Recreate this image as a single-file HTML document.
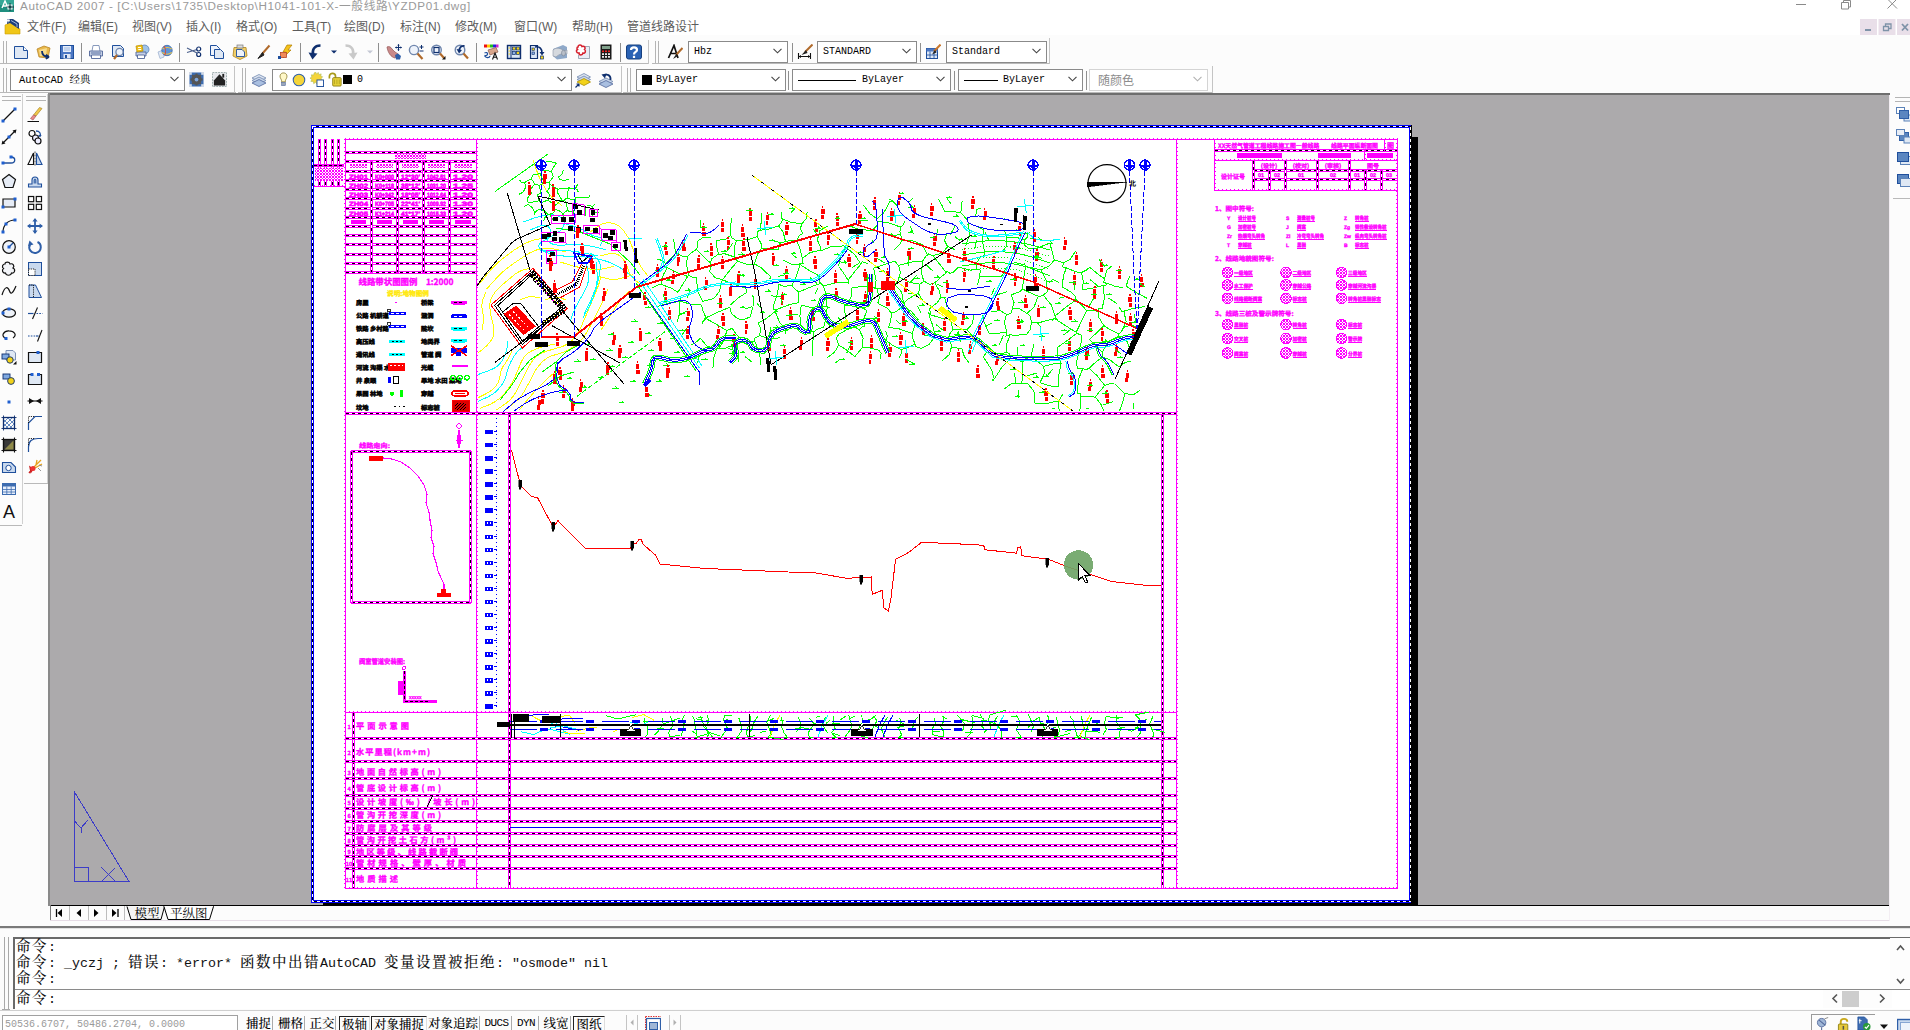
<!DOCTYPE html>
<html lang="zh"><head><meta charset="utf-8"><title>AutoCAD 2007</title>
<style>
html,body{margin:0;padding:0;}
body{width:1910px;height:1030px;overflow:hidden;position:relative;background:#fcfcfc;
 font-family:"Liberation Sans","Noto Sans CJK SC",sans-serif;font-size:12px;color:#000;}
.abs{position:absolute;}
#titlebar{left:0;top:0;width:1910px;height:15px;background:#fff;}
#title{left:20px;top:-4px;font-size:11.7px;color:#9a9a9a;white-space:nowrap;letter-spacing:0.6px;}
#menubar{left:0;top:15px;width:1910px;height:20px;background:#fff;}
.mi{position:absolute;top:19px;font-size:12px;color:#5c5c5c;white-space:nowrap;line-height:16px;}
.tb{position:absolute;background:#fcfcfc;}
.grip{position:absolute;width:1px;background:#b4b4b4;}
.sep{position:absolute;width:1px;height:19px;background:#8f8f8f;}
.combo{position:absolute;height:19px;border:1px solid #8a8a8a;background:#fff;box-sizing:content-box;
 font-family:"Liberation Mono","Noto Serif CJK SC",monospace;font-size:11px;line-height:19px;white-space:nowrap;}
.combo .t{position:absolute;left:5px;top:0;}
.combo .arr{position:absolute;right:5px;top:6px;width:9px;height:6px;}
.cmd{position:absolute;left:16px;font-family:"Liberation Mono",monospace;font-size:13.33px;line-height:16px;white-space:pre;color:#111;}
.cmd b{font-weight:500;font-family:"Noto Serif CJK SC",serif;font-size:14.5px;letter-spacing:1.5px;}
.sb{position:absolute;top:1016px;height:14px;font-family:"Noto Serif CJK SC","Liberation Serif",serif;font-weight:500;font-size:12.5px;line-height:15px;white-space:nowrap;color:#000;}
.sbp{border-left:1px solid #222;border-top:1px solid #222;border-right:1px solid #ddd;}
.sbn{border-right:1px solid #aaa;}
</style></head>
<body>
<div id="titlebar" class="abs"></div>
<svg class="abs" style="left:0;top:0" width="15" height="13" viewBox="0 0 15 13"><rect x="0" y="0" width="14" height="12" fill="#1f8f7f"/><rect x="0" y="0" width="14" height="5" fill="#35a796"/><path d="M2 8 L5 1 L8 8 M3.2 6 H6.8" stroke="#fff" stroke-width="1.4" fill="none"/><rect x="8" y="5" width="4" height="4" fill="none" stroke="#fff" stroke-width="1"/><path d="M10 3 V11 M6.5 7 H14" stroke="#123" stroke-width="0.8"/></svg>
<div id="title" class="abs">AutoCAD 2007 - [C:\Users\1735\Desktop\H1041-101-X-一般线路\YZDP01.dwg]</div>
<svg class="abs" style="left:1780px;top:0" width="130" height="14" viewBox="0 0 130 14"><path d="M16 4.5 H26" stroke="#8a8a8a" stroke-width="1"/><path d="M61.5 2.5 h7 v6.5 h-7 z M63.5 2.5 v-2 h7 v6.5 h-2" fill="none" stroke="#8a8a8a" stroke-width="1"/><path d="M107.5 -1 L117 8.5 M117 -1 L107.5 8.5" stroke="#8a8a8a" stroke-width="1"/></svg>
<div id="menubar" class="abs"></div>
<svg class="abs" style="left:4px;top:18px" width="18" height="17" viewBox="0 0 18 17"><path d="M1 16 V7 L6 5 L16 11 V16 Z" fill="#f0c617" stroke="#c99a00" stroke-width="0.6"/><path d="M3 1 L9 1 L15 5 V11 L6 5 L3 6 Z" fill="#1d3f7a"/><path d="M7 2.5 L13 6 V9" stroke="#9fb6dd" stroke-width="1" fill="none"/><path d="M4 0.5 v4 M2 2.5 h4 M2.6 1.1 l2.8 2.8 M5.4 1.1 l-2.8 2.8" stroke="#fff" stroke-width="0.8"/></svg>
<div class="mi" style="left:27px">文件(F)</div>
<div class="mi" style="left:78px">编辑(E)</div>
<div class="mi" style="left:132px">视图(V)</div>
<div class="mi" style="left:186px">插入(I)</div>
<div class="mi" style="left:236px">格式(O)</div>
<div class="mi" style="left:292px">工具(T)</div>
<div class="mi" style="left:344px">绘图(D)</div>
<div class="mi" style="left:400px">标注(N)</div>
<div class="mi" style="left:455px">修改(M)</div>
<div class="mi" style="left:514px">窗口(W)</div>
<div class="mi" style="left:572px">帮助(H)</div>
<div class="mi" style="left:627px">管道线路设计</div>
<svg class="abs" style="left:1860px;top:19px" width="52" height="18" viewBox="0 0 52 18"><rect x="0" y="0" width="17" height="17" fill="#e9dfe9"/><rect x="18.5" y="0" width="17" height="17" fill="#e9dfe9"/><rect x="37" y="0" width="17" height="17" fill="#e9dfe9"/><rect x="5" y="10" width="6" height="2" fill="#7f93a8"/><path d="M23.5 7.5 h5 v4 h-5 z M25.5 7 v-2 h5.5 v4.5 h-2" fill="none" stroke="#7f93a8" stroke-width="1.3"/><path d="M42 5 L48 11.5 M48 5 L42 11.5" stroke="#7f93a8" stroke-width="1.8"/></svg>
<div class="abs" style="left:0;top:35px;width:1910px;height:59px;background:#fcfcfc"></div>
<div class="grip" style="left:3px;top:41px;height:22px"></div><div class="grip" style="left:6px;top:41px;height:22px"></div>
<svg class="abs" style="left:13px;top:44px" width="16" height="16" viewBox="0 0 16 16"><path d="M1.5 2.5 H10.5 L14.5 6.5 V14.5 H1.5 Z" fill="#dfe8f4" stroke="#1f4f9c"/><path d="M10.5 2.5 V6.5 H14.5" fill="#fff" stroke="#1f4f9c"/></svg>
<svg class="abs" style="left:36px;top:44px" width="16" height="16" viewBox="0 0 16 16"><path d="M1 5 L8 2 L14 4 L12 14 L3 13 Z" fill="#e9b84a" stroke="#b8862a" stroke-width="0.8"/><path d="M3 6 L11 4 L10 12 L4 12 Z" fill="#f6dc8f"/><path d="M6 7 C6 11 9 13 13 13 M13 13 l-3 -2.4 M13 13 l-3.2 1.8" stroke="#0f2f6e" stroke-width="1.8" fill="none"/></svg>
<svg class="abs" style="left:59px;top:44px" width="16" height="16" viewBox="0 0 16 16"><rect x="1.5" y="1.5" width="13" height="13" fill="#4c78c4" stroke="#1f4f9c"/><rect x="4" y="2" width="8" height="6" fill="#e6eefb"/><path d="M5 4 H11 M5 6 H11" stroke="#8aa8d8" stroke-width="0.8"/><rect x="4.5" y="10" width="7" height="4.5" fill="#dfe7f5"/><rect x="6" y="11" width="2" height="3" fill="#1f4f9c"/></svg>
<svg class="abs" style="left:88px;top:44px" width="16" height="16" viewBox="0 0 16 16"><path d="M4 7 L5 1.5 H11 L12 7" fill="#fff" stroke="#7a8fb5" stroke-width="0.9"/><path d="M1.5 7 H14.5 V12 H1.5 Z" fill="#c5d0e6" stroke="#51679a" stroke-width="0.9"/><path d="M3.5 11 H12.5 V14.5 H3.5 Z" fill="#fff" stroke="#51679a" stroke-width="0.9"/><path d="M3 9 H13" stroke="#51679a" stroke-width="0.9"/></svg>
<svg class="abs" style="left:111px;top:44px" width="16" height="16" viewBox="0 0 16 16"><path d="M1.5 1.5 H9.5 L12.5 4.5 V12.5 H1.5 Z" fill="#dfe8f4" stroke="#1f4f9c"/><circle cx="8.5" cy="8" r="3.6" fill="#eef3fb" stroke="#6f86ad" stroke-width="1.3"/><path d="M6 11 L3 15" stroke="#b06a2b" stroke-width="2.2"/></svg>
<svg class="abs" style="left:133.5px;top:44px" width="16" height="16" viewBox="0 0 16 16"><circle cx="10.5" cy="5.5" r="4.5" fill="#9fc3e8" stroke="#5b82b8" stroke-width="0.8"/><path d="M2 8 H12 V12 H2 Z" fill="#c5d0e6" stroke="#51679a" stroke-width="0.9"/><path d="M3.5 11 H10.5 V14.5 H3.5 Z" fill="#fff" stroke="#51679a" stroke-width="0.9"/><path d="M2 2 L8 1 L9 7 L3 8 Z" fill="#f2c21a" stroke="#b88d00" stroke-width="0.7"/><path d="M4 3.5 H7 M4.3 5.5 H7.2" stroke="#fff" stroke-width="1"/></svg>
<svg class="abs" style="left:157px;top:44px" width="16" height="16" viewBox="0 0 16 16"><path d="M1 8 L6 6 L7 13 L3 14.5 Z" fill="#dfe8f4" stroke="#9fb2d1" stroke-width="0.8"/><circle cx="10" cy="6.5" r="5.2" fill="#5e93d6" stroke="#3a68ad" stroke-width="0.8"/><path d="M5.5 5 C8 3 12 3 14.6 5 M5.2 8.5 C8 10.5 12 10.5 14.8 8.5" stroke="#e9c34a" stroke-width="1.1" fill="none"/><path d="M7 2 C9 5 9 9 7.5 11.2" stroke="#d94a3a" stroke-width="1.1" fill="none"/></svg>
<svg class="abs" style="left:186px;top:44px" width="16" height="16" viewBox="0 0 16 16"><path d="M1 4 L11 9 M1 8.5 L11 5.5" stroke="#4a5f8c" stroke-width="1.1"/><circle cx="12.7" cy="5" r="2" fill="none" stroke="#0f2f6e" stroke-width="1.2"/><circle cx="12.7" cy="10.5" r="2" fill="none" stroke="#0f2f6e" stroke-width="1.2"/></svg>
<svg class="abs" style="left:209px;top:44px" width="16" height="16" viewBox="0 0 16 16"><path d="M1.5 1.5 H7.5 L10.5 4.5 V11.5 H1.5 Z" fill="#eef3fb" stroke="#1f4f9c"/><path d="M5.5 5.5 H11.5 L14.5 8.5 V14.5 H5.5 Z" fill="#dfe8f4" stroke="#1f4f9c"/></svg>
<svg class="abs" style="left:231.5px;top:44px" width="16" height="16" viewBox="0 0 16 16"><path d="M2 3.5 H14 L15 12 L8 15.5 L1 12 Z" fill="#f0cf6a" stroke="#b88d2a" stroke-width="0.9"/><rect x="5" y="1" width="6" height="3" fill="#ddd" stroke="#777" stroke-width="0.7"/><path d="M4.5 5.5 H10 L12.5 8 V12.5 H4.5 Z" fill="#eef3fb" stroke="#1f4f9c" stroke-width="0.9"/></svg>
<svg class="abs" style="left:255px;top:44px" width="16" height="16" viewBox="0 0 16 16"><path d="M14.5 1.5 L7 10" stroke="#b06a2b" stroke-width="2"/><path d="M7.5 8.5 L3 14.5 L9 11 Z" fill="#222" stroke="#222" stroke-width="1"/></svg>
<svg class="abs" style="left:277px;top:44px" width="16" height="16" viewBox="0 0 16 16"><path d="M10 1 L15 1 L11 6 L14 6 L6 14 L8.5 8 L6 8 Z" fill="#f5c31a" stroke="#b07b00" stroke-width="0.7"/><rect x="3.5" y="8.5" width="6" height="5" fill="#f08a5a" stroke="#b5482a" stroke-width="0.8"/><rect x="1" y="12" width="3" height="3" fill="#1f4f9c"/></svg>
<svg class="abs" style="left:307px;top:44px" width="16" height="16" viewBox="0 0 16 16"><path d="M13.5 1.5 C7 1.5 5 6 6 11" stroke="#0f2f6e" stroke-width="2.6" fill="none"/><path d="M1.5 8.5 L10.5 9.5 L5.5 15.5 Z" fill="#0f2f6e"/></svg>
<svg class="abs" style="left:326px;top:44px" width="16" height="16" viewBox="0 0 16 16"><path d="M5 6.5 H11 L8 9.5 Z" fill="#0f2f6e"/></svg>
<svg class="abs" style="left:343px;top:44px" width="16" height="16" viewBox="0 0 16 16"><path d="M2.5 1.5 C9 1.5 11 6 10 11" stroke="#c9c9c9" stroke-width="2.6" fill="none"/><path d="M14.5 8.5 L5.5 9.5 L10.5 15.5 Z" fill="#c9c9c9"/></svg>
<svg class="abs" style="left:362px;top:44px" width="16" height="16" viewBox="0 0 16 16"><path d="M5 6.5 H11 L8 9.5 Z" fill="#c4c8d4"/></svg>
<svg class="abs" style="left:385.5px;top:44px" width="16" height="16" viewBox="0 0 16 16"><path d="M1 3 C3 2 5 3 6 5 L9 8 L12 10 L9 14 C5 13 2 9 1 3 Z" fill="#c98a8a" stroke="#9a5e5e" stroke-width="0.8"/><path d="M9 11 L12 9.5 L15 12 L14 15.5 H10 Z" fill="#2f5fa8"/><path d="M12.5 0.5 V6.5 M9.5 3.5 H15.5" stroke="#0f2f6e" stroke-width="1"/><path d="M12.5 0 l-1.3 1.6 h2.6 z M12.5 7 l-1.3 -1.6 h2.6 z M9 3.5 l1.6 -1.3 v2.6 z M16 3.5 l-1.6 -1.3 v2.6 z" fill="#0f2f6e"/></svg>
<svg class="abs" style="left:408px;top:44px" width="16" height="16" viewBox="0 0 16 16"><circle cx="6" cy="6" r="4.6" fill="#eef3fb" stroke="#6f86ad" stroke-width="1.4"/><path d="M9.5 9.5 L14.5 15" stroke="#b06a2b" stroke-width="2.2"/><path d="M11.5 3 H15.5 M13.5 1 V5 M11.5 7 H15.5" stroke="#0f2f6e" stroke-width="1"/></svg>
<svg class="abs" style="left:430px;top:44px" width="16" height="16" viewBox="0 0 16 16"><circle cx="6.5" cy="6" r="4.8" fill="#eef3fb" stroke="#6f86ad" stroke-width="1.4"/><rect x="4" y="3.5" width="5" height="5" fill="none" stroke="#0f2f6e" stroke-width="1.2"/><path d="M10 9.5 L14 14" stroke="#b06a2b" stroke-width="2.2"/><path d="M15.5 12 V15.5 H12 Z" fill="#111"/></svg>
<svg class="abs" style="left:453px;top:44px" width="16" height="16" viewBox="0 0 16 16"><circle cx="7" cy="6" r="4.8" fill="#eef3fb" stroke="#6f86ad" stroke-width="1.4"/><path d="M10.5 9.5 L15 14.5" stroke="#b06a2b" stroke-width="2.2"/><path d="M11.5 2 C8 1.5 6 4 6.5 7" stroke="#0f2f6e" stroke-width="1.8" fill="none"/><path d="M3.5 5 L9 6 L6 9.5 Z" fill="#0f2f6e"/></svg>
<svg class="abs" style="left:483px;top:44px" width="16" height="16" viewBox="0 0 16 16"><rect x="1" y="0.5" width="3" height="3" fill="#e11"/><rect x="4" y="0.5" width="3" height="3" fill="#fc0"/><rect x="7" y="0.5" width="3" height="3" fill="#2b2"/><rect x="10" y="0.5" width="3" height="3" fill="#22d"/><rect x="13" y="0.5" width="2.5" height="3" fill="#c2c"/><path d="M5 6 L13 3.5 L15 8 L7 11 Z" fill="#d9a58a" stroke="#8a5a4a" stroke-width="0.7"/><path d="M1.5 9 C5 7 6 12 2 11.5 C1 13 6 15 7 12" stroke="#1f4f9c" stroke-width="1.2" fill="none"/><path d="M9.5 15.5 L12 9 L14.5 15.5 M10.4 13.3 H13.6" stroke="#111" stroke-width="1.1" fill="none"/></svg>
<svg class="abs" style="left:506px;top:44px" width="16" height="16" viewBox="0 0 16 16"><rect x="1.5" y="1.5" width="13" height="13" fill="#dbe6f6" stroke="#0f2f6e" stroke-width="1.4"/><path d="M5 1.5 V14.5" stroke="#0f2f6e" stroke-width="1"/><rect x="6.5" y="3" width="3" height="3" fill="#f2d21a" stroke="#0f2f6e" stroke-width="0.7"/><rect x="10.5" y="3" width="3" height="3" fill="#f2d21a" stroke="#0f2f6e" stroke-width="0.7"/><rect x="6.5" y="7.5" width="3" height="3" fill="#8fb0de" stroke="#0f2f6e" stroke-width="0.7"/><rect x="10.5" y="7.5" width="3" height="3" fill="#f2d21a" stroke="#0f2f6e" stroke-width="0.7"/><path d="M2.5 4 h1.5 M2.5 7 h1.5 M2.5 10 h1.5" stroke="#f2d21a" stroke-width="1.2"/></svg>
<svg class="abs" style="left:529px;top:44px" width="16" height="16" viewBox="0 0 16 16"><path d="M1.5 1.5 H8.5 V14.5 H1.5 Z" fill="#dbe6f6" stroke="#0f2f6e" stroke-width="1.2"/><rect x="3" y="4" width="2.5" height="2.5" fill="#f2d21a" stroke="#0f2f6e" stroke-width="0.6"/><rect x="3" y="8" width="2.5" height="2.5" fill="#8fb0de" stroke="#0f2f6e" stroke-width="0.6"/><path d="M6 3 C11 2 13 5 13 9" stroke="#0f2f6e" stroke-width="1.6" fill="none"/><path d="M10.5 8 H15.5 L13 11.5 Z" fill="#0f2f6e"/><rect x="11.5" y="12" width="3" height="3" fill="#f2d21a" stroke="#0f2f6e" stroke-width="0.7"/></svg>
<svg class="abs" style="left:552px;top:44px" width="16" height="16" viewBox="0 0 16 16"><path d="M1 5 L11 1 L15 3 V14 L5 15.5 L1 12 Z" fill="#8fa9c9"/><path d="M1 6 C4 3 9 4 12 7 L15 6 V10 C11 9 7 10 4 13 L1 12 Z" fill="#d5d9de" stroke="#8a94a4" stroke-width="0.6"/><ellipse cx="11.5" cy="9" rx="2" ry="2.8" fill="#b9bfc9" stroke="#7a8494" stroke-width="0.6"/></svg>
<svg class="abs" style="left:575px;top:44px" width="16" height="16" viewBox="0 0 16 16"><path d="M6 2.5 H14.5 V14.5 H3.5 V11" fill="#e9eef6" stroke="#8a94a4" stroke-width="0.8"/><path d="M3 3 C3 0.5 6.5 0.5 7 2.5 C9.5 1.5 11 4 9.5 5.5 C11.5 7 10 10 8 9 C7.5 11.5 4 11.5 4 9 C1.5 9.5 0.5 6.5 2.5 5.5 C1.5 4.5 2 3 3 3 Z" fill="#fff" stroke="#d61f2c" stroke-width="1.5"/></svg>
<svg class="abs" style="left:598px;top:44px" width="16" height="16" viewBox="0 0 16 16"><rect x="2.5" y="0.5" width="11" height="15" fill="#1a1a1a"/><rect x="4" y="2" width="8" height="3" fill="#7fa08a"/><g fill="#e22"><rect x="4" y="6.5" width="2" height="1.6"/><rect x="7" y="6.5" width="2" height="1.6"/><rect x="10" y="6.5" width="2" height="1.6"/></g><g fill="#fff"><rect x="4" y="9.3" width="2" height="1.6"/><rect x="7" y="9.3" width="2" height="1.6"/><rect x="10" y="9.3" width="2" height="1.6"/><rect x="4" y="12.1" width="2" height="1.6"/><rect x="7" y="12.1" width="2" height="1.6"/><rect x="10" y="12.1" width="2" height="1.6"/></g></svg>
<svg class="abs" style="left:626px;top:44px" width="16" height="16" viewBox="0 0 16 16"><rect x="0.5" y="1" width="15" height="14" rx="2" fill="#2a62b4" stroke="#17407f"/><path d="M5 6 C5 2.5 11 2.5 11 6 C11 8 8 8 8 10.5" stroke="#fff" stroke-width="2.2" fill="none"/><rect x="6.9" y="11.8" width="2.2" height="2.2" fill="#fff"/></svg>
<div class="sep" style="left:81px;top:43px"></div>
<div class="sep" style="left:179px;top:43px"></div>
<div class="sep" style="left:300px;top:43px"></div>
<div class="sep" style="left:378px;top:43px"></div>
<div class="sep" style="left:476px;top:43px"></div>
<div class="sep" style="left:620px;top:43px"></div>
<div class="abs" style="left:0px;top:63px;width:648px;height:1px;background:#b9b9b9"></div>
<div class="abs" style="left:648px;top:40px;width:1px;height:24px;background:#c4c4c4"></div>
<div class="grip" style="left:655px;top:41px;height:22px"></div><div class="grip" style="left:658px;top:41px;height:22px"></div>
<svg class="abs" style="left:667px;top:44px" width="16" height="16" viewBox="0 0 16 16"><path d="M1.5 14 L7 1.5 L11 14 M3.5 9.5 H9.5" stroke="#111" stroke-width="1.7" fill="none"/><path d="M15.5 4 L9 11" stroke="#b06a2b" stroke-width="2"/><path d="M9.5 9.5 L6 15 L11 12 Z" fill="#222"/></svg>
<div class="combo" style="left:688px;top:41px;width:98px;height:20px;line-height:20px;border-color:#8a8a8a;color:#000;font-size:10px"><span class="t" style="left:5px">Hbz</span><svg class="arr" viewBox="0 0 9 6"><path d="M0.5 0.8 L4.5 4.8 L8.5 0.8" fill="none" stroke="#444" stroke-width="1.1"/></svg></div>
<div class="sep" style="left:792px;top:43px"></div>
<svg class="abs" style="left:797px;top:44px" width="16" height="16" viewBox="0 0 16 16"><path d="M1.5 9 V15 M13.5 9 V15 M1.5 12.5 H13.5" stroke="#111" stroke-width="1.1"/><path d="M1.5 12.5 l2.5 -1.5 v3 z M13.5 12.5 l-2.5 -1.5 v3 z" fill="#111"/><path d="M15.5 0.5 L8 8" stroke="#b06a2b" stroke-width="2"/><path d="M9 6 L4.5 11 L10.5 9 Z" fill="#222"/></svg>
<div class="combo" style="left:817px;top:41px;width:98px;height:20px;line-height:20px;border-color:#8a8a8a;color:#000;font-size:10px"><span class="t" style="left:5px">STANDARD</span><svg class="arr" viewBox="0 0 9 6"><path d="M0.5 0.8 L4.5 4.8 L8.5 0.8" fill="none" stroke="#444" stroke-width="1.1"/></svg></div>
<div class="sep" style="left:920px;top:43px"></div>
<svg class="abs" style="left:925px;top:44px" width="16" height="16" viewBox="0 0 16 16"><rect x="1.5" y="4.5" width="11" height="10" fill="#dbe6f6" stroke="#1f4f9c" stroke-width="1"/><rect x="1.5" y="4.5" width="11" height="3" fill="#4c78c4"/><path d="M5 7.5 V14.5 M9 7.5 V14.5 M1.5 11 H12.5" stroke="#1f4f9c" stroke-width="0.8"/><path d="M15.5 0.5 L9 7.5" stroke="#c9762b" stroke-width="2"/><path d="M10 6 L7 10.5 L11.5 8.5 Z" fill="#222"/></svg>
<div class="combo" style="left:946px;top:41px;width:99px;height:20px;line-height:20px;border-color:#8a8a8a;color:#000;font-size:10px"><span class="t" style="left:5px">Standard</span><svg class="arr" viewBox="0 0 9 6"><path d="M0.5 0.8 L4.5 4.8 L8.5 0.8" fill="none" stroke="#444" stroke-width="1.1"/></svg></div>
<div class="abs" style="left:652px;top:63px;width:398px;height:1px;background:#b9b9b9"></div>
<div class="abs" style="left:1049px;top:38px;width:1px;height:26px;background:#c4c4c4"></div>
<div class="grip" style="left:3px;top:68px;height:24px"></div><div class="grip" style="left:6px;top:68px;height:24px"></div>
<div class="combo" style="left:10px;top:69px;width:173px;height:20px;line-height:20px;border-color:#8a8a8a;color:#000;font-size:10.5px"><span class="t" style="left:8px">AutoCAD 经典</span><svg class="arr" viewBox="0 0 9 6"><path d="M0.5 0.8 L4.5 4.8 L8.5 0.8" fill="none" stroke="#444" stroke-width="1.1"/></svg></div>
<svg class="abs" style="left:188.5px;top:72px" width="15" height="15" viewBox="0 0 16 16"><rect x="0.5" y="0.5" width="15" height="15" fill="#3d6cb0"/><circle cx="8" cy="8" r="4.2" fill="none" stroke="#555" stroke-width="2.6"/><path d="M8 1.5 V14.5 M1.5 8 H14.5 M3.4 3.4 L12.6 12.6 M12.6 3.4 L3.4 12.6" stroke="#555" stroke-width="2"/><circle cx="8" cy="8" r="2" fill="#7fa8e0"/><rect x="0" y="0" width="3" height="3" fill="#cfd8e6"/><rect x="13" y="0" width="3" height="3" fill="#cfd8e6"/><rect x="0" y="13" width="3" height="3" fill="#cfd8e6"/><rect x="13" y="13" width="3" height="3" fill="#cfd8e6"/></svg>
<svg class="abs" style="left:211.5px;top:72px" width="15" height="15" viewBox="0 0 16 16"><rect x="0.5" y="0.5" width="15" height="15" fill="#e6e8ec" stroke="#9aa" stroke-dasharray="2 1"/><path d="M2 9 L8 2.5 L14 9 V14.5 H2 Z" fill="#222"/><rect x="11" y="2" width="2" height="4" fill="#222"/></svg>
<div class="abs" style="left:0px;top:92px;width:236px;height:1px;background:#b9b9b9"></div>
<div class="abs" style="left:234px;top:66px;width:1px;height:27px;background:#c4c4c4"></div>
<div class="grip" style="left:242px;top:68px;height:24px"></div><div class="grip" style="left:245px;top:68px;height:24px"></div>
<svg class="abs" style="left:251px;top:71.5px" width="16" height="16" viewBox="0 0 16 16"><path d="M1 6 L8 2.5 L15 6 L8 9.5 Z" fill="#dfe6f2" stroke="#6f86ad" stroke-width="0.8"/><path d="M1 8.5 L8 5 L15 8.5 L8 12 Z" fill="#c9d6ea" stroke="#6f86ad" stroke-width="0.8"/><path d="M1 11 L8 7.5 L15 11 L8 14.5 Z" fill="#a9bfe0" stroke="#51679a" stroke-width="0.8"/></svg>
<div class="combo" style="left:272px;top:69px;width:298px;height:20px;line-height:20px;border-color:#8a8a8a;color:#000;font-size:10px"><span class="t" style="left:84px">0</span><svg class="arr" viewBox="0 0 9 6"><path d="M0.5 0.8 L4.5 4.8 L8.5 0.8" fill="none" stroke="#444" stroke-width="1.1"/></svg></div>
<svg class="abs" style="left:275.5px;top:71.5px" width="15" height="15" viewBox="0 0 16 16"><path d="M8 1 C4.5 1 3.5 4.5 5 7 C6 8.5 6 9.5 6 10.5 H10 C10 9.5 10 8.5 11 7 C12.5 4.5 11.5 1 8 1 Z" fill="#fff8c8" stroke="#8a7a2a" stroke-width="0.9"/><rect x="6" y="11" width="4" height="3.5" fill="#9aa6b8" stroke="#51679a" stroke-width="0.6"/></svg>
<svg class="abs" style="left:291.5px;top:72.5px" width="14" height="14" viewBox="0 0 16 16"><circle cx="8" cy="8" r="6.6" fill="#f5d53a" stroke="#2f5fa8" stroke-width="1.2"/></svg>
<svg class="abs" style="left:308.5px;top:72px" width="15" height="15" viewBox="0 0 16 16"><path d="M7 0 L8 2 L10 0.5 L10.5 2.8 L13 2 L12.5 4.5 L14.5 5 L13 7 L14.5 9 L12 9.5 L12 12 L9.8 11 L8.5 13 L7 11 L5 12.5 L4.5 10 L2 10 L3 8 L1 6.5 L3 5.5 L2.5 3 L5 3.2 L5.5 1 Z" fill="#f5d53a" stroke="#a8b85a" stroke-width="0.6"/><rect x="8.5" y="8.5" width="7" height="7" fill="#fff" stroke="#1f4f9c" stroke-width="1"/></svg>
<svg class="abs" style="left:327.5px;top:71.5px" width="15" height="15" viewBox="0 0 16 16"><path d="M1.5 7 V4.5 C1.5 0.5 8 0.5 8 4.5 V6" fill="none" stroke="#a89a1a" stroke-width="1.8"/><rect x="5" y="6" width="9" height="9" rx="1" fill="#e6d23a" stroke="#8a7a0a" stroke-width="0.9"/><path d="M7 8 V13 M9.5 8 V13 M12 8 V13" stroke="#a89a1a" stroke-width="0.8"/></svg>
<div class="abs" style="left:343px;top:75px;width:9px;height:9px;background:#000"></div>
<svg class="abs" style="left:575px;top:71.5px" width="16" height="16" viewBox="0 0 16 16"><path d="M2 5 L9 1.5 L15.5 5 L9 8.5 Z" fill="#dfe6f2" stroke="#6f86ad" stroke-width="0.8"/><path d="M2 7.5 L9 4 L15.5 7.5 L9 11 Z" fill="#c9d6ea" stroke="#6f86ad" stroke-width="0.8"/><path d="M2 10 L9 6.5 L15.5 10 L9 13.5 Z" fill="#f2d21a" stroke="#a88d00" stroke-width="0.8"/><path d="M0.5 15.5 L4 12 M4 12 h-2.5 M4 12 v2.5" stroke="#0f2f6e" stroke-width="1.2" fill="none"/></svg>
<svg class="abs" style="left:598px;top:71.5px" width="16" height="16" viewBox="0 0 16 16"><path d="M1 9.5 L8 6 L15 9.5 L8 13 Z" fill="#c9d6ea" stroke="#6f86ad" stroke-width="0.8"/><path d="M1 12 L8 8.5 L15 12 L8 15.5 Z" fill="#a9bfe0" stroke="#51679a" stroke-width="0.8"/><path d="M12.5 8 C13 3 9 1.5 6 3.5" stroke="#0f2f6e" stroke-width="1.8" fill="none"/><path d="M3.5 2.5 L8.5 1.5 L7 6.5 Z" fill="#0f2f6e"/></svg>
<div class="abs" style="left:238px;top:92px;width:384px;height:1px;background:#b9b9b9"></div>
<div class="abs" style="left:621px;top:66px;width:1px;height:27px;background:#c4c4c4"></div>
<div class="grip" style="left:627px;top:68px;height:24px"></div><div class="grip" style="left:630px;top:68px;height:24px"></div>
<div class="combo" style="left:636px;top:69px;width:148px;height:20px;line-height:20px;border-color:#8a8a8a;color:#000;font-size:10px"><div style="position:absolute;left:5px;top:5px;width:10px;height:10px;background:#000"></div><span class="t" style="left:19px">ByLayer</span><svg class="arr" viewBox="0 0 9 6"><path d="M0.5 0.8 L4.5 4.8 L8.5 0.8" fill="none" stroke="#444" stroke-width="1.1"/></svg></div>
<div class="abs" style="left:788px;top:71px;width:1px;height:19px;background:#8f8f8f"></div>
<div class="combo" style="left:792px;top:69px;width:157px;height:20px;line-height:20px;border-color:#8a8a8a;color:#000;font-size:10px"><div style="position:absolute;left:5px;top:10px;width:58px;height:1px;background:#000"></div><span class="t" style="left:69px">ByLayer</span><svg class="arr" viewBox="0 0 9 6"><path d="M0.5 0.8 L4.5 4.8 L8.5 0.8" fill="none" stroke="#444" stroke-width="1.1"/></svg></div>
<div class="abs" style="left:954px;top:71px;width:1px;height:19px;background:#8f8f8f"></div>
<div class="combo" style="left:958px;top:69px;width:123px;height:20px;line-height:20px;border-color:#8a8a8a;color:#000;font-size:10px"><div style="position:absolute;left:5px;top:10px;width:34px;height:1px;background:#000"></div><span class="t" style="left:44px">ByLayer</span><svg class="arr" viewBox="0 0 9 6"><path d="M0.5 0.8 L4.5 4.8 L8.5 0.8" fill="none" stroke="#444" stroke-width="1.1"/></svg></div>
<div class="abs" style="left:1086px;top:71px;width:1px;height:19px;background:#8f8f8f"></div>
<div class="combo" style="left:1089px;top:69px;width:117px;height:20px;line-height:20px;border-color:#d4d4d4;color:#8c8c8c;font-size:10px"><span class="t" style="left:8px"><span style="font-family:'Noto Sans CJK SC',sans-serif;font-size:12px">随颜色</span></span><svg class="arr" viewBox="0 0 9 6"><path d="M0.5 0.8 L4.5 4.8 L8.5 0.8" fill="none" stroke="#b0b0b0" stroke-width="1.1"/></svg></div>
<div class="abs" style="left:623px;top:92px;width:590px;height:1px;background:#b9b9b9"></div>
<div class="abs" style="left:1212px;top:66px;width:1px;height:27px;background:#c4c4c4"></div>
<div class="abs" style="left:0;top:94px;width:48px;height:812px;background:#fcfcfc"></div>
<div class="abs" style="left:2px;top:96px;width:19px;height:1px;background:#b4b4b4"></div>
<div class="abs" style="left:2px;top:100px;width:19px;height:1px;background:#b4b4b4"></div>
<div class="abs" style="left:26px;top:96px;width:20px;height:1px;background:#b4b4b4"></div>
<div class="abs" style="left:26px;top:100px;width:20px;height:1px;background:#b4b4b4"></div>
<div class="abs" style="left:22px;top:94px;width:1px;height:430px;background:#d0d0d0"></div>
<div class="abs" style="left:47px;top:94px;width:1px;height:390px;background:#d0d0d0"></div>
<svg class="abs" style="left:1px;top:107px" width="16" height="16" viewBox="0 0 16 16"><path d="M2 14 L14 2" stroke="#111" stroke-width="1.2"/><rect x="0.5" y="12.5" width="3" height="3" fill="#1f5fd0"/><rect x="12.5" y="0.5" width="3" height="3" fill="#1f5fd0"/></svg>
<svg class="abs" style="left:1px;top:129px" width="16" height="16" viewBox="0 0 16 16"><path d="M1.5 14.5 L14.5 1.5" stroke="#111" stroke-width="1.2"/><path d="M0.5 15.5 l1 -4 l3 3 z M15.5 0.5 l-1 4 l-3 -3 z" fill="#111"/><rect x="6.5" y="6.5" width="3" height="3" fill="#1f5fd0"/></svg>
<svg class="abs" style="left:1px;top:150.6px" width="16" height="16" viewBox="0 0 16 16"><path d="M2 12 H10 C15 12 15 6 10 6" stroke="#1f4f9c" stroke-width="1.3" fill="none"/><rect x="0.5" y="10.5" width="3" height="3" fill="#1f5fd0"/><rect x="8.5" y="4.5" width="3" height="3" fill="#1f5fd0"/></svg>
<svg class="abs" style="left:1px;top:173px" width="16" height="16" viewBox="0 0 16 16"><path d="M8 1.5 L14.5 6.5 L12 14.5 H4 L1.5 6.5 Z" fill="#e6ecf6" stroke="#111" stroke-width="1.2"/></svg>
<svg class="abs" style="left:1px;top:195px" width="16" height="16" viewBox="0 0 16 16"><path d="M2 4 H14 V12 H2 Z" fill="#e6ecf6" stroke="#111" stroke-width="1.2"/><rect x="0.5" y="10.5" width="3" height="3" fill="#1f5fd0"/><rect x="12.5" y="2.5" width="3" height="3" fill="#1f5fd0"/></svg>
<svg class="abs" style="left:1px;top:217.5px" width="16" height="16" viewBox="0 0 16 16"><path d="M2 14 C2 7 7 2 14 2" stroke="#111" stroke-width="1.2" fill="none"/><rect x="0.5" y="12.5" width="3" height="3" fill="#1f5fd0"/><rect x="12.5" y="0.5" width="3" height="3" fill="#1f5fd0"/><rect x="3.5" y="4.5" width="3" height="3" fill="#1f5fd0"/></svg>
<svg class="abs" style="left:1px;top:238.5px" width="16" height="16" viewBox="0 0 16 16"><circle cx="8" cy="8" r="6.3" fill="#eef2f8" stroke="#111" stroke-width="1.2"/><path d="M8 8 L12 4" stroke="#1f4f9c" stroke-width="1.2"/><rect x="6.5" y="6.5" width="3" height="3" fill="#1f5fd0"/></svg>
<svg class="abs" style="left:1px;top:261px" width="16" height="16" viewBox="0 0 16 16"><path d="M4 3 C4 0.5 8.5 0.5 9 3 C12 2 14 5 12 7 C15 8.5 13.5 13 10.5 12 C10 15 5 15 4.5 12 C1.5 12.5 0.5 9 2.5 7.5 C0.5 6 1.5 3 4 3 Z" fill="#f2f4f8" stroke="#111" stroke-width="1.2"/></svg>
<svg class="abs" style="left:1px;top:283px" width="16" height="16" viewBox="0 0 16 16"><path d="M1 12 C4 2 7 4 8.5 8 C10 12 12 10 15 3" stroke="#111" stroke-width="1.2" fill="none"/></svg>
<svg class="abs" style="left:1px;top:305px" width="16" height="16" viewBox="0 0 16 16"><ellipse cx="8" cy="8" rx="6.5" ry="4.2" fill="#eef2f8" stroke="#111" stroke-width="1.2"/><rect x="0.5" y="6.5" width="3" height="3" fill="#1f5fd0"/><rect x="6.5" y="2.5" width="3" height="3" fill="#1f5fd0"/></svg>
<svg class="abs" style="left:1px;top:327px" width="16" height="16" viewBox="0 0 16 16"><path d="M5 11.5 C-1 9 3 3.5 8 3.8 C13 3.8 16.5 8 12 11" stroke="#111" stroke-width="1.2" fill="none"/><rect x="3.5" y="10" width="3" height="3" fill="#1f5fd0"/></svg>
<svg class="abs" style="left:1px;top:348.7px" width="16" height="16" viewBox="0 0 16 16"><path d="M5 1.5 H12 L14.5 4 V11 H5 Z" fill="#dfe8f4" stroke="#6f86ad" stroke-width="0.9"/><rect x="1" y="5" width="7" height="5" fill="#7fa8e0" stroke="#0f2f6e" stroke-width="0.9"/><circle cx="9" cy="11" r="3.2" fill="#f2d21a" stroke="#0f2f6e" stroke-width="0.9"/><path d="M15.5 12 V15.5 H12 Z" fill="#111"/></svg>
<svg class="abs" style="left:1px;top:370.5px" width="16" height="16" viewBox="0 0 16 16"><rect x="2" y="3" width="7" height="5" fill="#7fa8e0" stroke="#0f2f6e" stroke-width="0.9"/><circle cx="10" cy="10" r="3.4" fill="#f2d21a" stroke="#0f2f6e" stroke-width="0.9"/></svg>
<svg class="abs" style="left:1px;top:393px" width="16" height="16" viewBox="0 0 16 16"><rect x="6.5" y="7.5" width="3" height="3" fill="#1f5fd0"/></svg>
<svg class="abs" style="left:1px;top:415px" width="16" height="16" viewBox="0 0 16 16"><rect x="2.5" y="2.5" width="11" height="11" fill="none" stroke="#0f2f6e" stroke-width="1.3"/><path d="M0.5 2.5 H15.5 M0.5 13.5 H15.5 M2.5 0.5 V15.5 M13.5 0.5 V15.5" stroke="#0f2f6e" stroke-width="0.9"/><path d="M3 7 L7 3 M3 11 L11 3 M5 13 L13 5 M9 13 L13 9 M3 5 L11 13 M7 3 L13 9 M3 9 L7 13" stroke="#3d6cb0" stroke-width="0.8"/></svg>
<svg class="abs" style="left:1px;top:437px" width="16" height="16" viewBox="0 0 16 16"><rect x="2.5" y="2.5" width="11" height="11" fill="#3a3a3a" stroke="#111" stroke-width="1.3"/><path d="M3.5 12.5 L12.5 3.5 V12.5 Z" fill="#8f8a4a"/><path d="M0.5 2.5 H15.5 M0.5 13.5 H15.5 M2.5 0.5 V15.5 M13.5 0.5 V15.5" stroke="#111" stroke-width="1.1"/></svg>
<svg class="abs" style="left:1px;top:459px" width="16" height="16" viewBox="0 0 16 16"><path d="M1.5 3.5 H10 L14.5 8 V13.5 H1.5 Z" fill="#c9d9ee" stroke="#1f4f9c" stroke-width="1.1"/><circle cx="7.5" cy="9" r="2.7" fill="#fff" stroke="#1f4f9c" stroke-width="1"/></svg>
<svg class="abs" style="left:1px;top:480.7px" width="16" height="16" viewBox="0 0 16 16"><rect x="1.5" y="2.5" width="13" height="11" fill="#e6eefb" stroke="#3d6cb0" stroke-width="1"/><rect x="1.5" y="2.5" width="13" height="3" fill="#3d6cb0"/><path d="M1.5 8.5 H14.5 M1.5 11 H14.5 M5.8 5.5 V13.5 M10.2 5.5 V13.5" stroke="#3d6cb0" stroke-width="0.8"/></svg>
<svg class="abs" style="left:1px;top:503px" width="16" height="16" viewBox="0 0 16 16"><text x="8" y="14.5" font-family="Liberation Sans, sans-serif" font-size="18" text-anchor="middle" fill="#111">A</text></svg>
<svg class="abs" style="left:27px;top:107px" width="16" height="16" viewBox="0 0 16 16"><path d="M9 9 L15 1.5 L12.5 0.5 L6.5 8 Z" fill="#f2c84a" stroke="#a8862a" stroke-width="0.7"/><path d="M6.5 8 L9 9 L6 13 L3.5 11.5 Z" fill="#e88a8a" stroke="#a85a5a" stroke-width="0.7"/><path d="M0.5 14.5 H12" stroke="#111" stroke-width="1"/></svg>
<svg class="abs" style="left:27px;top:129px" width="16" height="16" viewBox="0 0 16 16"><circle cx="5" cy="4.5" r="3" fill="none" stroke="#111" stroke-width="1.2"/><circle cx="8.5" cy="9" r="3" fill="#eef" stroke="#111" stroke-width="1.2"/><circle cx="11" cy="12" r="3" fill="#eef" stroke="#111" stroke-width="1.2"/><path d="M9 2 C13 2 14 5 13 7" stroke="#1f4f9c" stroke-width="1.3" fill="none"/><path d="M13 8.5 l-2 -2.5 h3.6 z" fill="#1f4f9c"/></svg>
<svg class="abs" style="left:27px;top:150.6px" width="16" height="16" viewBox="0 0 16 16"><path d="M6.5 2 V13.5 H1 Z" fill="#fff" stroke="#111" stroke-width="1.1"/><path d="M9.5 2 V13.5 H15 Z" fill="#c9d9ee" stroke="#1f4f9c" stroke-width="1.1"/><path d="M8 0.5 V15.5" stroke="#111" stroke-width="0.8" stroke-dasharray="2 1"/></svg>
<svg class="abs" style="left:27px;top:173px" width="16" height="16" viewBox="0 0 16 16"><path d="M1.5 14 V11 H5 V7 C5 3 11 3 11 7 V11 H14.5 V14 Z" fill="#c9d9ee" stroke="#1f4f9c" stroke-width="1.1"/><path d="M7.2 10.5 V7 C7.2 5.8 8.8 5.8 8.8 7 V10.5" fill="none" stroke="#1f4f9c" stroke-width="1"/></svg>
<svg class="abs" style="left:27px;top:195px" width="16" height="16" viewBox="0 0 16 16"><rect x="1.5" y="1.5" width="5.2" height="5.2" fill="#fff" stroke="#111" stroke-width="1.2"/><rect x="9.3" y="1.5" width="5.2" height="5.2" fill="#fff" stroke="#111" stroke-width="1.2"/><rect x="1.5" y="9.3" width="5.2" height="5.2" fill="#fff" stroke="#111" stroke-width="1.2"/><rect x="9.3" y="9.3" width="5.2" height="5.2" fill="#fff" stroke="#111" stroke-width="1.2"/></svg>
<svg class="abs" style="left:27px;top:217.5px" width="16" height="16" viewBox="0 0 16 16"><path d="M8 1 V15 M1 8 H15" stroke="#2f5fa8" stroke-width="1.8"/><path d="M8 0 l-2.6 3.4 h5.2 z M8 16 l-2.6 -3.4 h5.2 z M0 8 l3.4 -2.6 v5.2 z M16 8 l-3.4 -2.6 v5.2 z" fill="#2f5fa8"/></svg>
<svg class="abs" style="left:27px;top:238.5px" width="16" height="16" viewBox="0 0 16 16"><path d="M10.5 3 C15 5 15 12 9.5 13.8 C4 15 0.8 9.5 3 5.5" stroke="#2f5fa8" stroke-width="2" fill="none"/><path d="M1 7 L2.5 1.5 L6.5 5.5 Z" fill="#2f5fa8"/></svg>
<svg class="abs" style="left:27px;top:261px" width="16" height="16" viewBox="0 0 16 16"><rect x="1.5" y="1.5" width="13" height="13" fill="#c9d9ee" stroke="#1f4f9c" stroke-width="1"/><rect x="1.5" y="8" width="6.5" height="6.5" fill="#fff" stroke="#111" stroke-width="0.9" stroke-dasharray="1.2 1"/></svg>
<svg class="abs" style="left:27px;top:283px" width="16" height="16" viewBox="0 0 16 16"><path d="M2 2 V14.5 H14.5 L8.5 2 Z" fill="#c9d9ee" stroke="#1f4f9c" stroke-width="1"/><path d="M2 2 H6.5 V14.5" fill="none" stroke="#111" stroke-width="0.9" stroke-dasharray="1.2 1"/></svg>
<svg class="abs" style="left:27px;top:305px" width="16" height="16" viewBox="0 0 16 16"><path d="M1 8.5 H6.5" stroke="#1f4f9c" stroke-width="1.2"/><path d="M9.5 8.5 H15.5" stroke="#1f4f9c" stroke-width="1.1" stroke-dasharray="1.6 1.2"/><path d="M5.5 14 L10.5 2.5" stroke="#111" stroke-width="1.1"/></svg>
<svg class="abs" style="left:27px;top:327px" width="16" height="16" viewBox="0 0 16 16"><path d="M1 9 H9" stroke="#1f4f9c" stroke-width="1.1" stroke-dasharray="1.6 1.2"/><path d="M9 9 H11.5" stroke="#1f4f9c" stroke-width="1.2"/><path d="M10.5 14.5 L15 3" stroke="#111" stroke-width="1.1"/></svg>
<svg class="abs" style="left:27px;top:348.7px" width="16" height="16" viewBox="0 0 16 16"><path d="M1.5 3.5 H14.5 V13.5 H1.5 Z" fill="#dfe8f4" stroke="#111" stroke-width="1.2"/><rect x="9.5" y="2" width="3" height="3" fill="#1f5fd0"/></svg>
<svg class="abs" style="left:27px;top:370.5px" width="16" height="16" viewBox="0 0 16 16"><path d="M5 3.5 H1.5 V13.5 H14.5 V3.5 H11" fill="#dfe8f4" stroke="#111" stroke-width="1.2"/><rect x="3.5" y="2" width="3" height="3" fill="#1f5fd0"/><rect x="10" y="2" width="3" height="3" fill="#1f5fd0"/></svg>
<svg class="abs" style="left:27px;top:393px" width="16" height="16" viewBox="0 0 16 16"><path d="M0.5 8 H15.5" stroke="#111" stroke-width="1.1"/><path d="M2 5 L7 8 L2 11 Z M14 5 L9 8 L14 11 Z" fill="#111"/></svg>
<svg class="abs" style="left:27px;top:415px" width="16" height="16" viewBox="0 0 16 16"><path d="M1.5 15 V8 L8 1.5 H15" stroke="#1f4f9c" stroke-width="1.2" fill="none"/><path d="M1.5 8 V1.5 H8" stroke="#111" stroke-width="0.9" stroke-dasharray="1.2 1" fill="none"/></svg>
<svg class="abs" style="left:27px;top:437px" width="16" height="16" viewBox="0 0 16 16"><path d="M1.5 15 V10 C1.5 4 5 1.5 11 1.5 H15" stroke="#1f4f9c" stroke-width="1.2" fill="none"/><path d="M1.5 8 V1.5 H8" stroke="#111" stroke-width="0.9" stroke-dasharray="1.2 1" fill="none"/></svg>
<svg class="abs" style="left:27px;top:459px" width="16" height="16" viewBox="0 0 16 16"><path d="M2 14 L6 9 M3 8 L6 10 L4 13 Z" stroke="#c22" stroke-width="1.4" fill="#e33"/><path d="M7 8 L14 1 M8 9 L15 5 M9 6 L10 1" stroke="#e8a21a" stroke-width="1.3"/><circle cx="6" cy="9.5" r="2.5" fill="#e33"/><path d="M11 9 l3 3 M12 6 l3 1" stroke="#888" stroke-width="0.9"/></svg>
<div class="abs" style="left:24px;top:483px;width:24px;height:1px;background:#b9b9b9"></div>
<div class="abs" style="left:0px;top:525px;width:22px;height:1px;background:#b9b9b9"></div>
<div class="abs" style="left:1890px;top:94px;width:20px;height:812px;background:#fcfcfc"></div>
<div class="abs" style="left:1895px;top:97px;width:15px;height:1px;background:#b4b4b4"></div>
<div class="abs" style="left:1895px;top:101px;width:15px;height:1px;background:#b4b4b4"></div>
<svg class="abs" style="left:1896px;top:107px" width="16" height="16" viewBox="0 0 16 16"><rect x="0.5" y="0.5" width="8" height="6" fill="#fff" stroke="#5b82b8"/><rect x="8" y="8" width="8" height="6" fill="#dfe8f4" stroke="#5b82b8"/><rect x="3.5" y="3.5" width="9" height="8" fill="#5b86c0" stroke="#2f5fa8"/></svg>
<svg class="abs" style="left:1896px;top:129px" width="16" height="16" viewBox="0 0 16 16"><rect x="3.5" y="3.5" width="9" height="8" fill="#5b86c0" stroke="#2f5fa8"/><rect x="0.5" y="0.5" width="8" height="6" fill="#e9eef6" stroke="#5b82b8"/><rect x="8" y="8" width="8" height="6" fill="#dfe8f4" stroke="#5b82b8"/></svg>
<svg class="abs" style="left:1896px;top:151px" width="16" height="16" viewBox="0 0 16 16"><rect x="4.5" y="5.5" width="11" height="8" fill="#dfe8f4" stroke="#5b82b8"/><rect x="1.5" y="1.5" width="11" height="9" fill="#5b86c0" stroke="#1f4f9c"/></svg>
<svg class="abs" style="left:1896px;top:173px" width="16" height="16" viewBox="0 0 16 16"><rect x="1.5" y="1.5" width="11" height="9" fill="#5b86c0" stroke="#1f4f9c"/><rect x="4.5" y="5.5" width="11" height="8" fill="#dfe8f4" stroke="#5b82b8"/></svg>
<div class="abs" style="left:1893px;top:198px;width:17px;height:1px;background:#b9b9b9"></div>
<div class="abs" style="left:48px;top:93px;width:1842px;height:813px;background:#acaaac;"></div>
<div class="abs" style="left:48px;top:93px;width:1842px;height:2px;background:#6e6e6e"></div>
<div class="abs" style="left:48px;top:93px;width:2px;height:813px;background:#8a8a8a"></div>
<div class="abs" style="left:1889px;top:95px;width:1px;height:826px;background:#f3eef3"></div>
<div class="abs" style="left:50px;top:905px;width:1839px;height:16px;background:#fcfcfc"></div>
<div class="abs" style="left:50px;top:905px;width:1839px;height:1px;background:#000"></div>
<div class="abs" style="left:50px;top:905px;width:1px;height:16px;background:#777"></div>
<div class="abs" style="left:50px;top:920px;width:1839px;height:1px;background:#e6dce6"></div>
<svg class="abs" style="left:51px;top:906px" width="180" height="15" viewBox="0 0 180 15"><path d="M18.5 0 V14 M37.5 0 V14 M55.500 0 V14 M73.500 0 V14" stroke="#bdbdbd" stroke-width="1"/><path d="M5.500 3 V11" stroke="#000" stroke-width="1.3"/><path d="M11 3 V11 L6.5 7 Z" fill="#000"/><path d="M30 3 V11 L25.500 7 Z" fill="#000"/><path d="M43 3 V11 L47.500 7 Z" fill="#000"/><path d="M61 3 V11 L65.500 7 Z" fill="#000"/><path d="M67 3 V11" stroke="#000" stroke-width="1.3"/><path d="M76 0.5 L80 13.500 H110 L113.500 0.5" fill="#f4f4f4" stroke="#000" stroke-width="1"/><path d="M112.500 -1 L117 13.500 H158.500 L162.500 0.5 L162.500 -1 Z" fill="#fff" stroke="#000" stroke-width="1"/><rect x="113.500" y="-2" width="48.500" height="2.500" fill="#fff"/><text x="83.500" y="11.500" font-family="Noto Serif CJK SC, serif" font-size="12.500" fill="#000">模型</text><text x="119" y="11.500" font-family="Noto Serif CJK SC, serif" font-size="12.500" fill="#000">平纵图</text></svg>
<div class="abs" style="left:0px;top:926px;width:1910px;height:2px;background:#7a7a7a"></div>
<div class="abs" style="left:0px;top:928px;width:1910px;height:1px;background:#e3e3e3"></div>
<div class="abs" style="left:4px;top:937px;width:1px;height:73px;background:#a9a9a9"></div>
<div class="abs" style="left:8px;top:937px;width:1px;height:73px;background:#a9a9a9"></div>
<div class="abs" style="left:2px;top:1009px;width:8px;height:1px;background:#a9a9a9"></div>
<div class="abs" style="left:13px;top:937px;width:1897px;height:72px;background:#fff;border-left:2px solid #6a6a6a;border-top:2px solid #6a6a6a;box-sizing:border-box"></div>
<div class="abs" style="left:15px;top:989px;width:1895px;height:1px;background:#8a8a8a"></div>
<div class="abs" style="left:0px;top:1010px;width:1910px;height:1px;background:#cfcfcf"></div>
<div class="cmd" style="top:937px"><b>命令</b>:</div>
<div class="cmd" style="top:953px"><b>命令</b>: _yczj ; <b>错误</b>: *error* <b>函数中出错</b>AutoCAD <b>变量设置被拒绝</b>: "osmode" nil</div>
<div class="cmd" style="top:969px"><b>命令</b>:</div>
<div class="cmd" style="top:989px"><b>命令</b>:</div>
<svg class="abs" style="left:1820px;top:938px" width="90" height="72" viewBox="0 0 90 72"><rect x="70" y="0" width="20" height="50" fill="#fdfdfd"/><path d="M77 12 L80.500 8 L84 12" fill="none" stroke="#555" stroke-width="1.6"/><path d="M77 41 L80.500 45 L84 41" fill="none" stroke="#555" stroke-width="1.6"/><rect x="3" y="52" width="69" height="18" fill="#fdfdfd"/><path d="M17 56.500 L13 60.500 L17 64.500" fill="none" stroke="#555" stroke-width="1.6"/><path d="M60 56.500 L64 60.500 L60 64.500" fill="none" stroke="#555" stroke-width="1.6"/><rect x="22" y="53" width="17" height="16" fill="#cdcdcd"/></svg>
<div class="abs" style="left:0;top:1011px;width:1910px;height:19px;background:#fcfcfc"></div>
<div class="abs" style="left:2px;top:1015px;width:236px;height:15px;border:1px solid #a0a0a0;border-bottom:none;box-sizing:border-box;background:#fff"></div>
<div class="abs" style="left:5px;top:1018px;font-family:'Liberation Mono',monospace;font-size:10px;color:#9a9a9a;white-space:pre;line-height:14px">50536.6707, 50486.2704, 0.0000</div>
<div class="sb sbn" style="left:245px;width:27px;text-align:center;">捕捉</div>
<div class="sb sbn" style="left:277px;width:27px;text-align:center;">栅格</div>
<div class="sb sbn" style="left:309px;width:26px;text-align:center;">正交</div>
<div class="sb sbp" style="left:339px;width:29px;text-align:center;">极轴</div>
<div class="sb sbp" style="left:371px;width:54px;text-align:center;">对象捕捉</div>
<div class="sb sbn" style="left:427px;width:52px;text-align:center;">对象追踪</div>
<div class="sb sbn" style="left:482px;width:29px;text-align:center;font-family:'Liberation Mono',monospace;font-size:11px;letter-spacing:-0.6px;">DUCS</div>
<div class="sb sbn" style="left:514px;width:24px;text-align:center;font-family:'Liberation Mono',monospace;font-size:11px;letter-spacing:-0.6px;">DYN</div>
<div class="sb sbn" style="left:542px;width:28px;text-align:center;">线宽</div>
<div class="sb sbp" style="left:573px;width:30px;text-align:center;">图纸</div>
<svg class="abs" style="left:626px;top:1015px" width="56" height="15" viewBox="0 0 56 15"><path d="M0.500 0 V15 M11.500 0 V15 M43.500 0 V15 M54.500 0 V15" stroke="#c4c4c4"/><path d="M7.500 4.500 L4.500 7.500 L7.500 10.500 Z" fill="#b0b0b0"/><path d="M47.500 4.500 L50.500 7.500 L47.500 10.500 Z" fill="#b0b0b0"/></svg>
<svg class="abs" style="left:645px;top:1015.5px" width="16" height="16" viewBox="0 0 16 16"><rect x="1.5" y="2.5" width="14" height="13" fill="#fff" stroke="#2f5fa8" stroke-width="1.2"/><rect x="4.5" y="6.5" width="8" height="7" fill="#9fb6d6" stroke="#2f5fa8" stroke-width="1"/><path d="M0.5 0.5 H16" stroke="#d33" stroke-width="1" stroke-dasharray="1.5 1"/><path d="M0.5 0.5 V16" stroke="#d33" stroke-width="1" stroke-dasharray="1.5 1"/></svg>
<div class="abs" style="left:1811px;top:1014px;width:64px;height:16px;border-left:1px solid #9a9a9a;border-top:1px solid #9a9a9a;box-sizing:border-box"></div>
<svg class="abs" style="left:1815.5px;top:1016.5px" width="15" height="15" viewBox="0 0 16 16"><circle cx="6" cy="6" r="4.5" fill="#9fb6d6" stroke="#51679a" stroke-width="0.9"/><path d="M3 3 L10 9 M6 11 V15 M3 15 H10" stroke="#51679a" stroke-width="1.1"/><path d="M9 2 L13 0.5" stroke="#888" stroke-width="1"/></svg>
<svg class="abs" style="left:1836.5px;top:1016.5px" width="15" height="15" viewBox="0 0 16 16"><path d="M4 8 V5 C4 1 11 1 11 5" fill="none" stroke="#c9a81a" stroke-width="2"/><rect x="1.5" y="7.5" width="10" height="8" rx="1" fill="#e6c93a" stroke="#8a7a0a" stroke-width="0.9"/><rect x="6" y="9.5" width="1.6" height="4" fill="#554"/></svg>
<svg class="abs" style="left:1855.5px;top:1015.5px" width="15" height="15" viewBox="0 0 16 16"><path d="M2 1 H9 L12 4 V15 H2 Z" fill="#3d6cb0" stroke="#1f4f9c" stroke-width="0.8"/><path d="M4 3 V8 M3 5 H6" stroke="#fff" stroke-width="1"/><circle cx="11.5" cy="11.5" r="4" fill="#2a9a3a"/><path d="M9.5 11.5 L11 13.2 L13.8 9.8" stroke="#fff" stroke-width="1.3" fill="none"/></svg>
<svg class="abs" style="left:1879px;top:1024px" width="10" height="6"><path d="M1 0.500 H9 L5 5 Z" fill="#111"/></svg>
<svg class="abs" style="left:1897px;top:1017px" width="16" height="16" viewBox="0 0 16 16"><rect x="0.5" y="2.5" width="15" height="12" fill="#c9d9ee" stroke="#2f5fa8" stroke-width="1.4"/><rect x="3.5" y="5.5" width="12" height="9" fill="#eef3fb" stroke="#7f9fd0" stroke-width="0.9"/></svg>
<svg class="abs" style="left:0;top:0" width="1910" height="1030" viewBox="0 0 1910 1030" shape-rendering="crispEdges" text-rendering="geometricPrecision">
<defs><pattern id="hx" width="3" height="3" patternUnits="userSpaceOnUse"><rect width="3" height="3" fill="#fff"/><path d="M0 0 L3 3 M3 0 L0 3" stroke="#ff00ff" stroke-width="1.100"/></pattern><pattern id="hk" width="3" height="3" patternUnits="userSpaceOnUse"><rect width="3" height="3" fill="#d00"/><path d="M0 3 L3 0" stroke="#000" stroke-width="1.100"/></pattern></defs>
<clipPath id="cv"><rect x="50" y="95" width="1839" height="810"/></clipPath><g clip-path="url(#cv)">
<path d="M74.5 792.0 L74.5 881.5 L129.0 881.5 Z" fill="none" stroke="#3c3cc8" stroke-width="1" />
<rect x="74.5" y="867.5" width="14" height="14" fill="none" stroke="#3c3cc8" stroke-width="1" />
<path d="M74.5 821.0 L81.0 828.0 L88.0 820.0" fill="none" stroke="#3c3cc8" stroke-width="1" />
<line x1="81.5" y1="828" x2="81.5" y2="833" stroke="#3c3cc8" stroke-width="1" />
<line x1="101" y1="867" x2="115" y2="881" stroke="#3c3cc8" stroke-width="1" />
<line x1="102" y1="881" x2="115" y2="868" stroke="#3c3cc8" stroke-width="1" />
<rect x="1412" y="137" width="6" height="769" fill="#000" stroke="none" stroke-width="1" />
<rect x="323" y="903" width="1095" height="3" fill="#000" stroke="none" stroke-width="1" />
<rect x="311" y="125" width="1101" height="778" fill="#fff" stroke="none" stroke-width="1" />
<rect x="311.5" y="125.5" width="1100" height="777" fill="none" stroke="#0000ff" stroke-width="1" />
<rect x="313.5" y="127.5" width="1096" height="773" fill="none" stroke="#0000ff" stroke-width="1" />
<rect x="312.5" y="126.5" width="1098" height="775" fill="none" stroke="#000" stroke-width="1" />
<rect x="312.5" y="126.5" width="1098" height="775" fill="none" stroke="#fff" stroke-width="1" stroke-dasharray="3 3"/>
<line x1="1411.5" y1="125" x2="1411.5" y2="903" stroke="#000" stroke-width="1" />
<rect x="345" y="139" width="1053" height="1" fill="#ff00ff" stroke="none" stroke-width="1" />
<line x1="345" y1="138.5" x2="1398" y2="138.5" stroke="#ff00ff" stroke-width="1" stroke-dasharray="1 3"/>
<rect x="345" y="888" width="1053" height="1" fill="#ff00ff" stroke="none" stroke-width="1" />
<line x1="345" y1="887.5" x2="1398" y2="887.5" stroke="#ff00ff" stroke-width="1" stroke-dasharray="1 3"/>
<rect x="345" y="139" width="1" height="750" fill="#ff00ff" stroke="none" stroke-width="1" />
<line x1="344.5" y1="139" x2="344.5" y2="889" stroke="#ff00ff" stroke-width="1" stroke-dasharray="1 3"/>
<rect x="1397" y="139" width="1" height="750" fill="#ff00ff" stroke="none" stroke-width="1" />
<line x1="1396.5" y1="139" x2="1396.5" y2="889" stroke="#ff00ff" stroke-width="1" stroke-dasharray="1 3"/>
<rect x="476" y="139" width="1" height="750" fill="#ff00ff" stroke="none" stroke-width="1" />
<line x1="477.5" y1="139" x2="477.5" y2="889" stroke="#ff00ff" stroke-width="1" stroke-dasharray="1 3"/>
<rect x="1176" y="139" width="1" height="750" fill="#ff00ff" stroke="none" stroke-width="1" />
<line x1="1177.5" y1="139" x2="1177.5" y2="889" stroke="#ff00ff" stroke-width="1" stroke-dasharray="1 3"/>
<rect x="508" y="413" width="3" height="476" fill="#ff00ff" stroke="none" stroke-width="1" />
<rect x="509" y="414" width="1" height="474" fill="#fff" stroke="none" stroke-width="1" />
<line x1="509.5" y1="414" x2="509.5" y2="888" stroke="#000" stroke-width="1" stroke-dasharray="3 3"/>
<rect x="1161" y="413" width="3" height="476" fill="#ff00ff" stroke="none" stroke-width="1" />
<rect x="1162" y="414" width="1" height="474" fill="#fff" stroke="none" stroke-width="1" />
<line x1="1162.5" y1="414" x2="1162.5" y2="888" stroke="#000" stroke-width="1" stroke-dasharray="3 3"/>
<rect x="352" y="712" width="3" height="177" fill="#ff00ff" stroke="none" stroke-width="1" />
<rect x="353" y="713" width="1" height="175" fill="#fff" stroke="none" stroke-width="1" />
<line x1="353.5" y1="713" x2="353.5" y2="888" stroke="#000" stroke-width="1" stroke-dasharray="3 3"/>
<rect x="345" y="412" width="832" height="3" fill="#ff00ff" stroke="none" stroke-width="1" />
<rect x="346" y="413" width="830" height="1" fill="#fff" stroke="none" stroke-width="1" />
<line x1="346" y1="413.5" x2="1176" y2="413.5" stroke="#000" stroke-width="1" stroke-dasharray="3 3"/>
<rect x="345" y="712" width="832" height="1" fill="#ff00ff" stroke="none" stroke-width="1" />
<line x1="345" y1="711.5" x2="1177" y2="711.5" stroke="#ff00ff" stroke-width="1" stroke-dasharray="1 3"/>
<rect x="345" y="737" width="832" height="3" fill="#ff00ff" stroke="none" stroke-width="1" />
<rect x="346" y="738" width="830" height="1" fill="#fff" stroke="none" stroke-width="1" />
<line x1="346" y1="738.5" x2="1176" y2="738.5" stroke="#000" stroke-width="1" stroke-dasharray="3 3"/>
<rect x="345" y="760" width="832" height="3" fill="#ff00ff" stroke="none" stroke-width="1" />
<rect x="346" y="761" width="830" height="1" fill="#fff" stroke="none" stroke-width="1" />
<line x1="346" y1="761.5" x2="1176" y2="761.5" stroke="#000" stroke-width="1" stroke-dasharray="3 3"/>
<rect x="345" y="777" width="832" height="3" fill="#ff00ff" stroke="none" stroke-width="1" />
<rect x="346" y="778" width="830" height="1" fill="#fff" stroke="none" stroke-width="1" />
<line x1="346" y1="778.5" x2="1176" y2="778.5" stroke="#000" stroke-width="1" stroke-dasharray="3 3"/>
<rect x="345" y="794" width="832" height="3" fill="#ff00ff" stroke="none" stroke-width="1" />
<rect x="346" y="795" width="830" height="1" fill="#fff" stroke="none" stroke-width="1" />
<line x1="346" y1="795.5" x2="1176" y2="795.5" stroke="#000" stroke-width="1" stroke-dasharray="3 3"/>
<rect x="345" y="807" width="832" height="3" fill="#ff00ff" stroke="none" stroke-width="1" />
<rect x="346" y="808" width="830" height="1" fill="#fff" stroke="none" stroke-width="1" />
<line x1="346" y1="808.5" x2="1176" y2="808.5" stroke="#000" stroke-width="1" stroke-dasharray="3 3"/>
<rect x="345" y="820" width="832" height="3" fill="#ff00ff" stroke="none" stroke-width="1" />
<rect x="346" y="821" width="830" height="1" fill="#fff" stroke="none" stroke-width="1" />
<line x1="346" y1="821.5" x2="1176" y2="821.5" stroke="#000" stroke-width="1" stroke-dasharray="3 3"/>
<rect x="345" y="832" width="832" height="3" fill="#ff00ff" stroke="none" stroke-width="1" />
<rect x="346" y="833" width="830" height="1" fill="#fff" stroke="none" stroke-width="1" />
<line x1="346" y1="833.5" x2="1176" y2="833.5" stroke="#000" stroke-width="1" stroke-dasharray="3 3"/>
<rect x="345" y="844" width="832" height="3" fill="#ff00ff" stroke="none" stroke-width="1" />
<rect x="346" y="845" width="830" height="1" fill="#fff" stroke="none" stroke-width="1" />
<line x1="346" y1="845.5" x2="1176" y2="845.5" stroke="#000" stroke-width="1" stroke-dasharray="3 3"/>
<rect x="345" y="855" width="832" height="3" fill="#ff00ff" stroke="none" stroke-width="1" />
<rect x="346" y="856" width="830" height="1" fill="#fff" stroke="none" stroke-width="1" />
<line x1="346" y1="856.5" x2="1176" y2="856.5" stroke="#000" stroke-width="1" stroke-dasharray="3 3"/>
<rect x="345" y="867" width="832" height="3" fill="#ff00ff" stroke="none" stroke-width="1" />
<rect x="346" y="868" width="830" height="1" fill="#fff" stroke="none" stroke-width="1" />
<line x1="346" y1="868.5" x2="1176" y2="868.5" stroke="#000" stroke-width="1" stroke-dasharray="3 3"/>
<line x1="510" y1="827.5" x2="1161" y2="827.5" stroke="#0000ff" stroke-width="1" />
<rect x="345" y="151" width="132" height="3" fill="#ff00ff" stroke="none" stroke-width="1" />
<rect x="346" y="152" width="130" height="1" fill="#fff" stroke="none" stroke-width="1" />
<line x1="346" y1="152.5" x2="476" y2="152.5" stroke="#000" stroke-width="1" stroke-dasharray="3 3"/>
<rect x="345" y="160" width="132" height="3" fill="#ff00ff" stroke="none" stroke-width="1" />
<rect x="346" y="161" width="130" height="1" fill="#fff" stroke="none" stroke-width="1" />
<line x1="346" y1="161.5" x2="476" y2="161.5" stroke="#000" stroke-width="1" stroke-dasharray="3 3"/>
<rect x="345" y="170" width="132" height="3" fill="#ff00ff" stroke="none" stroke-width="1" />
<rect x="346" y="171" width="130" height="1" fill="#fff" stroke="none" stroke-width="1" />
<line x1="346" y1="171.5" x2="476" y2="171.5" stroke="#000" stroke-width="1" stroke-dasharray="3 3"/>
<rect x="345" y="179" width="132" height="3" fill="#ff00ff" stroke="none" stroke-width="1" />
<rect x="346" y="180" width="130" height="1" fill="#fff" stroke="none" stroke-width="1" />
<line x1="346" y1="180.5" x2="476" y2="180.5" stroke="#000" stroke-width="1" stroke-dasharray="3 3"/>
<rect x="345" y="188" width="132" height="3" fill="#ff00ff" stroke="none" stroke-width="1" />
<rect x="346" y="189" width="130" height="1" fill="#fff" stroke="none" stroke-width="1" />
<line x1="346" y1="189.5" x2="476" y2="189.5" stroke="#000" stroke-width="1" stroke-dasharray="3 3"/>
<rect x="345" y="197" width="132" height="3" fill="#ff00ff" stroke="none" stroke-width="1" />
<rect x="346" y="198" width="130" height="1" fill="#fff" stroke="none" stroke-width="1" />
<line x1="346" y1="198.5" x2="476" y2="198.5" stroke="#000" stroke-width="1" stroke-dasharray="3 3"/>
<rect x="345" y="207" width="132" height="3" fill="#ff00ff" stroke="none" stroke-width="1" />
<rect x="346" y="208" width="130" height="1" fill="#fff" stroke="none" stroke-width="1" />
<line x1="346" y1="208.5" x2="476" y2="208.5" stroke="#000" stroke-width="1" stroke-dasharray="3 3"/>
<rect x="345" y="216" width="132" height="3" fill="#ff00ff" stroke="none" stroke-width="1" />
<rect x="346" y="217" width="130" height="1" fill="#fff" stroke="none" stroke-width="1" />
<line x1="346" y1="217.5" x2="476" y2="217.5" stroke="#000" stroke-width="1" stroke-dasharray="3 3"/>
<rect x="345" y="225" width="132" height="3" fill="#ff00ff" stroke="none" stroke-width="1" />
<rect x="346" y="226" width="130" height="1" fill="#fff" stroke="none" stroke-width="1" />
<line x1="346" y1="226.5" x2="476" y2="226.5" stroke="#000" stroke-width="1" stroke-dasharray="3 3"/>
<rect x="345" y="234" width="132" height="3" fill="#ff00ff" stroke="none" stroke-width="1" />
<rect x="346" y="235" width="130" height="1" fill="#fff" stroke="none" stroke-width="1" />
<line x1="346" y1="235.5" x2="476" y2="235.5" stroke="#000" stroke-width="1" stroke-dasharray="3 3"/>
<rect x="345" y="243" width="132" height="3" fill="#ff00ff" stroke="none" stroke-width="1" />
<rect x="346" y="244" width="130" height="1" fill="#fff" stroke="none" stroke-width="1" />
<line x1="346" y1="244.5" x2="476" y2="244.5" stroke="#000" stroke-width="1" stroke-dasharray="3 3"/>
<rect x="345" y="253" width="132" height="3" fill="#ff00ff" stroke="none" stroke-width="1" />
<rect x="346" y="254" width="130" height="1" fill="#fff" stroke="none" stroke-width="1" />
<line x1="346" y1="254.5" x2="476" y2="254.5" stroke="#000" stroke-width="1" stroke-dasharray="3 3"/>
<rect x="345" y="262" width="132" height="3" fill="#ff00ff" stroke="none" stroke-width="1" />
<rect x="346" y="263" width="130" height="1" fill="#fff" stroke="none" stroke-width="1" />
<line x1="346" y1="263.5" x2="476" y2="263.5" stroke="#000" stroke-width="1" stroke-dasharray="3 3"/>
<rect x="345" y="271" width="132" height="3" fill="#ff00ff" stroke="none" stroke-width="1" />
<rect x="346" y="272" width="130" height="1" fill="#fff" stroke="none" stroke-width="1" />
<line x1="346" y1="272.5" x2="476" y2="272.5" stroke="#000" stroke-width="1" stroke-dasharray="3 3"/>
<rect x="370" y="161" width="3" height="112" fill="#ff00ff" stroke="none" stroke-width="1" />
<rect x="371" y="162" width="1" height="110" fill="#fff" stroke="none" stroke-width="1" />
<line x1="371.5" y1="162" x2="371.5" y2="272" stroke="#000" stroke-width="1" stroke-dasharray="3 3"/>
<rect x="396" y="161" width="3" height="112" fill="#ff00ff" stroke="none" stroke-width="1" />
<rect x="397" y="162" width="1" height="110" fill="#fff" stroke="none" stroke-width="1" />
<line x1="397.5" y1="162" x2="397.5" y2="272" stroke="#000" stroke-width="1" stroke-dasharray="3 3"/>
<rect x="422" y="161" width="3" height="112" fill="#ff00ff" stroke="none" stroke-width="1" />
<rect x="423" y="162" width="1" height="110" fill="#fff" stroke="none" stroke-width="1" />
<line x1="423.5" y1="162" x2="423.5" y2="272" stroke="#000" stroke-width="1" stroke-dasharray="3 3"/>
<rect x="448" y="161" width="3" height="112" fill="#ff00ff" stroke="none" stroke-width="1" />
<rect x="449" y="162" width="1" height="110" fill="#fff" stroke="none" stroke-width="1" />
<line x1="449.5" y1="162" x2="449.5" y2="272" stroke="#000" stroke-width="1" stroke-dasharray="3 3"/>
<rect x="395" y="154" width="31" height="5" fill="url(#hx)" stroke="none" stroke-width="1" />
<rect x="350" y="164" width="17" height="4" fill="url(#hx)" stroke="none" stroke-width="1" />
<rect x="376" y="164" width="17" height="4" fill="url(#hx)" stroke="none" stroke-width="1" />
<rect x="402" y="164" width="17" height="4" fill="url(#hx)" stroke="none" stroke-width="1" />
<rect x="428" y="164" width="17" height="4" fill="url(#hx)" stroke="none" stroke-width="1" />
<rect x="454" y="164" width="18" height="4" fill="url(#hx)" stroke="none" stroke-width="1" />
<text x="358.5" y="178.5" font-family="Liberation Sans, sans-serif" font-size="6.2" fill="#ff00ff" stroke="#ff00ff"  text-anchor="middle" font-weight="bold" stroke-width="0.6" textLength="19" lengthAdjust="spacingAndGlyphs">ZH01</text>
<text x="384.5" y="178.5" font-family="Liberation Sans, sans-serif" font-size="6.2" fill="#ff00ff" stroke="#ff00ff"  text-anchor="middle" font-weight="bold" stroke-width="0.6" textLength="19" lengthAdjust="spacingAndGlyphs">K0+000</text>
<text x="410.5" y="178.5" font-family="Liberation Sans, sans-serif" font-size="6.2" fill="#ff00ff" stroke="#ff00ff"  text-anchor="middle" font-weight="bold" stroke-width="0.6" textLength="19" lengthAdjust="spacingAndGlyphs">12°30′</text>
<text x="436.5" y="178.5" font-family="Liberation Sans, sans-serif" font-size="6.2" fill="#ff00ff" stroke="#ff00ff"  text-anchor="middle" font-weight="bold" stroke-width="0.6" textLength="19" lengthAdjust="spacingAndGlyphs">1042.51</text>
<text x="463" y="178.5" font-family="Liberation Sans, sans-serif" font-size="6.2" fill="#ff00ff" stroke="#ff00ff"  text-anchor="middle" font-weight="bold" stroke-width="0.6" textLength="20" lengthAdjust="spacingAndGlyphs">1.20</text>
<text x="358.5" y="187.5" font-family="Liberation Sans, sans-serif" font-size="6.2" fill="#ff00ff" stroke="#ff00ff"  text-anchor="middle" font-weight="bold" stroke-width="0.6" textLength="19" lengthAdjust="spacingAndGlyphs">ZH02</text>
<text x="384.5" y="187.5" font-family="Liberation Sans, sans-serif" font-size="6.2" fill="#ff00ff" stroke="#ff00ff"  text-anchor="middle" font-weight="bold" stroke-width="0.6" textLength="19" lengthAdjust="spacingAndGlyphs">K0+118</text>
<text x="410.5" y="187.5" font-family="Liberation Sans, sans-serif" font-size="6.2" fill="#ff00ff" stroke="#ff00ff"  text-anchor="middle" font-weight="bold" stroke-width="0.6" textLength="19" lengthAdjust="spacingAndGlyphs">35°12′</text>
<text x="436.5" y="187.5" font-family="Liberation Sans, sans-serif" font-size="6.2" fill="#ff00ff" stroke="#ff00ff"  text-anchor="middle" font-weight="bold" stroke-width="0.6" textLength="19" lengthAdjust="spacingAndGlyphs">1031.20</text>
<text x="463" y="187.5" font-family="Liberation Sans, sans-serif" font-size="6.2" fill="#ff00ff" stroke="#ff00ff"  text-anchor="middle" font-weight="bold" stroke-width="0.6" textLength="20" lengthAdjust="spacingAndGlyphs">1.25</text>
<text x="358.5" y="196.5" font-family="Liberation Sans, sans-serif" font-size="6.2" fill="#ff00ff" stroke="#ff00ff"  text-anchor="middle" font-weight="bold" stroke-width="0.6" textLength="19" lengthAdjust="spacingAndGlyphs">ZH03</text>
<text x="384.5" y="196.5" font-family="Liberation Sans, sans-serif" font-size="6.2" fill="#ff00ff" stroke="#ff00ff"  text-anchor="middle" font-weight="bold" stroke-width="0.6" textLength="19" lengthAdjust="spacingAndGlyphs">K0+342</text>
<text x="410.5" y="196.5" font-family="Liberation Sans, sans-serif" font-size="6.2" fill="#ff00ff" stroke="#ff00ff"  text-anchor="middle" font-weight="bold" stroke-width="0.6" textLength="19" lengthAdjust="spacingAndGlyphs">18°05′</text>
<text x="436.5" y="196.5" font-family="Liberation Sans, sans-serif" font-size="6.2" fill="#ff00ff" stroke="#ff00ff"  text-anchor="middle" font-weight="bold" stroke-width="0.6" textLength="19" lengthAdjust="spacingAndGlyphs">1012.64</text>
<text x="463" y="196.5" font-family="Liberation Sans, sans-serif" font-size="6.2" fill="#ff00ff" stroke="#ff00ff"  text-anchor="middle" font-weight="bold" stroke-width="0.6" textLength="20" lengthAdjust="spacingAndGlyphs">1.20</text>
<text x="358.5" y="205.5" font-family="Liberation Sans, sans-serif" font-size="6.2" fill="#ff00ff" stroke="#ff00ff"  text-anchor="middle" font-weight="bold" stroke-width="0.6" textLength="19" lengthAdjust="spacingAndGlyphs">ZH04</text>
<text x="384.5" y="205.5" font-family="Liberation Sans, sans-serif" font-size="6.2" fill="#ff00ff" stroke="#ff00ff"  text-anchor="middle" font-weight="bold" stroke-width="0.6" textLength="19" lengthAdjust="spacingAndGlyphs">K0+705</text>
<text x="410.5" y="205.5" font-family="Liberation Sans, sans-serif" font-size="6.2" fill="#ff00ff" stroke="#ff00ff"  text-anchor="middle" font-weight="bold" stroke-width="0.6" textLength="19" lengthAdjust="spacingAndGlyphs">22°41′</text>
<text x="436.5" y="205.5" font-family="Liberation Sans, sans-serif" font-size="6.2" fill="#ff00ff" stroke="#ff00ff"  text-anchor="middle" font-weight="bold" stroke-width="0.6" textLength="19" lengthAdjust="spacingAndGlyphs">1009.92</text>
<text x="463" y="205.5" font-family="Liberation Sans, sans-serif" font-size="6.2" fill="#ff00ff" stroke="#ff00ff"  text-anchor="middle" font-weight="bold" stroke-width="0.6" textLength="20" lengthAdjust="spacingAndGlyphs">1.30</text>
<text x="358.5" y="215.5" font-family="Liberation Sans, sans-serif" font-size="6.2" fill="#ff00ff" stroke="#ff00ff"  text-anchor="middle" font-weight="bold" stroke-width="0.6" textLength="19" lengthAdjust="spacingAndGlyphs">ZH05</text>
<text x="384.5" y="215.5" font-family="Liberation Sans, sans-serif" font-size="6.2" fill="#ff00ff" stroke="#ff00ff"  text-anchor="middle" font-weight="bold" stroke-width="0.6" textLength="19" lengthAdjust="spacingAndGlyphs">K1+214</text>
<text x="410.5" y="215.5" font-family="Liberation Sans, sans-serif" font-size="6.2" fill="#ff00ff" stroke="#ff00ff"  text-anchor="middle" font-weight="bold" stroke-width="0.6" textLength="19" lengthAdjust="spacingAndGlyphs">41°17′</text>
<text x="436.5" y="215.5" font-family="Liberation Sans, sans-serif" font-size="6.2" fill="#ff00ff" stroke="#ff00ff"  text-anchor="middle" font-weight="bold" stroke-width="0.6" textLength="19" lengthAdjust="spacingAndGlyphs">1015.33</text>
<text x="463" y="215.5" font-family="Liberation Sans, sans-serif" font-size="6.2" fill="#ff00ff" stroke="#ff00ff"  text-anchor="middle" font-weight="bold" stroke-width="0.6" textLength="20" lengthAdjust="spacingAndGlyphs">1.20</text>
<rect x="351" y="220" width="15" height="4" fill="#ff00ff" stroke="none" stroke-width="1" />
<rect x="377" y="220" width="15" height="4" fill="#ff00ff" stroke="none" stroke-width="1" />
<rect x="403" y="220" width="15" height="4" fill="#ff00ff" stroke="none" stroke-width="1" />
<rect x="429" y="220" width="15" height="4" fill="#ff00ff" stroke="none" stroke-width="1" />
<rect x="455" y="220" width="16" height="4" fill="#ff00ff" stroke="none" stroke-width="1" />
<rect x="318" y="139" width="3" height="48" fill="#ff00ff" stroke="none" stroke-width="1" />
<rect x="319" y="140" width="1" height="46" fill="#fff" stroke="none" stroke-width="1" />
<line x1="319.5" y1="140" x2="319.5" y2="186" stroke="#000" stroke-width="1" stroke-dasharray="3 3"/>
<rect x="324" y="139" width="3" height="48" fill="#ff00ff" stroke="none" stroke-width="1" />
<rect x="325" y="140" width="1" height="46" fill="#fff" stroke="none" stroke-width="1" />
<line x1="325.5" y1="140" x2="325.5" y2="186" stroke="#000" stroke-width="1" stroke-dasharray="3 3"/>
<rect x="331" y="139" width="3" height="48" fill="#ff00ff" stroke="none" stroke-width="1" />
<rect x="332" y="140" width="1" height="46" fill="#fff" stroke="none" stroke-width="1" />
<line x1="332.5" y1="140" x2="332.5" y2="186" stroke="#000" stroke-width="1" stroke-dasharray="3 3"/>
<rect x="337" y="139" width="3" height="48" fill="#ff00ff" stroke="none" stroke-width="1" />
<rect x="338" y="140" width="1" height="46" fill="#fff" stroke="none" stroke-width="1" />
<line x1="338.5" y1="140" x2="338.5" y2="186" stroke="#000" stroke-width="1" stroke-dasharray="3 3"/>
<rect x="314" y="164" width="30" height="3" fill="#ff00ff" stroke="none" stroke-width="1" />
<line x1="314" y1="165.5" x2="344" y2="165.5" stroke="#000" stroke-width="1" stroke-dasharray="3 2"/>
<rect x="315" y="168" width="28" height="13" fill="url(#hx)" stroke="none" stroke-width="1" />
<rect x="314" y="186" width="31" height="1" fill="#ff00ff" stroke="none" stroke-width="1" />
<line x1="314" y1="185.5" x2="345" y2="185.5" stroke="#ff00ff" stroke-width="1" stroke-dasharray="1 3"/>
<text x="406" y="285" font-family="Noto Sans CJK SC, sans-serif" font-size="8.6" fill="#ff00ff" stroke="#ff00ff" stroke-width="0.35" text-anchor="middle" font-weight="bold" textLength="95" lengthAdjust="spacingAndGlyphs">线路带状图图例　1:2000</text>
<text x="408" y="295.5" font-family="Noto Sans CJK SC, sans-serif" font-size="7" fill="#ffe800" stroke="#ffe800" stroke-width="0.35" text-anchor="middle" font-weight="bold" textLength="42" lengthAdjust="spacingAndGlyphs">说明:地物图例</text>
<text x="356" y="305.1" font-family="Noto Sans CJK SC, sans-serif" font-size="6.3" fill="#000000" stroke="#000000"  text-anchor="start" font-weight="bold" stroke-width="0.5">房屋</text>
<text x="421" y="305.1" font-family="Noto Sans CJK SC, sans-serif" font-size="6.3" fill="#000000" stroke="#000000"  text-anchor="start" font-weight="bold" stroke-width="0.5">桥梁</text>
<text x="356" y="318.15" font-family="Noto Sans CJK SC, sans-serif" font-size="6.3" fill="#000000" stroke="#000000"  text-anchor="start" font-weight="bold" stroke-width="0.5">公路 机耕道</text>
<text x="421" y="318.15" font-family="Noto Sans CJK SC, sans-serif" font-size="6.3" fill="#000000" stroke="#000000"  text-anchor="start" font-weight="bold" stroke-width="0.5">涵洞</text>
<text x="356" y="331.2" font-family="Noto Sans CJK SC, sans-serif" font-size="6.3" fill="#000000" stroke="#000000"  text-anchor="start" font-weight="bold" stroke-width="0.5">铁路 乡村路</text>
<text x="421" y="331.2" font-family="Noto Sans CJK SC, sans-serif" font-size="6.3" fill="#000000" stroke="#000000"  text-anchor="start" font-weight="bold" stroke-width="0.5">陡坎</text>
<text x="356" y="344.25" font-family="Noto Sans CJK SC, sans-serif" font-size="6.3" fill="#000000" stroke="#000000"  text-anchor="start" font-weight="bold" stroke-width="0.5">高压线</text>
<text x="421" y="344.25" font-family="Noto Sans CJK SC, sans-serif" font-size="6.3" fill="#000000" stroke="#000000"  text-anchor="start" font-weight="bold" stroke-width="0.5">地类界</text>
<text x="356" y="357.3" font-family="Noto Sans CJK SC, sans-serif" font-size="6.3" fill="#000000" stroke="#000000"  text-anchor="start" font-weight="bold" stroke-width="0.5">通讯线</text>
<text x="421" y="357.3" font-family="Noto Sans CJK SC, sans-serif" font-size="6.3" fill="#000000" stroke="#000000"  text-anchor="start" font-weight="bold" stroke-width="0.5">管道 阀</text>
<text x="356" y="370.35" font-family="Noto Sans CJK SC, sans-serif" font-size="6.3" fill="#000000" stroke="#000000"  text-anchor="start" font-weight="bold" stroke-width="0.5">河流 沟渠 水塘</text>
<text x="421" y="370.35" font-family="Noto Sans CJK SC, sans-serif" font-size="6.3" fill="#000000" stroke="#000000"  text-anchor="start" font-weight="bold" stroke-width="0.5">光缆</text>
<text x="356" y="383.4" font-family="Noto Sans CJK SC, sans-serif" font-size="6.3" fill="#000000" stroke="#000000"  text-anchor="start" font-weight="bold" stroke-width="0.5">井 泉眼</text>
<text x="421" y="383.4" font-family="Noto Sans CJK SC, sans-serif" font-size="6.3" fill="#000000" stroke="#000000"  text-anchor="start" font-weight="bold" stroke-width="0.5">旱地 水田 菜地</text>
<text x="356" y="396.45" font-family="Noto Sans CJK SC, sans-serif" font-size="6.3" fill="#000000" stroke="#000000"  text-anchor="start" font-weight="bold" stroke-width="0.5">果园 林地</text>
<text x="421" y="396.45" font-family="Noto Sans CJK SC, sans-serif" font-size="6.3" fill="#000000" stroke="#000000"  text-anchor="start" font-weight="bold" stroke-width="0.5">穿越</text>
<text x="356" y="409.5" font-family="Noto Sans CJK SC, sans-serif" font-size="6.3" fill="#000000" stroke="#000000"  text-anchor="start" font-weight="bold" stroke-width="0.5">坟地</text>
<text x="421" y="409.5" font-family="Noto Sans CJK SC, sans-serif" font-size="6.3" fill="#000000" stroke="#000000"  text-anchor="start" font-weight="bold" stroke-width="0.5">标志桩</text>
<circle cx="396" cy="302.5" r="0.9" fill="#ff00ff"/>
<rect x="389" y="311.55" width="17" height="3.4" fill="#0000ff" stroke="none" stroke-width="1" />
<line x1="391" y1="313.25" x2="404" y2="313.25" stroke="#fff" stroke-width="1" stroke-dasharray="3 2"/>
<circle cx="389" cy="310.55" r="1.6" fill="#fff" stroke="#000" stroke-width="0.8"/>
<rect x="389" y="324.6" width="17" height="3.4" fill="#0000ff" stroke="none" stroke-width="1" />
<line x1="391" y1="326.3" x2="404" y2="326.3" stroke="#fff" stroke-width="1" stroke-dasharray="3 2"/>
<circle cx="389" cy="323.6" r="1.6" fill="#fff" stroke="#000" stroke-width="0.8"/>
<rect x="389" y="340.05" width="16" height="3.2" fill="#00ffff" stroke="none" stroke-width="1" />
<line x1="392" y1="341.65" x2="402" y2="341.65" stroke="#000" stroke-width="1" stroke-dasharray="2 2"/>
<rect x="389" y="353.1" width="16" height="3.2" fill="#00ffff" stroke="none" stroke-width="1" />
<line x1="392" y1="354.7" x2="402" y2="354.7" stroke="#000" stroke-width="1" stroke-dasharray="2 2"/>
<rect x="388" y="362.75" width="17" height="8" fill="#ff0000" stroke="none" stroke-width="1" />
<line x1="390" y1="365.75" x2="403" y2="365.75" stroke="#fff" stroke-width="1" stroke-dasharray="2 2"/>
<rect x="388" y="376.8" width="3" height="6" fill="#0000ff" stroke="none" stroke-width="1" />
<rect x="393" y="376.8" width="5" height="7" fill="#fff" stroke="#000000" stroke-width="1" />
<circle cx="392" cy="393.85" r="2" fill="#00ff00"/>
<rect x="400" y="389.85" width="3" height="7" fill="#00ff00" stroke="none" stroke-width="1" />
<line x1="394" y1="406.9" x2="406" y2="406.9" stroke="#000000" stroke-width="1" stroke-dasharray="1.5 3"/>
<rect x="451" y="300.5" width="16" height="4" fill="#ff00ff" stroke="none" stroke-width="1" rx="2"/>
<line x1="454" y1="302.5" x2="464" y2="302.5" stroke="#000000" stroke-width="1" stroke-dasharray="3 2"/>
<rect x="451" y="314.05" width="16" height="4" fill="#0000ff" stroke="none" stroke-width="1" rx="2"/>
<line x1="454" y1="316.05" x2="464" y2="316.05" stroke="#fff" stroke-width="1" stroke-dasharray="3 2"/>
<rect x="451" y="326.6" width="16" height="4" fill="#00ffff" stroke="none" stroke-width="1" rx="2"/>
<line x1="454" y1="328.6" x2="464" y2="328.6" stroke="#000000" stroke-width="1" stroke-dasharray="3 2"/>
<rect x="451" y="338.65" width="16" height="4" fill="#00ffff" stroke="none" stroke-width="1" rx="2"/>
<line x1="454" y1="340.65" x2="464" y2="340.65" stroke="#000000" stroke-width="1" stroke-dasharray="3 2"/>
<rect x="451" y="347.7" width="16" height="5" fill="#0000ff" stroke="none" stroke-width="1" />
<path d="M451.0 345.7 L467.0 355.7" fill="none" stroke="#ff0000" stroke-width="1.5" />
<path d="M451.0 355.7 L467.0 345.7" fill="none" stroke="#ff0000" stroke-width="1.5" />
<rect x="456" y="351.7" width="5" height="4" fill="#0000ff" stroke="none" stroke-width="1" />
<line x1="452" y1="365.75" x2="468" y2="365.75" stroke="#ff00ff" stroke-width="1.6" />
<circle cx="453" cy="377.8" r="2.3" fill="none" stroke="#00ff00" stroke-width="1.3"/>
<circle cx="460" cy="377.8" r="2.3" fill="none" stroke="#00ff00" stroke-width="1.3"/>
<circle cx="467" cy="377.8" r="2.3" fill="none" stroke="#00ff00" stroke-width="1.3"/>
<rect x="452" y="390.85" width="16" height="5" fill="none" stroke="#ff0000" stroke-width="1.6" rx="2.500"/>
<line x1="455" y1="393.35" x2="465" y2="393.35" stroke="#ff0000" stroke-width="1.4" />
<rect x="452" y="400.9" width="17" height="11" fill="#d00" stroke="#ff0000" stroke-width="1" />
<rect x="455" y="402.9" width="11" height="7" fill="url(#hk)" stroke="none" stroke-width="1" />
<text x="359" y="448" font-family="Noto Sans CJK SC, sans-serif" font-size="6.5" fill="#ff00ff" stroke="#ff00ff" stroke-width="0.35" text-anchor="start" font-weight="bold" textLength="31" lengthAdjust="spacingAndGlyphs">线路走向:</text>
<rect x="351" y="450" width="120" height="3" fill="#ff00ff" stroke="none" stroke-width="1" />
<rect x="352" y="451" width="118" height="1" fill="#fff" stroke="none" stroke-width="1" />
<line x1="352" y1="451.5" x2="470" y2="451.5" stroke="#000" stroke-width="1" stroke-dasharray="3 3"/>
<rect x="351" y="601" width="120" height="3" fill="#ff00ff" stroke="none" stroke-width="1" />
<rect x="352" y="602" width="118" height="1" fill="#fff" stroke="none" stroke-width="1" />
<line x1="352" y1="602.5" x2="470" y2="602.5" stroke="#000" stroke-width="1" stroke-dasharray="3 3"/>
<rect x="350" y="451" width="3" height="152" fill="#ff00ff" stroke="none" stroke-width="1" />
<rect x="351" y="452" width="1" height="150" fill="#fff" stroke="none" stroke-width="1" />
<line x1="351.5" y1="452" x2="351.5" y2="602" stroke="#000" stroke-width="1" stroke-dasharray="3 3"/>
<rect x="469" y="451" width="3" height="152" fill="#ff00ff" stroke="none" stroke-width="1" />
<rect x="470" y="452" width="1" height="150" fill="#fff" stroke="none" stroke-width="1" />
<line x1="470.5" y1="452" x2="470.5" y2="602" stroke="#000" stroke-width="1" stroke-dasharray="3 3"/>
<rect x="369" y="456" width="14" height="5" fill="#ff0000" stroke="none" stroke-width="1" />
<path d="M383.0 458.0 L392.0 459.0 L401.0 462.0 L410.0 468.0 L418.0 476.0 L424.0 485.0 L427.0 494.0 L426.0 503.0 L429.0 512.0 L430.0 520.0 L432.0 530.0 L431.0 538.0 L434.0 546.0 L433.0 554.0 L436.0 562.0 L438.0 571.0 L441.0 578.0 L444.0 584.0 L444.0 592.0" fill="none" stroke="#ff00ff" stroke-width="1.2" />
<rect x="437" y="593" width="14" height="4" fill="#ff0000" stroke="none" stroke-width="1" />
<rect x="441" y="589" width="5" height="5" fill="#ff0000" stroke="none" stroke-width="1" />
<circle cx="459" cy="426" r="2.2" fill="none" stroke="#ff00ff" stroke-width="1"/>
<path d="M459.0 430.0 L457.0 440.0 L459.0 448.0 L461.0 440.0 Z" fill="#ff00ff" stroke="#ff00ff" stroke-width="1" />
<line x1="455.5" y1="440.5" x2="462.5" y2="440.5" stroke="#ff00ff" stroke-width="1" />
<text x="359" y="664" font-family="Noto Sans CJK SC, sans-serif" font-size="7" fill="#ff00ff" stroke="#ff00ff" stroke-width="0.35" text-anchor="start" font-weight="bold" textLength="46" lengthAdjust="spacingAndGlyphs">阀室管道安装图:</text>
<rect x="403" y="671" width="3" height="32" fill="#ff00ff" stroke="none" stroke-width="1" />
<line x1="404.5" y1="671" x2="404.5" y2="703" stroke="#000000" stroke-width="1" stroke-dasharray="3 2"/>
<rect x="403" y="700" width="34" height="3" fill="#ff00ff" stroke="none" stroke-width="1" />
<line x1="405" y1="701.5" x2="430" y2="701.5" stroke="#000000" stroke-width="1" stroke-dasharray="3 2"/>
<rect x="398" y="681" width="5" height="14" fill="#ff00ff" stroke="none" stroke-width="1" />
<text x="409" y="699" font-family="Noto Sans CJK SC, sans-serif" font-size="5" fill="#ff00ff" stroke="#ff00ff" stroke-width="0.35" text-anchor="start" >xxxxx</text>
<circle cx="404" cy="668" r="1.5" fill="none" stroke="#ff00ff" stroke-width="1"/>
<rect x="485" y="430" width="8" height="4.4" fill="#0000ff" stroke="none" stroke-width="1" />
<line x1="494" y1="431.5" x2="497" y2="431.5" stroke="#0000ff" stroke-width="1" />
<rect x="485" y="443.07" width="8" height="4.4" fill="#0000ff" stroke="none" stroke-width="1" />
<line x1="494" y1="444.57" x2="497" y2="444.57" stroke="#0000ff" stroke-width="1" />
<rect x="485" y="456.14" width="8" height="4.4" fill="#0000ff" stroke="none" stroke-width="1" />
<line x1="494" y1="457.64" x2="497" y2="457.64" stroke="#0000ff" stroke-width="1" />
<rect x="485" y="469.21" width="8" height="4.4" fill="#0000ff" stroke="none" stroke-width="1" />
<line x1="494" y1="470.71" x2="497" y2="470.71" stroke="#0000ff" stroke-width="1" />
<rect x="485" y="482.28" width="8" height="4.4" fill="#0000ff" stroke="none" stroke-width="1" />
<line x1="494" y1="483.78" x2="497" y2="483.78" stroke="#0000ff" stroke-width="1" />
<rect x="485" y="495.35" width="8" height="4.4" fill="#0000ff" stroke="none" stroke-width="1" />
<line x1="494" y1="496.85" x2="497" y2="496.85" stroke="#0000ff" stroke-width="1" />
<rect x="485" y="508.42" width="8" height="4.4" fill="#0000ff" stroke="none" stroke-width="1" />
<line x1="494" y1="509.92" x2="497" y2="509.92" stroke="#0000ff" stroke-width="1" />
<rect x="485" y="521.49" width="8" height="4.4" fill="#0000ff" stroke="none" stroke-width="1" />
<rect x="487" y="522.49" width="1.4" height="2" fill="#fff" stroke="none" stroke-width="1" />
<rect x="490" y="522.49" width="1.4" height="2" fill="#fff" stroke="none" stroke-width="1" />
<line x1="494" y1="522.99" x2="497" y2="522.99" stroke="#0000ff" stroke-width="1" />
<rect x="485" y="534.56" width="8" height="4.4" fill="#0000ff" stroke="none" stroke-width="1" />
<rect x="487" y="535.56" width="1.4" height="2" fill="#fff" stroke="none" stroke-width="1" />
<rect x="490" y="535.56" width="1.4" height="2" fill="#fff" stroke="none" stroke-width="1" />
<line x1="494" y1="536.06" x2="497" y2="536.06" stroke="#0000ff" stroke-width="1" />
<rect x="485" y="547.63" width="8" height="4.4" fill="#0000ff" stroke="none" stroke-width="1" />
<rect x="487" y="548.63" width="1.4" height="2" fill="#fff" stroke="none" stroke-width="1" />
<rect x="490" y="548.63" width="1.4" height="2" fill="#fff" stroke="none" stroke-width="1" />
<line x1="494" y1="549.13" x2="497" y2="549.13" stroke="#0000ff" stroke-width="1" />
<rect x="485" y="560.7" width="8" height="4.4" fill="#0000ff" stroke="none" stroke-width="1" />
<rect x="487" y="561.7" width="1.4" height="2" fill="#fff" stroke="none" stroke-width="1" />
<rect x="490" y="561.7" width="1.4" height="2" fill="#fff" stroke="none" stroke-width="1" />
<line x1="494" y1="562.2" x2="497" y2="562.2" stroke="#0000ff" stroke-width="1" />
<rect x="485" y="573.77" width="8" height="4.4" fill="#0000ff" stroke="none" stroke-width="1" />
<rect x="487" y="574.77" width="1.4" height="2" fill="#fff" stroke="none" stroke-width="1" />
<rect x="490" y="574.77" width="1.4" height="2" fill="#fff" stroke="none" stroke-width="1" />
<line x1="494" y1="575.27" x2="497" y2="575.27" stroke="#0000ff" stroke-width="1" />
<rect x="485" y="586.84" width="8" height="4.4" fill="#0000ff" stroke="none" stroke-width="1" />
<rect x="487" y="587.84" width="1.4" height="2" fill="#fff" stroke="none" stroke-width="1" />
<rect x="490" y="587.84" width="1.4" height="2" fill="#fff" stroke="none" stroke-width="1" />
<line x1="494" y1="588.34" x2="497" y2="588.34" stroke="#0000ff" stroke-width="1" />
<rect x="485" y="599.91" width="8" height="4.4" fill="#0000ff" stroke="none" stroke-width="1" />
<rect x="487" y="600.91" width="1.4" height="2" fill="#fff" stroke="none" stroke-width="1" />
<rect x="490" y="600.91" width="1.4" height="2" fill="#fff" stroke="none" stroke-width="1" />
<line x1="494" y1="601.41" x2="497" y2="601.41" stroke="#0000ff" stroke-width="1" />
<rect x="485" y="612.98" width="8" height="4.4" fill="#0000ff" stroke="none" stroke-width="1" />
<rect x="487" y="613.98" width="1.4" height="2" fill="#fff" stroke="none" stroke-width="1" />
<rect x="490" y="613.98" width="1.4" height="2" fill="#fff" stroke="none" stroke-width="1" />
<line x1="494" y1="614.48" x2="497" y2="614.48" stroke="#0000ff" stroke-width="1" />
<rect x="485" y="626.05" width="8" height="4.4" fill="#0000ff" stroke="none" stroke-width="1" />
<rect x="487" y="627.05" width="1.4" height="2" fill="#fff" stroke="none" stroke-width="1" />
<rect x="490" y="627.05" width="1.4" height="2" fill="#fff" stroke="none" stroke-width="1" />
<line x1="494" y1="627.55" x2="497" y2="627.55" stroke="#0000ff" stroke-width="1" />
<rect x="485" y="639.12" width="8" height="4.4" fill="#0000ff" stroke="none" stroke-width="1" />
<rect x="487" y="640.12" width="1.4" height="2" fill="#fff" stroke="none" stroke-width="1" />
<rect x="490" y="640.12" width="1.4" height="2" fill="#fff" stroke="none" stroke-width="1" />
<line x1="494" y1="640.62" x2="497" y2="640.62" stroke="#0000ff" stroke-width="1" />
<rect x="485" y="652.19" width="8" height="4.4" fill="#0000ff" stroke="none" stroke-width="1" />
<rect x="487" y="653.19" width="1.4" height="2" fill="#fff" stroke="none" stroke-width="1" />
<rect x="490" y="653.19" width="1.4" height="2" fill="#fff" stroke="none" stroke-width="1" />
<line x1="494" y1="653.69" x2="497" y2="653.69" stroke="#0000ff" stroke-width="1" />
<rect x="485" y="665.26" width="8" height="4.4" fill="#0000ff" stroke="none" stroke-width="1" />
<rect x="487" y="666.26" width="1.4" height="2" fill="#fff" stroke="none" stroke-width="1" />
<rect x="490" y="666.26" width="1.4" height="2" fill="#fff" stroke="none" stroke-width="1" />
<line x1="494" y1="666.76" x2="497" y2="666.76" stroke="#0000ff" stroke-width="1" />
<rect x="485" y="678.33" width="8" height="4.4" fill="#0000ff" stroke="none" stroke-width="1" />
<rect x="487" y="679.33" width="1.4" height="2" fill="#fff" stroke="none" stroke-width="1" />
<rect x="490" y="679.33" width="1.4" height="2" fill="#fff" stroke="none" stroke-width="1" />
<line x1="494" y1="679.83" x2="497" y2="679.83" stroke="#0000ff" stroke-width="1" />
<rect x="485" y="691.4" width="8" height="4.4" fill="#0000ff" stroke="none" stroke-width="1" />
<rect x="487" y="692.4" width="1.4" height="2" fill="#fff" stroke="none" stroke-width="1" />
<rect x="490" y="692.4" width="1.4" height="2" fill="#fff" stroke="none" stroke-width="1" />
<line x1="494" y1="692.9" x2="497" y2="692.9" stroke="#0000ff" stroke-width="1" />
<rect x="485" y="704.47" width="8" height="4.4" fill="#0000ff" stroke="none" stroke-width="1" />
<line x1="494" y1="705.97" x2="497" y2="705.97" stroke="#0000ff" stroke-width="1" />
<line x1="496.5" y1="418" x2="496.5" y2="708" stroke="#0000ff" stroke-width="1" stroke-dasharray="1 3"/>
<path d="M511.3 449.7 L520.6 485.5 L531.5 496.3 L537.7 497.9 L553.3 527.4 L557.9 520.6 L585.3 548.5 L630.0 548.5 L634.0 543.0 L636.5 543.0 L638.7 539.8 L641.2 539.8 L643.4 544.5 L655.8 555.4 L659.8 564.0 L704.0 568.4 L800.0 572.5 L813.5 572.6 L847.0 578.3 L871.2 577.0 L872.2 594.4 L882.2 590.3 L883.9 607.8 L888.2 611.0 L890.6 601.0 L895.6 559.2 L905.7 554.2 L910.7 550.8 L921.4 542.4 L940.9 543.1 L977.7 544.8 L983.8 545.8 L985.1 549.8 L1016.3 553.1 L1017.9 547.5 L1020.6 546.8 L1022.0 555.8 L1048.1 559.2 L1064.9 565.9 L1111.8 581.6 L1152.0 586.0 L1161.0 585.0" fill="none" stroke="#ff0000" stroke-width="1" />
<path d="M518.5 480.0 L521.5 480.0 L521.5 487.0 L520.0 490.0 L518.5 486.0 Z" fill="#000000" stroke="#000000" stroke-width="0.5" />
<path d="M551.5 522.0 L554.5 522.0 L554.5 529.0 L553.0 532.0 L551.5 528.0 Z" fill="#000000" stroke="#000000" stroke-width="0.5" />
<path d="M630.5 541.0 L633.5 541.0 L633.5 548.0 L632.0 551.0 L630.5 547.0 Z" fill="#000000" stroke="#000000" stroke-width="0.5" />
<path d="M859.5 575.0 L862.5 575.0 L862.5 582.0 L861.0 585.0 L859.5 581.0 Z" fill="#000000" stroke="#000000" stroke-width="0.5" />
<path d="M1045.5 558.0 L1048.5 558.0 L1048.5 565.0 L1047.0 568.0 L1045.5 564.0 Z" fill="#000000" stroke="#000000" stroke-width="0.5" />
<path d="M645.0 717.8 L643.9 722.0 L647.2 726.4 L648.0 734.0 L645.1 737.0" fill="none" stroke="#00ff00" stroke-width="1" />
<path d="M643.9 722.0 L650.9 721.2" fill="none" stroke="#00ff00" stroke-width="1" />
<path d="M661.9 717.8 L663.2 724.1 L658.8 730.5 L654.3 735.3" fill="none" stroke="#00ff00" stroke-width="1" />
<path d="M663.2 724.1 L672.1 720.6" fill="none" stroke="#00ff00" stroke-width="1" />
<path d="M670.3 716.2 L672.2 720.7 L672.9 725.4 L668.8 732.3 L669.5 737.0" fill="none" stroke="#00ff00" stroke-width="1" />
<path d="M669.5 737.0 L679.8 735.1" fill="none" stroke="#00ff00" stroke-width="1" />
<path d="M684.4 715.4 L681.8 720.2 L684.6 724.5 L682.6 730.5 L681.1 736.3" fill="none" stroke="#00ff00" stroke-width="1" />
<path d="M692.2 715.7 L694.8 720.3 L694.7 724.4 L696.4 731.5 L697.1 737.0 L695.3 737.0" fill="none" stroke="#00ff00" stroke-width="1" />
<path d="M697.1 737.0 L711.1 732.7" fill="none" stroke="#00ff00" stroke-width="1" />
<path d="M700.4 715.9 L702.0 720.1 L704.0 726.7 L709.0 734.0 L706.8 737.0" fill="none" stroke="#00ff00" stroke-width="1" />
<path d="M707.6 715.4 L708.7 721.4 L705.9 726.5 L708.3 732.1 L712.5 737.0" fill="none" stroke="#00ff00" stroke-width="1" />
<path d="M708.3 732.1 L719.8 736.0" fill="none" stroke="#00ff00" stroke-width="1" />
<path d="M724.5 715.1 L723.6 720.5 L727.5 728.4 L724.0 733.1 L721.3 737.0 L721.1 737.0" fill="none" stroke="#00ff00" stroke-width="1" />
<path d="M724.5 715.1 L731.9 715.5" fill="none" stroke="#00ff00" stroke-width="1" />
<path d="M738.8 717.8 L740.7 723.9 L741.9 730.6 L737.4 737.0 L740.2 737.0" fill="none" stroke="#00ff00" stroke-width="1" />
<path d="M750.5 715.6 L750.3 721.2 L747.2 729.1 L746.6 733.6 L747.6 737.0" fill="none" stroke="#00ff00" stroke-width="1" />
<path d="M747.6 737.0 L754.6 735.6" fill="none" stroke="#00ff00" stroke-width="1" />
<path d="M757.8 716.5 L754.3 721.5 L752.8 726.9 L749.0 734.3" fill="none" stroke="#00ff00" stroke-width="1" />
<path d="M770.4 715.2 L766.8 722.2 L769.2 728.2 L771.2 734.2 L768.2 737.0" fill="none" stroke="#00ff00" stroke-width="1" />
<path d="M768.2 737.0 L783.3 739.6" fill="none" stroke="#00ff00" stroke-width="1" />
<path d="M781.0 717.5 L782.9 722.5 L781.6 727.2 L784.3 733.3 L787.1 737.0 L784.3 737.0" fill="none" stroke="#00ff00" stroke-width="1" />
<path d="M798.2 717.3 L800.6 722.2 L800.8 727.6 L796.1 731.7" fill="none" stroke="#00ff00" stroke-width="1" />
<path d="M800.8 727.6 L808.7 728.7" fill="none" stroke="#00ff00" stroke-width="1" />
<path d="M809.3 718.0 L813.9 723.4 L811.1 728.3 L808.1 733.1 L809.3 737.0 L812.7 737.0" fill="none" stroke="#00ff00" stroke-width="1" />
<path d="M825.9 717.3 L822.1 722.9 L824.2 727.7 L828.1 733.4" fill="none" stroke="#00ff00" stroke-width="1" />
<path d="M834.0 715.6 L833.0 723.4 L835.2 728.1 L831.5 732.7 L835.5 737.0 L832.0 737.0" fill="none" stroke="#00ff00" stroke-width="1" />
<path d="M848.9 714.6 L849.3 718.7 L852.3 725.6 L848.4 732.6 L844.8 737.0" fill="none" stroke="#00ff00" stroke-width="1" />
<path d="M849.3 718.7 L855.6 715.8" fill="none" stroke="#00ff00" stroke-width="1" />
<path d="M861.9 715.3 L862.3 722.6 L857.9 729.6 L861.9 736.3 L865.0 737.0 L868.3 737.0" fill="none" stroke="#00ff00" stroke-width="1" />
<path d="M862.3 722.6 L873.5 717.8" fill="none" stroke="#00ff00" stroke-width="1" />
<path d="M874.1 716.4 L876.9 721.0 L873.3 727.5 L869.5 731.8" fill="none" stroke="#00ff00" stroke-width="1" />
<path d="M887.5 717.1 L883.6 723.4 L881.1 728.5 L883.8 734.5 L884.4 737.0" fill="none" stroke="#00ff00" stroke-width="1" />
<path d="M899.8 717.9 L900.9 722.7 L898.7 728.7 L901.7 734.8 L899.2 737.0 L903.0 737.0" fill="none" stroke="#00ff00" stroke-width="1" />
<path d="M917.6 717.4 L913.9 721.8 L913.3 726.1 L910.7 730.4" fill="none" stroke="#00ff00" stroke-width="1" />
<path d="M934.0 717.8 L935.4 723.2 L932.9 727.8 L932.6 734.8" fill="none" stroke="#00ff00" stroke-width="1" />
<path d="M932.6 734.8 L940.2 736.4" fill="none" stroke="#00ff00" stroke-width="1" />
<path d="M943.6 715.7 L943.8 721.1 L940.8 726.4 L943.0 730.4 L943.5 736.2 L938.7 737.0" fill="none" stroke="#00ff00" stroke-width="1" />
<path d="M956.8 714.5 L961.0 719.4 L964.7 723.7 L962.5 731.3" fill="none" stroke="#00ff00" stroke-width="1" />
<path d="M961.0 719.4 L975.2 722.9" fill="none" stroke="#00ff00" stroke-width="1" />
<path d="M971.9 715.6 L972.3 721.7 L972.2 727.0 L970.0 734.2 L966.8 737.0" fill="none" stroke="#00ff00" stroke-width="1" />
<path d="M971.9 715.6 L984.2 718.6" fill="none" stroke="#00ff00" stroke-width="1" />
<path d="M979.9 714.3 L983.5 720.1 L981.9 726.3 L986.2 731.4" fill="none" stroke="#00ff00" stroke-width="1" />
<path d="M983.5 720.1 L998.9 724.8" fill="none" stroke="#00ff00" stroke-width="1" />
<path d="M990.0 714.8 L988.2 720.0 L990.8 725.2 L990.8 729.9" fill="none" stroke="#00ff00" stroke-width="1" />
<path d="M990.0 714.8 L1006.0 710.2" fill="none" stroke="#00ff00" stroke-width="1" />
<path d="M997.3 716.2 L994.2 722.1 L998.5 726.5 L1001.7 732.3 L1001.7 737.0 L1000.6 737.0" fill="none" stroke="#00ff00" stroke-width="1" />
<path d="M1016.1 714.8 L1019.9 721.7 L1016.3 729.7 L1021.1 737.0 L1016.2 737.0" fill="none" stroke="#00ff00" stroke-width="1" />
<path d="M1028.2 714.3 L1031.6 721.8 L1033.3 726.9 L1030.8 732.1" fill="none" stroke="#00ff00" stroke-width="1" />
<path d="M1031.6 721.8 L1040.3 716.9" fill="none" stroke="#00ff00" stroke-width="1" />
<path d="M1039.6 717.9 L1040.1 722.9 L1044.7 728.1 L1043.3 732.1 L1042.1 737.0" fill="none" stroke="#00ff00" stroke-width="1" />
<path d="M1040.1 722.9 L1048.6 725.6" fill="none" stroke="#00ff00" stroke-width="1" />
<path d="M1047.7 714.6 L1048.6 720.2 L1046.6 726.7 L1042.4 734.5" fill="none" stroke="#00ff00" stroke-width="1" />
<path d="M1056.6 717.1 L1057.5 724.2 L1059.7 730.2 L1057.6 736.6 L1054.0 737.0 L1056.2 737.0" fill="none" stroke="#00ff00" stroke-width="1" />
<path d="M1056.2 737.0 L1070.3 733.4" fill="none" stroke="#00ff00" stroke-width="1" />
<path d="M1069.8 716.3 L1073.0 720.3 L1074.8 727.5 L1076.9 735.4 L1078.4 737.0 L1073.8 737.0" fill="none" stroke="#00ff00" stroke-width="1" />
<path d="M1081.4 716.2 L1082.6 722.7 L1084.4 728.7 L1079.5 735.9 L1082.0 737.0" fill="none" stroke="#00ff00" stroke-width="1" />
<path d="M1082.0 737.0 L1088.6 739.4" fill="none" stroke="#00ff00" stroke-width="1" />
<path d="M1091.4 717.4 L1088.7 724.4 L1086.0 731.0 L1085.6 737.0" fill="none" stroke="#00ff00" stroke-width="1" />
<path d="M1086.0 731.0 L1099.7 732.2" fill="none" stroke="#00ff00" stroke-width="1" />
<path d="M1106.1 716.4 L1104.4 723.0 L1106.3 729.5 L1102.7 735.4" fill="none" stroke="#00ff00" stroke-width="1" />
<path d="M1106.1 716.4 L1119.0 718.2" fill="none" stroke="#00ff00" stroke-width="1" />
<path d="M1116.6 715.1 L1116.2 722.2 L1121.2 728.4 L1119.3 732.8 L1119.0 737.0 L1114.8 737.0" fill="none" stroke="#00ff00" stroke-width="1" />
<path d="M1135.5 714.8 L1140.0 719.7 L1140.8 724.2 L1141.0 732.1 L1137.4 737.0" fill="none" stroke="#00ff00" stroke-width="1" />
<path d="M1135.5 714.8 L1148.5 712.2" fill="none" stroke="#00ff00" stroke-width="1" />
<path d="M1153.3 715.6 L1149.9 723.4 L1151.7 729.0 L1154.0 734.7 L1152.7 737.0" fill="none" stroke="#00ff00" stroke-width="1" />
<path d="M1151.7 729.0 L1165.2 732.4" fill="none" stroke="#00ff00" stroke-width="1" />
<path d="M1117.1 728.8 L1124.6 727.2" fill="none" stroke="#00ff00" stroke-width="1" />
<path d="M831.7 723.1 L839.7 723.8" fill="none" stroke="#00ff00" stroke-width="1" />
<path d="M825.8 723.7 L830.1 720.1" fill="none" stroke="#00ff00" stroke-width="1" />
<path d="M692.4 731.0 L696.8 734.5" fill="none" stroke="#00ff00" stroke-width="1" />
<path d="M768.4 720.8 L774.0 718.3" fill="none" stroke="#00ff00" stroke-width="1" />
<path d="M832.3 733.2 L839.7 735.7" fill="none" stroke="#00ff00" stroke-width="1" />
<path d="M964.9 732.4 L972.6 732.8" fill="none" stroke="#00ff00" stroke-width="1" />
<path d="M1010.6 716.9 L1017.2 716.5" fill="none" stroke="#00ff00" stroke-width="1" />
<path d="M1027.6 727.6 L1032.1 724.0" fill="none" stroke="#00ff00" stroke-width="1" />
<path d="M1117.3 718.3 L1122.7 717.0" fill="none" stroke="#00ff00" stroke-width="1" />
<path d="M793.4 729.3 L801.2 727.4" fill="none" stroke="#00ff00" stroke-width="1" />
<path d="M977.8 721.4 L983.6 720.6" fill="none" stroke="#00ff00" stroke-width="1" />
<path d="M726.2 718.9 L730.2 722.2" fill="none" stroke="#00ff00" stroke-width="1" />
<path d="M896.0 720.0 L903.5 723.9" fill="none" stroke="#00ff00" stroke-width="1" />
<path d="M871.7 718.5 L875.7 715.2" fill="none" stroke="#00ff00" stroke-width="1" />
<path d="M816.1 717.6 L820.3 715.7" fill="none" stroke="#00ff00" stroke-width="1" />
<path d="M933.4 732.0 L940.1 731.3" fill="none" stroke="#00ff00" stroke-width="1" />
<path d="M853.2 725.4 L858.0 724.1" fill="none" stroke="#00ff00" stroke-width="1" />
<path d="M672.0 721.0 L679.8 718.0" fill="none" stroke="#00ff00" stroke-width="1" />
<path d="M899.2 727.3 L906.6 725.1" fill="none" stroke="#00ff00" stroke-width="1" />
<path d="M779.6 720.5 L784.6 720.0" fill="none" stroke="#00ff00" stroke-width="1" />
<path d="M1131.3 731.3 L1138.6 727.5" fill="none" stroke="#00ff00" stroke-width="1" />
<path d="M656.6 728.8 L664.1 728.6" fill="none" stroke="#00ff00" stroke-width="1" />
<path d="M942.4 716.0 L947.4 719.4" fill="none" stroke="#00ff00" stroke-width="1" />
<path d="M1065.2 731.4 L1073.0 729.4" fill="none" stroke="#00ff00" stroke-width="1" />
<path d="M696.2 718.8 L701.8 720.2" fill="none" stroke="#00ff00" stroke-width="1" />
<path d="M1124.9 729.0 L1131.1 731.1" fill="none" stroke="#00ff00" stroke-width="1" />
<path d="M875.5 725.9 L878.7 728.2" fill="none" stroke="#00ff00" stroke-width="1" />
<path d="M759.8 732.6 L766.0 731.0" fill="none" stroke="#00ff00" stroke-width="1" />
<path d="M705.9 720.5 L712.1 722.1" fill="none" stroke="#00ff00" stroke-width="1" />
<path d="M697.7 717.3 L703.4 717.9" fill="none" stroke="#00ff00" stroke-width="1" />
<path d="M839.9 720.0 L845.9 716.1" fill="none" stroke="#00ff00" stroke-width="1" />
<path d="M795.3 724.3 L803.1 725.4" fill="none" stroke="#00ff00" stroke-width="1" />
<path d="M1095.1 724.6 L1099.3 722.5" fill="none" stroke="#00ff00" stroke-width="1" />
<path d="M1134.7 728.7 L1139.3 724.9" fill="none" stroke="#00ff00" stroke-width="1" />
<path d="M896.6 728.1 L901.7 726.2" fill="none" stroke="#00ff00" stroke-width="1" />
<path d="M983.7 732.7 L987.8 728.9" fill="none" stroke="#00ff00" stroke-width="1" />
<path d="M814.1 723.6 L820.5 721.2" fill="none" stroke="#00ff00" stroke-width="1" />
<path d="M1050.5 729.3 L1056.0 726.9" fill="none" stroke="#00ff00" stroke-width="1" />
<path d="M1139.5 721.6 L1146.6 719.5" fill="none" stroke="#00ff00" stroke-width="1" />
<path d="M545.5 728.7 L552.3 729.9 L570.0 734.2" fill="none" stroke="#00ffff" stroke-width="1" />
<path d="M575.8 731.4 L589.4 727.9 L597.3 727.4" fill="none" stroke="#ffff00" stroke-width="1" />
<path d="M632.0 717.6 L643.7 714.5 L654.3 720.5" fill="none" stroke="#ffff00" stroke-width="1" />
<path d="M556.1 717.0 L569.6 715.3 L574.7 723.1" fill="none" stroke="#ffff00" stroke-width="1" />
<path d="M605.8 715.6 L617.6 719.0 L635.6 714.8" fill="none" stroke="#00ff00" stroke-width="1" />
<path d="M532.5 716.4 L541.3 721.0 L550.3 722.9" fill="none" stroke="#ffff00" stroke-width="1" />
<path d="M543.9 721.4 L556.4 720.7 L560.5 721.0" fill="none" stroke="#00ffff" stroke-width="1" />
<path d="M562.9 731.6 L571.4 733.9 L585.5 733.4" fill="none" stroke="#ffff00" stroke-width="1" />
<path d="M548.5 726.3 L554.8 721.6 L565.4 732.1" fill="none" stroke="#00ffff" stroke-width="1" />
<path d="M549.6 728.5 L558.3 726.2 L579.0 730.1" fill="none" stroke="#0000ff" stroke-width="1" />
<path d="M550.1 727.9 L563.5 725.9 L576.3 729.2" fill="none" stroke="#00ffff" stroke-width="1" />
<path d="M612.7 732.0 L618.8 729.4 L635.3 736.0" fill="none" stroke="#ffff00" stroke-width="1" />
<path d="M629.7 722.0 L643.0 725.1 L647.6 721.9" fill="none" stroke="#00ffff" stroke-width="1" />
<path d="M521.0 731.8 L533.6 734.5 L545.5 729.3" fill="none" stroke="#00ffff" stroke-width="1" />
<path d="M556.7 721.5 L563.4 718.5 L583.3 718.0" fill="none" stroke="#0000ff" stroke-width="1" />
<path d="M527.4 715.6 L537.8 714.5 L549.4 714.5" fill="none" stroke="#0000ff" stroke-width="1" />
<path d="M828.0 715.0 L822.0 726.0 L818.0 737.0" fill="none" stroke="#00ffff" stroke-width="1" />
<path d="M1004.0 715.0 L998.0 726.0 L994.0 737.0" fill="none" stroke="#00ffff" stroke-width="1" />
<path d="M885.0 715.0 L879.0 726.0 L875.0 737.0" fill="none" stroke="#0000ff" stroke-width="1" />
<path d="M893.0 715.0 L887.0 726.0 L883.0 737.0" fill="none" stroke="#0000ff" stroke-width="1" />
<path d="M780.0 715.0 L774.0 726.0 L770.0 737.0" fill="none" stroke="#ffff00" stroke-width="1" />
<path d="M1090.0 715.0 L1084.0 726.0 L1080.0 737.0" fill="none" stroke="#ffff00" stroke-width="1" />
<line x1="510" y1="721.5" x2="1161" y2="721.5" stroke="#0000ff" stroke-width="1" stroke-dasharray="27 19"/>
<line x1="510" y1="729.5" x2="1161" y2="729.5" stroke="#0000ff" stroke-width="1" stroke-dasharray="27 19"/>
<rect x="540" y="720" width="8" height="3" fill="#0000ff" stroke="none" stroke-width="1" />
<rect x="540" y="728" width="8" height="3" fill="#0000ff" stroke="none" stroke-width="1" />
<rect x="586" y="720" width="8" height="3" fill="#0000ff" stroke="none" stroke-width="1" />
<rect x="586" y="728" width="8" height="3" fill="#0000ff" stroke="none" stroke-width="1" />
<rect x="632" y="720" width="8" height="3" fill="#0000ff" stroke="none" stroke-width="1" />
<rect x="632" y="728" width="8" height="3" fill="#0000ff" stroke="none" stroke-width="1" />
<rect x="678" y="720" width="8" height="3" fill="#0000ff" stroke="none" stroke-width="1" />
<rect x="678" y="728" width="8" height="3" fill="#0000ff" stroke="none" stroke-width="1" />
<rect x="724" y="720" width="8" height="3" fill="#0000ff" stroke="none" stroke-width="1" />
<rect x="724" y="728" width="8" height="3" fill="#0000ff" stroke="none" stroke-width="1" />
<rect x="770" y="720" width="8" height="3" fill="#0000ff" stroke="none" stroke-width="1" />
<rect x="770" y="728" width="8" height="3" fill="#0000ff" stroke="none" stroke-width="1" />
<rect x="816" y="720" width="8" height="3" fill="#0000ff" stroke="none" stroke-width="1" />
<rect x="816" y="728" width="8" height="3" fill="#0000ff" stroke="none" stroke-width="1" />
<rect x="862" y="720" width="8" height="3" fill="#0000ff" stroke="none" stroke-width="1" />
<rect x="862" y="728" width="8" height="3" fill="#0000ff" stroke="none" stroke-width="1" />
<rect x="908" y="720" width="8" height="3" fill="#0000ff" stroke="none" stroke-width="1" />
<rect x="908" y="728" width="8" height="3" fill="#0000ff" stroke="none" stroke-width="1" />
<rect x="954" y="720" width="8" height="3" fill="#0000ff" stroke="none" stroke-width="1" />
<rect x="954" y="728" width="8" height="3" fill="#0000ff" stroke="none" stroke-width="1" />
<rect x="1000" y="720" width="8" height="3" fill="#0000ff" stroke="none" stroke-width="1" />
<rect x="1000" y="728" width="8" height="3" fill="#0000ff" stroke="none" stroke-width="1" />
<rect x="1046" y="720" width="8" height="3" fill="#0000ff" stroke="none" stroke-width="1" />
<rect x="1046" y="728" width="8" height="3" fill="#0000ff" stroke="none" stroke-width="1" />
<rect x="1092" y="720" width="8" height="3" fill="#0000ff" stroke="none" stroke-width="1" />
<rect x="1092" y="728" width="8" height="3" fill="#0000ff" stroke="none" stroke-width="1" />
<rect x="1138" y="720" width="8" height="3" fill="#0000ff" stroke="none" stroke-width="1" />
<rect x="1138" y="728" width="8" height="3" fill="#0000ff" stroke="none" stroke-width="1" />
<rect x="510" y="724" width="651" height="2" fill="#000000" stroke="none" stroke-width="1" />
<rect x="497" y="722" width="13" height="5" fill="#000000" stroke="none" stroke-width="1" />
<rect x="513" y="714" width="16" height="8" fill="#000000" stroke="none" stroke-width="1" />
<rect x="542" y="716" width="19" height="7" fill="#000000" stroke="none" stroke-width="1" />
<rect x="620" y="729" width="21" height="7" fill="#000000" stroke="none" stroke-width="1" />
<rect x="851" y="729" width="22" height="7" fill="#000000" stroke="none" stroke-width="1" />
<rect x="1037" y="729" width="21" height="7" fill="#000000" stroke="none" stroke-width="1" />
<path d="M628.0 730.0 L631.0 724.0 L634.0 730.0 Z" fill="#fff" stroke="#fff" stroke-width="1" />
<path d="M628.0 730.0 L631.0 724.5 L634.0 730.0" fill="none" stroke="#000000" stroke-width="0.8" />
<path d="M859.0 730.0 L862.0 724.0 L865.0 730.0 Z" fill="#fff" stroke="#fff" stroke-width="1" />
<path d="M859.0 730.0 L862.0 724.5 L865.0 730.0" fill="none" stroke="#000000" stroke-width="0.8" />
<path d="M1045.0 730.0 L1048.0 724.0 L1051.0 730.0 Z" fill="#fff" stroke="#fff" stroke-width="1" />
<path d="M1045.0 730.0 L1048.0 724.5 L1051.0 730.0" fill="none" stroke="#000000" stroke-width="0.8" />
<line x1="749.5" y1="714" x2="749.5" y2="737" stroke="#000000" stroke-width="1" />
<line x1="919.5" y1="714" x2="919.5" y2="737" stroke="#000000" stroke-width="1" />
<line x1="511.5" y1="714" x2="511.5" y2="738" stroke="#000000" stroke-width="1" />
<line x1="514.5" y1="716" x2="514.5" y2="738" stroke="#000000" stroke-width="1" />
<line x1="560.5" y1="714" x2="560.5" y2="737" stroke="#000000" stroke-width="1" />
<text x="356" y="729" font-family="Noto Sans CJK SC, sans-serif" font-size="8.2" fill="#ff00ff" stroke="#ff00ff" stroke-width="0.35" text-anchor="start" font-weight="bold" textLength="53" lengthAdjust="spacing">平面示意图</text>
<text x="349" y="728.5" font-family="Noto Sans CJK SC, sans-serif" font-size="5.5" fill="#ff00ff" stroke="#ff00ff" stroke-width="0.35" text-anchor="middle" font-weight="bold">1</text>
<text x="356" y="755" font-family="Noto Sans CJK SC, sans-serif" font-size="8.2" fill="#ff00ff" stroke="#ff00ff" stroke-width="0.35" text-anchor="start" font-weight="bold" textLength="74" lengthAdjust="spacing">水平里程(km+m)</text>
<text x="349" y="754.5" font-family="Noto Sans CJK SC, sans-serif" font-size="5.5" fill="#ff00ff" stroke="#ff00ff" stroke-width="0.35" text-anchor="middle" font-weight="bold">2</text>
<text x="356" y="775" font-family="Noto Sans CJK SC, sans-serif" font-size="8.2" fill="#ff00ff" stroke="#ff00ff" stroke-width="0.35" text-anchor="start" font-weight="bold" textLength="85" lengthAdjust="spacing">地面自然标高(m)</text>
<text x="349" y="774.5" font-family="Noto Sans CJK SC, sans-serif" font-size="5.5" fill="#ff00ff" stroke="#ff00ff" stroke-width="0.35" text-anchor="middle" font-weight="bold">3</text>
<text x="356" y="791" font-family="Noto Sans CJK SC, sans-serif" font-size="8.2" fill="#ff00ff" stroke="#ff00ff" stroke-width="0.35" text-anchor="start" font-weight="bold" textLength="85" lengthAdjust="spacing">管底设计标高(m)</text>
<text x="349" y="790.5" font-family="Noto Sans CJK SC, sans-serif" font-size="5.5" fill="#ff00ff" stroke="#ff00ff" stroke-width="0.35" text-anchor="middle" font-weight="bold">4</text>
<text x="356" y="805" font-family="Noto Sans CJK SC, sans-serif" font-size="8.2" fill="#ff00ff" stroke="#ff00ff" stroke-width="0.35" text-anchor="start" font-weight="bold" textLength="119" lengthAdjust="spacing">设计坡度(‰) /坡长(m)</text>
<text x="349" y="804.5" font-family="Noto Sans CJK SC, sans-serif" font-size="5.5" fill="#ff00ff" stroke="#ff00ff" stroke-width="0.35" text-anchor="middle" font-weight="bold">5</text>
<text x="356" y="818" font-family="Noto Sans CJK SC, sans-serif" font-size="8.2" fill="#ff00ff" stroke="#ff00ff" stroke-width="0.35" text-anchor="start" font-weight="bold" textLength="85" lengthAdjust="spacing">管沟开挖深度(m)</text>
<text x="349" y="817.5" font-family="Noto Sans CJK SC, sans-serif" font-size="5.5" fill="#ff00ff" stroke="#ff00ff" stroke-width="0.35" text-anchor="middle" font-weight="bold">6</text>
<text x="356" y="831" font-family="Noto Sans CJK SC, sans-serif" font-size="8.2" fill="#ff00ff" stroke="#ff00ff" stroke-width="0.35" text-anchor="start" font-weight="bold" textLength="76" lengthAdjust="spacing">防腐层及其等级</text>
<text x="349" y="830.5" font-family="Noto Sans CJK SC, sans-serif" font-size="5.5" fill="#ff00ff" stroke="#ff00ff" stroke-width="0.35" text-anchor="middle" font-weight="bold">7</text>
<text x="356" y="843" font-family="Noto Sans CJK SC, sans-serif" font-size="8.2" fill="#ff00ff" stroke="#ff00ff" stroke-width="0.35" text-anchor="start" font-weight="bold" textLength="100" lengthAdjust="spacing">管沟开挖土石方(m³)</text>
<text x="349" y="842.5" font-family="Noto Sans CJK SC, sans-serif" font-size="5.5" fill="#ff00ff" stroke="#ff00ff" stroke-width="0.35" text-anchor="middle" font-weight="bold">8</text>
<text x="356" y="854.5" font-family="Noto Sans CJK SC, sans-serif" font-size="8.2" fill="#ff00ff" stroke="#ff00ff" stroke-width="0.35" text-anchor="start" font-weight="bold" textLength="102" lengthAdjust="spacing">地区等级、线路截断阀</text>
<text x="349" y="854" font-family="Noto Sans CJK SC, sans-serif" font-size="5.5" fill="#ff00ff" stroke="#ff00ff" stroke-width="0.35" text-anchor="middle" font-weight="bold">9</text>
<text x="356" y="866" font-family="Noto Sans CJK SC, sans-serif" font-size="8.2" fill="#ff00ff" stroke="#ff00ff" stroke-width="0.35" text-anchor="start" font-weight="bold" textLength="110" lengthAdjust="spacing">管材规格、壁厚、材质</text>
<text x="349" y="865.5" font-family="Noto Sans CJK SC, sans-serif" font-size="5.5" fill="#ff00ff" stroke="#ff00ff" stroke-width="0.35" text-anchor="middle" font-weight="bold">10</text>
<text x="356" y="882" font-family="Noto Sans CJK SC, sans-serif" font-size="8.2" fill="#ff00ff" stroke="#ff00ff" stroke-width="0.35" text-anchor="start" font-weight="bold" textLength="42" lengthAdjust="spacing">地质描述</text>
<text x="349" y="881.5" font-family="Noto Sans CJK SC, sans-serif" font-size="5.5" fill="#ff00ff" stroke="#ff00ff" stroke-width="0.35" text-anchor="middle" font-weight="bold">11</text>
<line x1="427" y1="807" x2="433" y2="795" stroke="#000000" stroke-width="1.3" />
<rect x="1214" y="139" width="1" height="52" fill="#ff00ff" stroke="none" stroke-width="1" />
<line x1="1215.5" y1="139" x2="1215.5" y2="191" stroke="#ff00ff" stroke-width="1" stroke-dasharray="1 3"/>
<rect x="1214" y="149" width="184" height="3" fill="#ff00ff" stroke="none" stroke-width="1" />
<rect x="1215" y="150" width="182" height="1" fill="#fff" stroke="none" stroke-width="1" />
<line x1="1215" y1="150.5" x2="1397" y2="150.5" stroke="#000" stroke-width="1" stroke-dasharray="3 3"/>
<rect x="1214" y="160" width="184" height="1" fill="#ff00ff" stroke="none" stroke-width="1" />
<line x1="1214" y1="159.5" x2="1398" y2="159.5" stroke="#ff00ff" stroke-width="1" stroke-dasharray="1 3"/>
<rect x="1214" y="190" width="184" height="1" fill="#ff00ff" stroke="none" stroke-width="1" />
<line x1="1214" y1="189.5" x2="1398" y2="189.5" stroke="#ff00ff" stroke-width="1" stroke-dasharray="1 3"/>
<rect x="1253" y="169" width="145" height="3" fill="#ff00ff" stroke="none" stroke-width="1" />
<rect x="1254" y="170" width="143" height="1" fill="#fff" stroke="none" stroke-width="1" />
<line x1="1254" y1="170.5" x2="1397" y2="170.5" stroke="#000" stroke-width="1" stroke-dasharray="3 3"/>
<rect x="1253" y="178" width="145" height="3" fill="#ff00ff" stroke="none" stroke-width="1" />
<rect x="1254" y="179" width="143" height="1" fill="#fff" stroke="none" stroke-width="1" />
<line x1="1254" y1="179.5" x2="1397" y2="179.5" stroke="#000" stroke-width="1" stroke-dasharray="3 3"/>
<rect x="1252" y="160" width="3" height="31" fill="#ff00ff" stroke="none" stroke-width="1" />
<rect x="1253" y="161" width="1" height="29" fill="#fff" stroke="none" stroke-width="1" />
<line x1="1253.5" y1="161" x2="1253.5" y2="190" stroke="#000" stroke-width="1" stroke-dasharray="3 3"/>
<rect x="1284" y="160" width="3" height="31" fill="#ff00ff" stroke="none" stroke-width="1" />
<rect x="1285" y="161" width="1" height="29" fill="#fff" stroke="none" stroke-width="1" />
<line x1="1285.5" y1="161" x2="1285.5" y2="190" stroke="#000" stroke-width="1" stroke-dasharray="3 3"/>
<rect x="1316" y="160" width="3" height="31" fill="#ff00ff" stroke="none" stroke-width="1" />
<rect x="1317" y="161" width="1" height="29" fill="#fff" stroke="none" stroke-width="1" />
<line x1="1317.5" y1="161" x2="1317.5" y2="190" stroke="#000" stroke-width="1" stroke-dasharray="3 3"/>
<rect x="1348" y="160" width="3" height="31" fill="#ff00ff" stroke="none" stroke-width="1" />
<rect x="1349" y="161" width="1" height="29" fill="#fff" stroke="none" stroke-width="1" />
<line x1="1349.5" y1="161" x2="1349.5" y2="190" stroke="#000" stroke-width="1" stroke-dasharray="3 3"/>
<rect x="1268" y="170" width="3" height="21" fill="#ff00ff" stroke="none" stroke-width="1" />
<rect x="1269" y="171" width="1" height="19" fill="#fff" stroke="none" stroke-width="1" />
<line x1="1269.5" y1="171" x2="1269.5" y2="190" stroke="#000" stroke-width="1" stroke-dasharray="3 3"/>
<rect x="1364" y="170" width="3" height="21" fill="#ff00ff" stroke="none" stroke-width="1" />
<rect x="1365" y="171" width="1" height="19" fill="#fff" stroke="none" stroke-width="1" />
<line x1="1365.5" y1="171" x2="1365.5" y2="190" stroke="#000" stroke-width="1" stroke-dasharray="3 3"/>
<rect x="1380" y="170" width="3" height="21" fill="#ff00ff" stroke="none" stroke-width="1" />
<rect x="1381" y="171" width="1" height="19" fill="#fff" stroke="none" stroke-width="1" />
<line x1="1381.5" y1="171" x2="1381.5" y2="190" stroke="#000" stroke-width="1" stroke-dasharray="3 3"/>
<rect x="1384" y="139" width="1" height="12" fill="#ff00ff" stroke="none" stroke-width="1" />
<line x1="1385.5" y1="139" x2="1385.5" y2="151" stroke="#ff00ff" stroke-width="1" stroke-dasharray="1 3"/>
<rect x="1364" y="150" width="1" height="11" fill="#ff00ff" stroke="none" stroke-width="1" />
<line x1="1365.5" y1="150" x2="1365.5" y2="161" stroke="#ff00ff" stroke-width="1" stroke-dasharray="1 3"/>
<text x="1218" y="147.5" font-family="Noto Sans CJK SC, sans-serif" font-size="6.2" fill="#ff00ff" stroke="#ff00ff" stroke-width="0.35" text-anchor="start" font-weight="bold" textLength="160" lengthAdjust="spacingAndGlyphs">XX天然气管道工程线路施工图—般线路　　线路平面纵断面图</text>
<text x="1387" y="148" font-family="Noto Sans CJK SC, sans-serif" font-size="7" fill="#ff00ff" stroke="#ff00ff" stroke-width="0.35" text-anchor="start" font-weight="bold">图</text>
<rect x="1237" y="153" width="45" height="4.5" fill="#ff00ff" stroke="none" stroke-width="1" />
<rect x="1318" y="153" width="33" height="4.5" fill="#ff00ff" stroke="none" stroke-width="1" />
<rect x="1367" y="153" width="26" height="4.5" fill="#ff00ff" stroke="none" stroke-width="1" />
<text x="1233" y="178.5" font-family="Noto Sans CJK SC, sans-serif" font-size="6.5" fill="#ff00ff" stroke="#ff00ff" stroke-width="0.35" text-anchor="middle" font-weight="bold" textLength="24" lengthAdjust="spacingAndGlyphs">设计证号</text>
<text x="1269" y="167.5" font-family="Noto Sans CJK SC, sans-serif" font-size="6" fill="#ff00ff" stroke="#ff00ff" stroke-width="0.35" text-anchor="middle" font-weight="bold">(设计)</text>
<text x="1301" y="167.5" font-family="Noto Sans CJK SC, sans-serif" font-size="6" fill="#ff00ff" stroke="#ff00ff" stroke-width="0.35" text-anchor="middle" font-weight="bold">(校对)</text>
<text x="1333" y="167.5" font-family="Noto Sans CJK SC, sans-serif" font-size="6" fill="#ff00ff" stroke="#ff00ff" stroke-width="0.35" text-anchor="middle" font-weight="bold">(审核)</text>
<text x="1373" y="167.5" font-family="Noto Sans CJK SC, sans-serif" font-size="6" fill="#ff00ff" stroke="#ff00ff" stroke-width="0.35" text-anchor="middle" font-weight="bold">图号</text>
<text x="1261" y="177" font-family="Liberation Sans, sans-serif" font-size="5.5" fill="#ff00ff" stroke="#ff00ff" stroke-width="0.35" text-anchor="middle" font-weight="bold">01</text>
<text x="1277" y="177" font-family="Liberation Sans, sans-serif" font-size="5.5" fill="#ff00ff" stroke="#ff00ff" stroke-width="0.35" text-anchor="middle" font-weight="bold">02</text>
<text x="1301" y="177" font-family="Liberation Sans, sans-serif" font-size="5.5" fill="#ff00ff" stroke="#ff00ff" stroke-width="0.35" text-anchor="middle" font-weight="bold">01</text>
<text x="1333" y="177" font-family="Liberation Sans, sans-serif" font-size="5.5" fill="#ff00ff" stroke="#ff00ff" stroke-width="0.35" text-anchor="middle" font-weight="bold">02</text>
<text x="1357" y="177" font-family="Liberation Sans, sans-serif" font-size="5.5" fill="#ff00ff" stroke="#ff00ff" stroke-width="0.35" text-anchor="middle" font-weight="bold">01</text>
<text x="1373" y="177" font-family="Liberation Sans, sans-serif" font-size="5.5" fill="#ff00ff" stroke="#ff00ff" stroke-width="0.35" text-anchor="middle" font-weight="bold">02</text>
<text x="1389" y="177" font-family="Liberation Sans, sans-serif" font-size="5.5" fill="#ff00ff" stroke="#ff00ff" stroke-width="0.35" text-anchor="middle" font-weight="bold">03</text>
<text x="1215" y="211" font-family="Noto Sans CJK SC, sans-serif" font-size="6.6" fill="#ff00ff" stroke="#ff00ff" stroke-width="0.35" text-anchor="start" font-weight="bold">1、图中符号:</text>
<text x="1227" y="220" font-family="Liberation Sans, sans-serif" font-size="5" fill="#ff00ff" stroke="#ff00ff" stroke-width="0.35" text-anchor="start" font-weight="bold">Y</text>
<text x="1238" y="220" font-family="Noto Sans CJK SC, sans-serif" font-size="5.4" fill="#ff00ff" stroke="#ff00ff" stroke-width="0.35" text-anchor="start" font-weight="bold" textLength="18.0" lengthAdjust="spacingAndGlyphs">设计桩号</text>
<line x1="1238" y1="221.5" x2="1256" y2="221.5" stroke="#ff00ff" stroke-width="1" />
<text x="1286" y="220" font-family="Liberation Sans, sans-serif" font-size="5" fill="#ff00ff" stroke="#ff00ff" stroke-width="0.35" text-anchor="start" font-weight="bold">S</text>
<text x="1297" y="220" font-family="Noto Sans CJK SC, sans-serif" font-size="5.4" fill="#ff00ff" stroke="#ff00ff" stroke-width="0.35" text-anchor="start" font-weight="bold" textLength="18.0" lengthAdjust="spacingAndGlyphs">测量桩号</text>
<line x1="1297" y1="221.5" x2="1315" y2="221.5" stroke="#ff00ff" stroke-width="1" />
<text x="1344" y="220" font-family="Liberation Sans, sans-serif" font-size="5" fill="#ff00ff" stroke="#ff00ff" stroke-width="0.35" text-anchor="start" font-weight="bold">Z</text>
<text x="1355" y="220" font-family="Noto Sans CJK SC, sans-serif" font-size="5.4" fill="#ff00ff" stroke="#ff00ff" stroke-width="0.35" text-anchor="start" font-weight="bold" textLength="13.5" lengthAdjust="spacingAndGlyphs">转角桩</text>
<line x1="1355" y1="221.5" x2="1368.5" y2="221.5" stroke="#ff00ff" stroke-width="1" />
<text x="1227" y="229" font-family="Liberation Sans, sans-serif" font-size="5" fill="#ff00ff" stroke="#ff00ff" stroke-width="0.35" text-anchor="start" font-weight="bold">G</text>
<text x="1238" y="229" font-family="Noto Sans CJK SC, sans-serif" font-size="5.4" fill="#ff00ff" stroke="#ff00ff" stroke-width="0.35" text-anchor="start" font-weight="bold" textLength="18.0" lengthAdjust="spacingAndGlyphs">加密桩号</text>
<line x1="1238" y1="230.5" x2="1256" y2="230.5" stroke="#ff00ff" stroke-width="1" />
<text x="1286" y="229" font-family="Liberation Sans, sans-serif" font-size="5" fill="#ff00ff" stroke="#ff00ff" stroke-width="0.35" text-anchor="start" font-weight="bold">J</text>
<text x="1297" y="229" font-family="Noto Sans CJK SC, sans-serif" font-size="5.4" fill="#ff00ff" stroke="#ff00ff" stroke-width="0.35" text-anchor="start" font-weight="bold" textLength="9.0" lengthAdjust="spacingAndGlyphs">阀室</text>
<line x1="1297" y1="230.5" x2="1306" y2="230.5" stroke="#ff00ff" stroke-width="1" />
<text x="1344" y="229" font-family="Liberation Sans, sans-serif" font-size="5" fill="#ff00ff" stroke="#ff00ff" stroke-width="0.35" text-anchor="start" font-weight="bold">Zg</text>
<text x="1355" y="229" font-family="Noto Sans CJK SC, sans-serif" font-size="5.4" fill="#ff00ff" stroke="#ff00ff" stroke-width="0.35" text-anchor="start" font-weight="bold" textLength="31.5" lengthAdjust="spacingAndGlyphs">弹性敷设转角桩</text>
<line x1="1355" y1="230.5" x2="1386.5" y2="230.5" stroke="#ff00ff" stroke-width="1" />
<text x="1227" y="238" font-family="Liberation Sans, sans-serif" font-size="5" fill="#ff00ff" stroke="#ff00ff" stroke-width="0.35" text-anchor="start" font-weight="bold">Zr</text>
<text x="1238" y="238" font-family="Noto Sans CJK SC, sans-serif" font-size="5.4" fill="#ff00ff" stroke="#ff00ff" stroke-width="0.35" text-anchor="start" font-weight="bold" textLength="27.0" lengthAdjust="spacingAndGlyphs">热煨弯头转角</text>
<line x1="1238" y1="239.5" x2="1265" y2="239.5" stroke="#ff00ff" stroke-width="1" />
<text x="1286" y="238" font-family="Liberation Sans, sans-serif" font-size="5" fill="#ff00ff" stroke="#ff00ff" stroke-width="0.35" text-anchor="start" font-weight="bold">Zl</text>
<text x="1297" y="238" font-family="Noto Sans CJK SC, sans-serif" font-size="5.4" fill="#ff00ff" stroke="#ff00ff" stroke-width="0.35" text-anchor="start" font-weight="bold" textLength="27.0" lengthAdjust="spacingAndGlyphs">冷弯弯头转角</text>
<line x1="1297" y1="239.5" x2="1324" y2="239.5" stroke="#ff00ff" stroke-width="1" />
<text x="1344" y="238" font-family="Liberation Sans, sans-serif" font-size="5" fill="#ff00ff" stroke="#ff00ff" stroke-width="0.35" text-anchor="start" font-weight="bold">Zw</text>
<text x="1355" y="238" font-family="Noto Sans CJK SC, sans-serif" font-size="5.4" fill="#ff00ff" stroke="#ff00ff" stroke-width="0.35" text-anchor="start" font-weight="bold" textLength="31.5" lengthAdjust="spacingAndGlyphs">纵向弯头转角桩</text>
<line x1="1355" y1="239.5" x2="1386.5" y2="239.5" stroke="#ff00ff" stroke-width="1" />
<text x="1227" y="247" font-family="Liberation Sans, sans-serif" font-size="5" fill="#ff00ff" stroke="#ff00ff" stroke-width="0.35" text-anchor="start" font-weight="bold">T</text>
<text x="1238" y="247" font-family="Noto Sans CJK SC, sans-serif" font-size="5.4" fill="#ff00ff" stroke="#ff00ff" stroke-width="0.35" text-anchor="start" font-weight="bold" textLength="13.5" lengthAdjust="spacingAndGlyphs">穿越桩</text>
<line x1="1238" y1="248.5" x2="1251.5" y2="248.5" stroke="#ff00ff" stroke-width="1" />
<text x="1286" y="247" font-family="Liberation Sans, sans-serif" font-size="5" fill="#ff00ff" stroke="#ff00ff" stroke-width="0.35" text-anchor="start" font-weight="bold">L</text>
<text x="1297" y="247" font-family="Noto Sans CJK SC, sans-serif" font-size="5.4" fill="#ff00ff" stroke="#ff00ff" stroke-width="0.35" text-anchor="start" font-weight="bold" textLength="9.0" lengthAdjust="spacingAndGlyphs">里程</text>
<line x1="1297" y1="248.5" x2="1306" y2="248.5" stroke="#ff00ff" stroke-width="1" />
<text x="1344" y="247" font-family="Liberation Sans, sans-serif" font-size="5" fill="#ff00ff" stroke="#ff00ff" stroke-width="0.35" text-anchor="start" font-weight="bold">B</text>
<text x="1355" y="247" font-family="Noto Sans CJK SC, sans-serif" font-size="5.4" fill="#ff00ff" stroke="#ff00ff" stroke-width="0.35" text-anchor="start" font-weight="bold" textLength="13.5" lengthAdjust="spacingAndGlyphs">标志桩</text>
<line x1="1355" y1="248.5" x2="1368.5" y2="248.5" stroke="#ff00ff" stroke-width="1" />
<text x="1215" y="261" font-family="Noto Sans CJK SC, sans-serif" font-size="6.6" fill="#ff00ff" stroke="#ff00ff" stroke-width="0.35" text-anchor="start" font-weight="bold">2、线路地貌图符号:</text>
<circle cx="1227.5" cy="272.5" r="5.300" fill="url(#hx)" stroke="#ff00ff" stroke-width="1"/>
<text x="1234" y="275" font-family="Noto Sans CJK SC, sans-serif" font-size="5.4" fill="#ff00ff" stroke="#ff00ff" stroke-width="0.35" text-anchor="start" font-weight="bold" textLength="18.8" lengthAdjust="spacingAndGlyphs">一级地区</text>
<line x1="1234" y1="276.5" x2="1252.8" y2="276.5" stroke="#ff00ff" stroke-width="1" />
<circle cx="1286" cy="272.5" r="5.300" fill="url(#hx)" stroke="#ff00ff" stroke-width="1"/>
<text x="1292.5" y="275" font-family="Noto Sans CJK SC, sans-serif" font-size="5.4" fill="#ff00ff" stroke="#ff00ff" stroke-width="0.35" text-anchor="start" font-weight="bold" textLength="18.8" lengthAdjust="spacingAndGlyphs">二级地区</text>
<line x1="1292.5" y1="276.5" x2="1311.3" y2="276.5" stroke="#ff00ff" stroke-width="1" />
<circle cx="1341.5" cy="272.5" r="5.300" fill="url(#hx)" stroke="#ff00ff" stroke-width="1"/>
<text x="1348" y="275" font-family="Noto Sans CJK SC, sans-serif" font-size="5.4" fill="#ff00ff" stroke="#ff00ff" stroke-width="0.35" text-anchor="start" font-weight="bold" textLength="18.8" lengthAdjust="spacingAndGlyphs">三级地区</text>
<line x1="1348" y1="276.5" x2="1366.8" y2="276.5" stroke="#ff00ff" stroke-width="1" />
<circle cx="1227.5" cy="285" r="5.300" fill="url(#hx)" stroke="#ff00ff" stroke-width="1"/>
<text x="1234" y="287.5" font-family="Noto Sans CJK SC, sans-serif" font-size="5.4" fill="#ff00ff" stroke="#ff00ff" stroke-width="0.35" text-anchor="start" font-weight="bold" textLength="18.8" lengthAdjust="spacingAndGlyphs">水工保护</text>
<line x1="1234" y1="289" x2="1252.8" y2="289" stroke="#ff00ff" stroke-width="1" />
<circle cx="1286" cy="285" r="5.300" fill="url(#hx)" stroke="#ff00ff" stroke-width="1"/>
<text x="1292.5" y="287.5" font-family="Noto Sans CJK SC, sans-serif" font-size="5.4" fill="#ff00ff" stroke="#ff00ff" stroke-width="0.35" text-anchor="start" font-weight="bold" textLength="18.8" lengthAdjust="spacingAndGlyphs">穿越公路</text>
<line x1="1292.5" y1="289" x2="1311.3" y2="289" stroke="#ff00ff" stroke-width="1" />
<circle cx="1341.5" cy="285" r="5.300" fill="url(#hx)" stroke="#ff00ff" stroke-width="1"/>
<text x="1348" y="287.5" font-family="Noto Sans CJK SC, sans-serif" font-size="5.4" fill="#ff00ff" stroke="#ff00ff" stroke-width="0.35" text-anchor="start" font-weight="bold" textLength="28.2" lengthAdjust="spacingAndGlyphs">穿越河流沟渠</text>
<line x1="1348" y1="289" x2="1376.2" y2="289" stroke="#ff00ff" stroke-width="1" />
<circle cx="1227.5" cy="298.3" r="5.300" fill="url(#hx)" stroke="#ff00ff" stroke-width="1"/>
<text x="1234" y="300.8" font-family="Noto Sans CJK SC, sans-serif" font-size="5.4" fill="#ff00ff" stroke="#ff00ff" stroke-width="0.35" text-anchor="start" font-weight="bold" textLength="28.2" lengthAdjust="spacingAndGlyphs">线路截断阀室</text>
<line x1="1234" y1="302.3" x2="1262.2" y2="302.3" stroke="#ff00ff" stroke-width="1" />
<circle cx="1286" cy="298.3" r="5.300" fill="url(#hx)" stroke="#ff00ff" stroke-width="1"/>
<text x="1292.5" y="300.8" font-family="Noto Sans CJK SC, sans-serif" font-size="5.4" fill="#ff00ff" stroke="#ff00ff" stroke-width="0.35" text-anchor="start" font-weight="bold" textLength="14.1" lengthAdjust="spacingAndGlyphs">标志桩</text>
<line x1="1292.5" y1="302.3" x2="1306.6" y2="302.3" stroke="#ff00ff" stroke-width="1" />
<circle cx="1341.5" cy="298.3" r="5.300" fill="url(#hx)" stroke="#ff00ff" stroke-width="1"/>
<text x="1348" y="300.8" font-family="Noto Sans CJK SC, sans-serif" font-size="5.4" fill="#ff00ff" stroke="#ff00ff" stroke-width="0.35" text-anchor="start" font-weight="bold" textLength="32.9" lengthAdjust="spacingAndGlyphs">转角桩里程标志</text>
<line x1="1348" y1="302.3" x2="1380.9" y2="302.3" stroke="#ff00ff" stroke-width="1" />
<circle cx="1227.5" cy="324.5" r="5.300" fill="url(#hx)" stroke="#ff00ff" stroke-width="1"/>
<text x="1234" y="327" font-family="Noto Sans CJK SC, sans-serif" font-size="5.4" fill="#ff00ff" stroke="#ff00ff" stroke-width="0.35" text-anchor="start" font-weight="bold" textLength="14.1" lengthAdjust="spacingAndGlyphs">里程桩</text>
<line x1="1234" y1="328.5" x2="1248.1" y2="328.5" stroke="#ff00ff" stroke-width="1" />
<circle cx="1286" cy="324.5" r="5.300" fill="url(#hx)" stroke="#ff00ff" stroke-width="1"/>
<text x="1292.5" y="327" font-family="Noto Sans CJK SC, sans-serif" font-size="5.4" fill="#ff00ff" stroke="#ff00ff" stroke-width="0.35" text-anchor="start" font-weight="bold" textLength="14.1" lengthAdjust="spacingAndGlyphs">转角桩</text>
<line x1="1292.5" y1="328.5" x2="1306.6" y2="328.5" stroke="#ff00ff" stroke-width="1" />
<circle cx="1341.5" cy="324.5" r="5.300" fill="url(#hx)" stroke="#ff00ff" stroke-width="1"/>
<text x="1348" y="327" font-family="Noto Sans CJK SC, sans-serif" font-size="5.4" fill="#ff00ff" stroke="#ff00ff" stroke-width="0.35" text-anchor="start" font-weight="bold" textLength="14.1" lengthAdjust="spacingAndGlyphs">标志桩</text>
<line x1="1348" y1="328.5" x2="1362.1" y2="328.5" stroke="#ff00ff" stroke-width="1" />
<circle cx="1227.5" cy="338.5" r="5.300" fill="url(#hx)" stroke="#ff00ff" stroke-width="1"/>
<text x="1234" y="341" font-family="Noto Sans CJK SC, sans-serif" font-size="5.4" fill="#ff00ff" stroke="#ff00ff" stroke-width="0.35" text-anchor="start" font-weight="bold" textLength="14.1" lengthAdjust="spacingAndGlyphs">交叉桩</text>
<line x1="1234" y1="342.5" x2="1248.1" y2="342.5" stroke="#ff00ff" stroke-width="1" />
<circle cx="1286" cy="338.5" r="5.300" fill="url(#hx)" stroke="#ff00ff" stroke-width="1"/>
<text x="1292.5" y="341" font-family="Noto Sans CJK SC, sans-serif" font-size="5.4" fill="#ff00ff" stroke="#ff00ff" stroke-width="0.35" text-anchor="start" font-weight="bold" textLength="14.1" lengthAdjust="spacingAndGlyphs">加密桩</text>
<line x1="1292.5" y1="342.5" x2="1306.6" y2="342.5" stroke="#ff00ff" stroke-width="1" />
<circle cx="1341.5" cy="338.5" r="5.300" fill="url(#hx)" stroke="#ff00ff" stroke-width="1"/>
<text x="1348" y="341" font-family="Noto Sans CJK SC, sans-serif" font-size="5.4" fill="#ff00ff" stroke="#ff00ff" stroke-width="0.35" text-anchor="start" font-weight="bold" textLength="14.1" lengthAdjust="spacingAndGlyphs">警示牌</text>
<line x1="1348" y1="342.5" x2="1362.1" y2="342.5" stroke="#ff00ff" stroke-width="1" />
<circle cx="1227.5" cy="353" r="5.300" fill="url(#hx)" stroke="#ff00ff" stroke-width="1"/>
<text x="1234" y="355.5" font-family="Noto Sans CJK SC, sans-serif" font-size="5.4" fill="#ff00ff" stroke="#ff00ff" stroke-width="0.35" text-anchor="start" font-weight="bold" textLength="14.1" lengthAdjust="spacingAndGlyphs">阀室桩</text>
<line x1="1234" y1="357" x2="1248.1" y2="357" stroke="#ff00ff" stroke-width="1" />
<circle cx="1286" cy="353" r="5.300" fill="url(#hx)" stroke="#ff00ff" stroke-width="1"/>
<text x="1292.5" y="355.5" font-family="Noto Sans CJK SC, sans-serif" font-size="5.4" fill="#ff00ff" stroke="#ff00ff" stroke-width="0.35" text-anchor="start" font-weight="bold" textLength="14.1" lengthAdjust="spacingAndGlyphs">穿越桩</text>
<line x1="1292.5" y1="357" x2="1306.6" y2="357" stroke="#ff00ff" stroke-width="1" />
<circle cx="1341.5" cy="353" r="5.300" fill="url(#hx)" stroke="#ff00ff" stroke-width="1"/>
<text x="1348" y="355.5" font-family="Noto Sans CJK SC, sans-serif" font-size="5.4" fill="#ff00ff" stroke="#ff00ff" stroke-width="0.35" text-anchor="start" font-weight="bold" textLength="14.1" lengthAdjust="spacingAndGlyphs">分界桩</text>
<line x1="1348" y1="357" x2="1362.1" y2="357" stroke="#ff00ff" stroke-width="1" />
<text x="1215" y="316" font-family="Noto Sans CJK SC, sans-serif" font-size="6.6" fill="#ff00ff" stroke="#ff00ff" stroke-width="0.35" text-anchor="start" font-weight="bold">3、线路三桩及警示牌符号:</text>
<g id="map">
<path d="M477.8 353.2 L478.4 352.8 L479.5 351.8 L481.1 350.5 L483.4 348.7 L485.5 346.8 L487.5 344.8 L489.4 342.6 L491.2 340.4 L492.5 338.0 L493.4 335.6 L493.9 333.0 L493.9 330.4 L493.7 327.6 L493.2 324.7 L492.5 321.8 L491.7 318.6 L490.9 315.5 L490.4 312.4 L490.0 309.3 L489.7 306.1 L490.0 303.1 L490.6 300.2 L491.7 297.4 L493.3 294.7 L495.2 292.0 L497.5 289.4 L500.2 286.7 L503.3 284.0 L506.4 281.4 L509.3 279.0 L512.1 276.6 L514.8 274.4 L517.5 272.5 L520.2 271.1 L522.9 270.0 L525.6 269.4 L527.6 268.9 L528.9 268.6 L529.6 268.4" fill="none" stroke="#ffff00" stroke-width="1" />
<path d="M477.8 397.9 L478.7 397.4 L480.5 396.5 L483.1 395.2 L486.7 393.4 L489.8 391.5 L492.5 389.5 L494.7 387.4 L496.5 385.1 L498.0 382.7 L499.1 380.0 L499.9 377.1 L500.3 374.0 L501.0 371.2 L501.9 368.7 L503.0 366.6 L504.4 364.7 L505.7 362.7 L507.1 360.5 L508.4 358.0 L509.7 355.4 L510.7 353.4 L511.4 352.1 L511.7 351.4" fill="none" stroke="#ffff00" stroke-width="1" />
<path d="M479.6 408.6 L480.7 408.2 L482.9 407.2 L486.3 405.9 L490.7 404.1 L494.8 401.8 L498.6 399.1 L502.1 396.0 L505.3 392.4 L508.1 388.8 L510.5 385.3 L512.6 381.7 L514.4 378.2 L516.0 374.6 L517.6 371.1 L519.0 367.5 L520.4 364.0 L521.8 360.8 L523.4 358.1 L525.1 355.9 L526.9 354.1 L529.1 352.4 L531.8 350.8 L535.0 349.4 L538.5 348.0 L541.9 346.9 L545.0 346.0 L547.9 345.4 L550.6 344.9 L552.6 344.6 L553.9 344.4 L554.6 344.3" fill="none" stroke="#ffff00" stroke-width="1" />
<path d="M495.6 410.4 L496.6 409.7 L498.6 408.4 L501.6 406.4 L505.7 403.6 L509.2 400.6 L512.4 397.3 L515.0 393.6 L517.3 389.6 L519.4 385.6 L521.4 381.6 L523.3 377.6 L525.1 373.5 L527.0 369.7 L529.0 366.2 L531.1 362.8 L533.4 359.7 L535.9 357.0 L538.8 354.8 L542.1 353.0 L545.6 351.6 L549.2 350.4 L552.8 349.3 L556.4 348.2 L559.9 347.3 L563.3 346.1 L566.4 344.5 L569.3 342.6 L572.0 340.4 L574.4 337.8 L576.6 334.9 L578.6 331.7 L580.4 328.2 L582.1 324.4 L583.9 320.4 L585.7 316.2 L587.6 311.7 L589.4 307.4 L591.2 303.1 L593.0 299.0 L594.7 295.0 L596.3 291.2 L597.6 287.6 L598.8 284.3 L599.7 281.1 L600.3 278.8 L600.8 277.2 L601.0 276.4" fill="none" stroke="#ffff00" stroke-width="1" />
<path d="M504.6 410.4 L505.6 409.6 L507.6 408.1 L510.6 405.7 L514.6 402.6 L518.2 399.2 L521.3 395.7 L524.0 391.9 L526.2 387.8 L528.4 383.9 L530.4 380.1 L532.3 376.4 L534.0 372.9 L536.0 369.5 L538.3 366.4 L540.7 363.5 L543.4 360.8 L546.3 358.6 L549.4 356.8 L552.8 355.4 L556.3 354.6 L559.7 353.5 L562.8 352.4 L565.7 351.2 L568.4 349.9 L571.1 348.3 L573.7 346.6 L576.4 344.6 L579.0 342.3 L581.6 339.7 L584.0 336.5 L586.4 333.0 L588.6 328.9 L590.9 324.8 L593.1 320.5 L595.4 316.2 L597.6 311.7 L599.8 307.4 L601.8 303.1 L603.6 299.0 L605.4 295.0 L606.7 292.0 L607.6 290.0 L608.0 289.0" fill="none" stroke="#ffff00" stroke-width="1" />
<path d="M518.9 410.4 L519.9 409.2 L521.9 406.7 L524.9 403.0 L529.0 398.1 L532.8 393.6 L536.4 389.5 L539.9 385.9 L543.1 382.8 L546.3 379.8 L549.4 376.9 L552.5 374.2 L555.5 371.8 L557.8 369.9 L559.2 368.6 L560.0 368.0" fill="none" stroke="#ffff00" stroke-width="1" />
<path d="M601.0 330.0 L601.7 329.0 L603.0 327.0 L605.0 324.0 L607.7 320.0 L610.1 316.2 L612.4 312.6 L614.4 309.3 L616.2 306.1 L618.2 303.1 L620.5 300.2 L622.9 297.4 L625.6 294.7 L627.6 292.7 L628.9 291.4 L629.6 290.7" fill="none" stroke="#ffff00" stroke-width="1" />
<path d="M599.2 276.4 L600.0 276.6 L601.5 277.1 L603.9 277.8 L607.0 278.6 L610.0 279.2 L612.9 279.4 L615.7 279.3 L618.4 278.9 L621.1 278.3 L623.7 277.6 L626.4 276.8 L629.0 275.9 L631.0 275.3 L632.3 274.8 L633.0 274.6" fill="none" stroke="#ffff00" stroke-width="1" />
<path d="M479.6 283.6 L480.5 282.5 L482.3 280.2 L485.0 276.9 L488.5 272.4 L492.3 268.2 L496.3 264.1 L500.6 260.3 L505.0 256.8 L509.5 253.4 L513.9 250.3 L518.4 247.4 L522.9 244.7 L527.2 242.5 L531.4 240.9 L535.4 239.7 L539.2 239.0 L542.1 238.5 L544.0 238.2 L545.0 238.0" fill="none" stroke="#ffff00" stroke-width="1" />
<path d="M486.7 289.0 L487.7 287.9 L489.7 285.6 L492.7 282.2 L496.8 277.8 L500.9 273.6 L505.1 269.8 L509.5 266.4 L513.9 263.2 L518.2 260.4 L522.2 257.7 L526.0 255.2 L529.6 253.0 L533.3 251.2 L537.1 249.8 L541.0 249.0 L545.0 248.5 L548.9 248.5 L552.8 248.8 L556.6 249.4 L560.4 250.5 L563.2 251.2 L565.1 251.7 L566.0 252.0" fill="none" stroke="#ffff00" stroke-width="1" />
<path d="M590.0 232.0 L590.9 231.4 L592.6 230.1 L595.2 228.2 L598.8 225.8 L602.2 224.0 L605.8 223.0 L609.2 222.8 L612.8 223.2 L616.0 224.4 L619.0 226.1 L621.8 228.5 L624.2 231.5 L626.5 234.8 L628.5 238.2 L630.2 242.0 L631.8 246.0 L633.2 249.9 L634.8 253.6 L636.2 257.2 L637.8 260.8 L639.4 264.0 L641.1 267.0 L643.0 269.8 L645.0 272.2 L646.5 274.1 L647.5 275.4 L648.0 276.0" fill="none" stroke="#ffff00" stroke-width="1" />
<path d="M560.0 262.0 L561.2 262.4 L563.8 263.1 L567.5 264.2 L572.5 265.8 L577.5 267.0 L582.5 268.0 L587.5 268.8 L592.5 269.2 L597.1 269.4 L601.4 269.1 L605.2 268.5 L608.8 267.5 L611.4 266.8 L613.1 266.2 L614.0 266.0" fill="none" stroke="#ffff00" stroke-width="1" />
<path d="M533.0 160.0 L533.4 161.2 L534.3 163.8 L535.6 167.5 L537.4 172.5 L539.3 177.2 L541.4 181.8 L543.8 186.0 L546.2 190.0 L548.9 193.6 L551.6 196.9 L554.5 199.8 L557.5 202.2 L559.8 204.1 L561.2 205.4 L562.0 206.0" fill="none" stroke="#ffff00" stroke-width="1" />
<path d="M600.0 256.0 L601.0 255.8 L603.0 255.2 L606.0 254.5 L610.0 253.5 L613.6 253.4 L616.9 254.1 L619.8 255.8 L622.2 258.2 L624.4 261.0 L626.1 264.0 L627.5 267.2 L628.5 270.8 L629.9 273.9 L631.6 276.6 L633.8 279.0 L636.2 281.0 L638.1 282.5 L639.4 283.5 L640.0 284.0" fill="none" stroke="#ffff00" stroke-width="1" />
<path d="M482.0 330.0 L482.1 329.2 L482.4 327.8 L482.8 325.5 L483.2 322.5 L483.4 319.4 L483.3 316.1 L482.9 312.8 L482.1 309.2 L481.9 305.9 L482.1 302.6 L482.9 299.5 L484.1 296.5 L485.1 294.2 L485.7 292.8 L486.0 292.0" fill="none" stroke="#ffff00" stroke-width="1" />
<path d="M545.0 300.0 L545.7 299.8 L547.1 299.2 L549.1 298.5 L551.9 297.5 L554.6 297.0 L557.2 297.0 L559.8 297.5 L562.2 298.5 L564.1 299.2 L565.4 299.8 L566.0 300.0" fill="none" stroke="#ffff00" stroke-width="1" />
<path d="M520.0 300.0 L520.6 299.8 L521.9 299.2 L523.8 298.5 L526.2 297.5 L528.8 296.9 L531.2 296.6 L533.8 296.8 L536.2 297.2 L538.1 297.6 L539.4 297.9 L540.0 298.0" fill="none" stroke="#ffff00" stroke-width="1" />
<path d="M523.0 222.0 L524.1 221.6 L526.2 220.9 L529.4 219.8 L533.6 218.2 L537.8 217.0 L541.9 216.0 L546.0 215.2 L550.0 214.8 L553.6 214.9 L556.9 215.6 L559.8 217.0 L562.2 219.0 L563.8 221.1 L564.2 223.4 L563.8 225.8 L562.2 228.2 L560.4 230.5 L558.1 232.5 L555.5 234.2 L552.5 235.8 L549.5 237.4 L546.5 239.1 L543.5 241.0 L540.5 243.0 L538.9 244.9 L538.6 246.6 L539.8 248.2 L542.2 249.8 L545.1 250.8 L548.4 251.2 L552.0 251.2 L556.0 250.8 L560.1 250.5 L564.4 250.5 L568.8 250.8 L573.2 251.2 L577.8 251.9 L582.2 252.6 L586.8 253.5 L591.2 254.5 L594.6 255.2 L596.9 255.8 L598.0 256.0" fill="none" stroke="#00ffff" stroke-width="1" />
<path d="M530.0 230.0 L530.9 229.6 L532.8 228.9 L535.6 227.8 L539.4 226.2 L542.6 225.5 L545.4 225.5 L547.6 226.2 L549.4 227.8 L550.2 229.5 L550.2 231.5 L549.4 233.8 L547.6 236.2 L547.0 238.5 L547.5 240.5 L549.1 242.2 L551.9 243.8 L555.1 244.8 L558.9 245.2 L563.1 245.2 L567.9 244.8 L572.5 244.5 L577.0 244.5 L581.4 244.8 L585.6 245.2 L589.7 245.9 L593.6 246.6 L597.2 247.5 L600.8 248.5 L603.4 249.2 L605.1 249.8 L606.0 250.0" fill="none" stroke="#00ffff" stroke-width="1" />
<path d="M540.0 250.0 L541.0 250.4 L543.0 251.1 L546.0 252.2 L550.0 253.8 L554.2 254.9 L558.8 255.6 L563.5 256.0 L568.5 256.0 L573.4 256.1 L578.1 256.4 L582.8 256.8 L587.2 257.2 L591.6 257.9 L595.9 258.6 L600.0 259.5 L604.0 260.5 L607.9 261.8 L611.6 263.2 L615.2 265.0 L618.8 267.0 L622.1 269.1 L625.4 271.4 L628.5 273.8 L631.5 276.2 L633.8 278.1 L635.2 279.4 L636.0 280.0" fill="none" stroke="#00ffff" stroke-width="1" />
<path d="M566.0 224.0 L566.9 224.2 L568.6 224.8 L571.2 225.5 L574.8 226.5 L578.1 227.8 L581.4 229.2 L584.5 231.0 L587.5 233.0 L590.5 234.6 L593.5 235.9 L596.5 236.8 L599.5 237.2 L601.5 238.1 L602.5 239.4 L602.5 241.0 L601.5 243.0 L600.8 244.5 L600.2 245.5 L600.0 246.0" fill="none" stroke="#00ffff" stroke-width="1" />
<path d="M628.0 238.0 L628.9 238.0 L630.6 238.0 L633.2 238.0 L636.8 238.0 L639.4 238.0 L641.1 238.0 L642.0 238.0" fill="none" stroke="#00ffff" stroke-width="1" />
<path d="M634.5 232.0 L634.5 232.8 L634.5 234.2 L634.5 236.5 L634.5 239.5 L634.5 241.8 L634.5 243.2 L634.5 244.0" fill="none" stroke="#00ffff" stroke-width="1" />
<path d="M477.8 374.6 L478.5 374.4 L479.8 373.9 L481.8 373.2 L484.5 372.3 L487.2 371.3 L489.8 370.2 L492.5 369.0 L495.2 367.7 L497.6 365.9 L499.9 363.7 L501.9 361.0 L503.7 357.9 L505.1 354.8 L506.2 351.6 L507.0 348.5 L507.4 345.4 L507.7 343.0 L507.9 341.5 L508.0 340.7" fill="none" stroke="#00ffff" stroke-width="1" />
<path d="M477.8 401.4 L478.8 401.0 L480.8 400.1 L483.8 398.7 L487.9 397.0 L491.5 394.9 L494.9 392.4 L497.9 389.6 L500.6 386.5 L502.8 383.2 L504.6 379.9 L505.9 376.4 L506.7 372.9 L507.8 369.3 L509.2 365.7 L510.7 362.1 L512.6 358.6 L514.5 355.4 L516.5 352.7 L518.6 350.5 L520.9 348.7 L522.5 347.4 L523.6 346.4 L524.2 346.0" fill="none" stroke="#00ffff" stroke-width="1" />
<path d="M590.3 253.2 L591.0 253.7 L592.3 254.8 L594.3 256.5 L597.0 258.7 L598.9 261.2 L600.0 264.2 L600.3 267.4 L599.9 271.0 L599.3 274.6 L598.6 278.2 L597.9 281.8 L597.0 285.3 L595.9 288.9 L594.8 292.5 L593.6 296.1 L592.3 299.6 L590.8 303.1 L589.3 306.4 L587.6 309.7 L585.7 312.8 L584.4 315.2 L583.5 316.7 L583.0 317.5" fill="none" stroke="#00ffff" stroke-width="1" />
<path d="M586.0 262.0 L586.2 263.1 L586.8 265.4 L587.5 268.8 L588.5 273.2 L588.8 277.6 L588.2 281.9 L587.0 286.0 L585.0 290.0 L583.0 293.9 L581.0 297.6 L579.0 301.2 L577.0 304.8 L575.2 308.1 L573.8 311.4 L572.5 314.5 L571.5 317.5 L570.8 319.8 L570.2 321.2 L570.0 322.0" fill="none" stroke="#00ffff" stroke-width="1" />
<path d="M596.0 262.0 L596.1 263.2 L596.4 265.8 L596.8 269.5 L597.2 274.5 L597.2 279.2 L596.8 283.8 L595.8 288.0 L594.2 292.0 L592.6 296.0 L590.9 300.0 L589.0 304.0 L587.0 308.0 L585.5 311.0 L584.5 313.0 L584.0 314.0" fill="none" stroke="#00ffff" stroke-width="1" />
<path d="M697.8 240.9L703.4 237.3L710.9 237.3M981.2 207.9L976.6 209.7L975.7 215.7M1005.4 218.7L1003.8 219.2L1005.1 219.4M977.2 226.8L982.5 229.1L983.2 229.6M986.7 228.9L983.7 228.9L983.2 229.6M1004.4 230.7L1005.9 233.9L1006.8 237.7M1027.8 233.0L1027.5 237.1L1024.3 240.0M1006.8 237.7L1017.6 237.7L1024.3 240.0M1050.4 241.4L1052.2 243.7L1049.8 243.1M1049.8 243.1L1037.1 248.2L1029.0 248.7M1024.3 240.0L1025.0 245.6L1029.0 248.7M1075.7 251.1L1070.0 259.4L1063.3 263.1M1049.8 243.1L1052.6 253.3L1054.4 260.0M1054.4 260.0L1060.6 261.8L1063.3 263.1M838.7 345.1L845.5 349.2L854.9 356.5M827.4 357.7L834.5 352.2L838.7 345.1M716.6 349.5L713.7 357.9L712.9 368.3M716.6 349.5L706.6 345.9L700.5 338.2M700.5 338.2L695.1 343.1L691.5 344.8M761.5 212.9L761.1 222.9L760.0 230.2M760.0 230.2L756.9 231.6L758.6 231.5M854.9 356.5L859.8 350.6L862.4 347.3M862.4 347.3L869.1 347.6L878.8 350.3M878.8 350.3L881.2 353.1L880.3 358.8M962.1 200.8L961.8 206.6L960.7 212.6M967.0 219.9L964.5 216.7L960.7 212.6M1041.1 269.8L1049.6 265.6L1054.4 260.0M1041.1 269.8L1035.2 268.6L1025.6 266.4M1025.6 266.4L1024.4 263.8L1024.1 264.9M1041.1 269.8L1046.4 280.7L1047.1 289.3M1063.3 263.1L1062.6 266.9L1066.2 267.9M1066.2 267.9L1063.3 276.5L1062.3 286.9M1066.2 267.9L1076.1 271.9L1081.5 272.5M1062.3 286.9L1071.3 292.4L1075.8 297.0M1082.0 289.4L1083.4 281.6L1081.5 272.5M1089.6 267.2L1086.5 270.0L1081.5 272.5M1111.7 266.0L1106.6 270.4L1104.6 278.7M1089.6 267.2L1098.6 274.6L1104.6 278.7M687.9 256.1L686.3 263.7L689.1 275.7M687.9 256.1L682.7 256.2L676.1 252.8M676.1 252.8L670.4 258.7L665.5 263.3M689.1 275.7L686.1 276.6L687.7 276.3M687.7 276.3L677.5 272.8L667.3 267.8M665.5 263.3L664.5 266.8L667.3 267.8M673.7 239.3L674.8 247.9L676.1 252.8M697.8 240.9L697.4 247.1L696.4 249.4M696.4 249.4L691.5 252.7L687.9 256.1M656.9 259.5L659.3 259.3L665.5 263.3M813.9 331.5L817.3 329.3L823.8 327.0M812.4 356.2L812.7 343.1L813.9 331.5M838.7 345.1L836.3 337.8L838.7 334.4M807.0 217.6L806.6 217.0L807.1 212.0M889.1 199.2L891.7 200.5L889.7 201.9M889.7 201.9L883.8 212.7L877.2 218.8M877.2 218.8L869.8 213.7L863.3 205.0M796.7 241.0L790.3 240.4L785.5 241.5M796.7 241.0L799.3 235.2L802.8 233.8M785.5 241.5L783.2 232.1L778.6 225.8M801.9 223.9L800.3 228.5L802.8 233.8M801.9 223.9L790.3 222.0L783.2 219.3M783.2 219.3L780.6 223.5L778.6 225.8M783.3 260.0L791.8 264.6L799.9 264.1M799.9 264.1L803.1 263.3L802.4 258.5M802.4 258.5L799.7 247.9L796.7 241.0M778.3 249.9L779.8 243.5L785.5 241.5M817.3 240.0L820.2 246.2L820.8 250.3M802.4 258.5L810.1 252.5L820.8 250.3M760.0 230.2L768.2 229.2L778.6 225.8M758.6 231.5L757.1 232.8L757.4 236.6M761.7 247.9L761.5 244.3L757.4 236.6M778.3 249.9L771.1 249.8L761.7 247.9M817.3 240.0L820.0 230.5L827.7 226.1M807.0 217.6L803.4 222.1L801.9 223.9M781.7 212.0L781.0 218.1L783.2 219.3M899.0 358.0L901.9 351.8L901.4 349.6M885.7 340.1L892.4 345.1L901.4 349.6M908.9 202.2L911.5 199.6L913.2 197.7M960.7 212.6L952.3 211.5L945.1 212.0M945.1 212.0L941.5 204.5L938.3 198.9M889.7 201.9L892.8 201.3L897.1 205.5M1010.3 263.6L1005.8 268.9L1001.6 276.2M1001.6 276.2L991.9 276.2L979.7 276.5M976.6 269.1L980.3 270.2L979.7 276.5M976.6 269.1L976.7 262.8L980.9 256.0M980.9 256.0L983.4 256.0L984.9 253.2M1006.8 237.7L1006.6 246.0L1001.8 252.4M1024.1 264.9L1015.4 262.7L1010.3 263.6M983.2 229.6L982.6 242.5L984.9 253.2M1022.6 289.1L1019.4 291.8L1011.3 294.8M1022.6 289.1L1023.3 279.8L1025.6 266.4M965.8 245.7L969.6 234.5L968.5 225.3M970.0 223.5L967.9 224.2L968.5 225.3M979.7 276.5L978.3 281.2L977.5 285.2M1006.7 291.8L1001.6 293.3L994.4 295.7M1022.6 289.1L1030.0 292.7L1038.2 296.2M1047.1 289.3L1047.8 291.5L1043.2 295.1M1038.2 296.2L1039.0 297.1L1043.2 295.1M1130.1 275.6L1128.1 279.6L1126.2 286.3M1104.6 278.7L1103.6 282.5L1105.3 282.6M1123.3 287.5L1116.5 286.8L1105.3 282.6M1082.0 289.4L1090.4 288.7L1103.0 285.6M1105.3 282.6L1106.8 284.8L1103.0 285.6M761.7 247.9L757.9 253.6L754.5 263.7M754.5 263.7L761.3 267.9L771.2 277.3M689.1 275.7L692.6 277.4L696.7 277.1M710.1 262.7L711.0 266.5L709.5 271.4M696.4 249.4L702.2 255.4L710.1 262.7M813.9 331.5L806.6 330.2L801.1 325.8M785.8 334.3L785.2 330.2L787.6 331.1M734.7 257.1L734.3 247.5L736.3 240.7M734.7 257.1L725.2 253.9L718.5 254.1M716.3 240.2L725.0 239.8L730.5 235.5M716.3 240.2L716.8 246.9L718.5 254.1M730.5 235.5L732.3 238.1L736.3 240.7M731.5 217.8L730.4 229.2L730.5 235.5M710.1 262.7L711.8 258.8L718.5 254.1M757.4 236.6L748.9 239.4L736.3 240.7M667.3 267.8L663.2 274.9L660.9 284.4M687.7 276.3L683.1 283.8L677.9 292.2M677.9 292.2L670.7 287.8L660.9 284.4M799.9 264.1L799.0 262.8L800.0 264.5M800.0 264.5L809.4 270.5L819.2 275.9M862.4 347.3L863.1 337.9L859.2 329.6M838.7 334.4L845.7 330.3L850.5 328.2M859.2 329.6L855.4 327.4L850.5 328.2M823.8 327.0L826.7 316.0L827.1 307.4M850.5 328.2L845.4 317.9L844.4 305.6M942.2 360.8L949.2 354.7L951.5 346.9M969.0 362.7L964.4 356.8L961.9 349.0M951.5 346.9L958.5 348.3L961.9 349.0M984.1 358.1L983.6 356.8L986.5 352.4M983.5 341.5L976.8 342.5L972.7 339.4M989.3 333.7L984.1 322.3L982.5 314.8M973.9 314.6L972.3 323.8L967.0 329.8M972.7 339.4L971.1 334.0L967.0 329.8M1075.8 297.0L1074.5 300.3L1076.1 299.8M1043.2 295.1L1051.3 304.9L1054.9 316.1M1076.1 299.8L1065.8 307.3L1054.9 316.1M1103.0 285.6L1104.4 297.8L1102.2 308.5M718.5 348.5L727.9 347.9L735.4 351.2M738.6 362.4L738.3 354.4L735.4 351.2M718.5 348.5L723.5 341.6L726.9 330.6M702.0 323.7L702.2 322.2L705.9 318.5M705.9 318.5L715.8 324.0L726.9 330.6M677.4 322.2L679.1 314.2L679.0 301.7M679.0 301.7L670.6 302.7L657.1 306.5M679.5 300.9L680.9 298.7L679.0 301.7M660.9 284.4L657.1 285.2L651.5 288.3M826.0 306.2L815.2 308.3L801.2 305.2M826.0 306.2L826.5 294.8L823.4 286.1M823.4 286.1L820.4 282.7L820.3 283.4M820.3 283.4L807.1 288.4L798.8 292.2M798.8 292.2L798.3 298.3L799.2 302.5M827.1 307.4L828.4 307.2L826.0 306.2M801.1 325.8L799.9 316.4L801.2 305.2M819.2 275.9L819.2 282.1L820.3 283.4M792.1 285.0L792.8 287.1L798.8 292.2M800.0 264.5L796.5 276.0L792.1 285.0M885.7 340.1L887.6 336.1L885.3 330.7M859.2 329.6L863.1 326.3L864.6 326.5M876.7 288.4L874.6 288.8L875.1 287.2M876.7 288.4L879.5 297.7L877.8 303.2M875.1 287.2L864.1 286.0L851.8 288.1M866.9 310.3L856.7 305.0L849.6 300.2M851.8 288.1L851.5 295.6L849.6 300.2M891.5 313.0L890.7 321.3L888.4 327.3M864.6 326.5L863.6 319.5L866.9 310.3M891.5 313.0L887.0 308.1L877.8 303.2M844.4 305.6L847.5 305.2L849.6 300.2M848.0 282.2L835.8 282.7L823.4 286.1M875.1 287.2L876.1 280.1L873.7 268.1M898.5 265.5L894.6 260.9L894.9 261.1M899.2 276.9L900.4 272.4L898.5 265.5M894.6 284.1L897.9 281.6L899.2 276.9M894.6 284.1L886.1 288.5L876.7 288.4M873.7 268.1L883.8 264.8L894.9 261.1M848.0 282.2L848.3 283.7L848.1 280.2M868.0 263.8L862.0 261.7L860.9 264.3M860.9 264.3L855.8 270.1L848.1 280.2M838.8 266.5L843.3 272.6L848.1 280.2M888.4 327.3L899.4 329.0L912.0 333.3M901.4 349.6L909.7 346.8L914.9 344.0M912.0 333.3L912.8 338.1L914.9 344.0M921.6 348.4L916.1 346.6L914.9 344.0M894.6 284.1L901.6 292.0L903.5 303.0M891.5 313.0L894.5 312.6L902.4 307.0M903.5 303.0L904.9 303.4L902.4 307.0M912.0 333.3L915.4 324.5L918.1 319.3M902.4 307.0L910.9 311.0L918.1 319.3M932.8 255.6L941.8 266.9L946.3 273.0M932.8 255.6L942.3 253.0L947.6 246.8M955.0 250.0L951.6 247.5L947.6 246.8M958.3 267.1L953.7 271.9L949.9 273.4M949.9 273.4L947.0 270.9L946.3 273.0M922.0 244.4L924.8 249.3L927.4 255.0M946.6 234.0L944.5 240.5L947.6 246.8M927.4 255.0L928.0 253.8L932.8 255.6M976.6 269.1L970.0 270.1L958.3 267.1M1103.8 411.0L1100.9 404.2L1095.3 397.1M1079.9 411.0L1080.4 401.3L1080.7 396.3M1080.7 396.3L1087.4 396.4L1095.3 397.1M1038.2 296.2L1034.0 307.1L1027.0 313.4M1011.3 294.8L1014.1 302.8L1012.4 308.2M1027.0 313.4L1019.7 309.0L1012.4 308.2M991.4 311.6L1000.3 310.7L1006.3 314.4M1006.3 314.4L1010.9 313.6L1012.4 308.2M989.3 333.7L997.5 333.3L1006.9 332.0M1006.3 314.4L1004.4 322.9L1006.9 332.0M986.5 352.4L996.6 354.0L1006.9 352.7M1006.9 352.7L1006.9 343.7L1010.1 334.8M1006.9 332.0L1006.1 336.0L1010.1 334.8M1123.7 327.3L1126.1 321.6L1123.9 311.2M1123.7 327.3L1131.1 325.2L1140.5 327.6M1123.9 311.2L1133.3 308.4L1145.3 306.5M1126.2 286.3L1138.8 294.0L1147.2 298.4M1119.0 306.9L1121.5 311.1L1123.9 311.2M743.9 287.7L734.3 284.4L722.6 279.9M737.6 261.3L746.4 264.0L751.1 264.8M737.6 261.3L731.3 268.5L722.5 279.6M754.5 263.7L754.8 264.3L751.1 264.8M734.7 257.1L734.4 257.5L737.6 261.3M709.5 271.4L715.5 278.0L722.5 279.6M787.6 331.1L779.7 322.7L775.2 311.5M799.2 302.5L789.8 304.5L775.5 309.9M775.2 311.5L777.2 311.3L775.5 309.9M743.3 341.4L746.7 341.6L755.0 341.6M743.3 341.4L736.4 334.3L732.6 329.0M758.0 323.2L760.6 328.0L759.7 335.6M759.7 335.6L754.8 338.0L755.0 341.6M750.0 317.0L743.0 319.8L737.9 318.8M735.4 351.2L737.0 344.3L743.3 341.4M760.7 364.8L759.8 354.4L755.0 341.6M726.9 330.6L732.3 328.2L732.6 329.0M779.9 337.7L769.6 339.2L759.7 335.6M775.2 311.5L766.3 318.6L758.0 323.2M719.8 291.1L713.7 298.6L702.9 301.4M706.0 317.7L717.9 312.2L729.9 307.2M706.0 317.7L702.5 310.0L701.5 304.6M722.6 279.9L720.7 283.2L719.8 291.1M746.3 292.7L745.9 287.6L743.9 287.7M746.3 292.7L738.1 298.0L730.2 305.1M696.7 277.1L697.3 290.5L702.9 301.4M705.9 318.5L703.8 318.8L706.0 317.7M737.9 318.8L731.5 313.7L729.9 307.2M679.5 300.9L690.9 304.3L701.5 304.6M922.5 261.2L926.1 256.0L927.4 255.0M898.5 265.5L910.7 262.1L922.5 261.2M922.0 244.4L912.4 240.7L902.2 240.1M902.2 240.1L900.3 243.4L893.8 250.4M905.3 220.7L902.8 225.8L900.2 227.0M902.2 240.1L900.0 231.8L900.2 227.0M900.2 227.0L889.4 223.1L877.6 221.4M949.8 319.2L951.5 323.5L952.9 329.9M949.8 319.2L942.2 318.3L930.7 314.9M930.7 314.9L929.0 313.4L929.4 316.3M929.4 316.3L932.8 325.7L935.2 336.0M948.4 338.1L950.1 333.3L952.9 329.9M967.0 329.8L959.4 329.5L952.9 329.9M921.6 348.4L929.4 344.2L935.2 336.0M951.5 346.9L950.9 343.8L948.4 338.1M940.7 297.4L939.3 290.9L934.9 282.8M940.7 297.4L936.9 303.1L931.8 306.6M931.8 306.6L923.6 301.8L918.2 293.3M934.9 282.8L929.7 284.5L923.7 281.0M918.2 293.3L919.4 289.8L919.8 284.2M919.8 284.2L923.3 281.7L923.7 281.0M945.7 297.3L944.2 298.1L940.7 297.4M946.3 273.0L940.4 277.4L934.9 282.8M930.7 314.9L929.6 308.7L931.8 306.6M903.5 303.0L909.3 298.2L918.2 293.3M922.5 261.2L921.6 273.3L923.7 281.0M899.2 276.9L909.7 282.4L919.8 284.2M1119.5 411.0L1123.0 401.2L1124.7 393.8M1095.3 397.1L1098.8 392.5L1104.7 385.5M1104.7 385.5L1109.1 384.0L1114.5 383.6M1124.7 393.8L1119.1 387.9L1114.5 383.6M1124.7 393.8L1133.8 394.4L1140.0 390.4M1059.3 411.0L1058.1 404.3L1058.4 400.8M1034.7 403.0L1048.9 403.1L1058.4 400.8M1118.0 336.5L1108.0 341.8L1102.3 352.2M1118.0 336.5L1126.8 341.1L1130.6 350.4M1130.6 361.2L1125.6 362.3L1118.7 366.8M1118.7 366.8L1109.4 359.4L1102.5 357.2M1102.5 357.2L1102.6 353.4L1102.3 352.2M1123.7 327.3L1120.7 332.8L1117.8 333.5M1117.8 333.5L1119.5 336.9L1118.0 336.5M1089.1 368.3L1097.1 375.7L1104.7 385.5M1089.1 368.3L1095.9 361.9L1102.5 357.2M1117.8 333.5L1108.6 328.8L1103.8 325.6M1102.3 352.2L1095.4 345.0L1089.6 339.4M1103.8 325.6L1096.5 332.9L1089.6 339.4M1102.2 308.5L1098.4 308.2L1099.0 311.5M1103.8 325.6L1098.9 317.5L1099.0 311.5M1076.1 299.8L1081.5 304.8L1086.7 310.7M1086.7 310.7L1090.5 310.2L1099.0 311.5M752.2 295.7L753.4 296.9L753.3 297.8M773.4 305.5L777.8 292.5L778.5 284.2M771.2 277.3L769.4 278.5L771.4 278.2M750.0 317.0L753.0 307.0L753.3 297.8M775.5 309.9L773.3 309.6L773.4 305.5M792.1 285.0L784.4 286.6L778.5 284.2M872.1 230.6L858.2 229.3L848.9 225.5M843.7 245.9L844.5 246.9L845.5 247.9M845.5 247.9L847.7 247.0L847.0 248.3M877.6 221.4L877.2 225.3L872.1 230.6M873.7 241.9L873.1 242.4L872.4 240.1M860.9 264.3L854.8 254.6L847.0 248.3M821.2 250.6L830.5 246.9L843.7 245.9M838.8 266.5L839.7 258.0L845.5 247.9M1034.7 403.0L1035.0 393.3L1031.7 388.2M1040.0 382.8L1051.3 386.2L1058.3 386.8M1058.4 400.8L1059.2 399.9L1063.0 394.1M1080.7 396.3L1080.0 393.2L1077.2 393.4M1089.1 368.3L1086.8 369.3L1082.7 368.9M1077.2 393.4L1078.6 378.9L1082.7 368.9M1010.7 358.6L1015.0 358.8L1022.5 362.2M1010.7 358.6L1002.0 367.1L994.3 378.9M1022.5 362.2L1022.7 371.0L1021.9 383.0M1021.9 383.0L1011.1 383.8L1004.4 388.8M994.2 381.2L991.9 379.9L994.3 378.9M1006.9 352.7L1009.4 353.7L1010.7 358.6M984.1 358.1L991.5 369.6L994.3 378.9M1031.7 388.2L1027.9 384.0L1021.9 383.0M1086.7 310.7L1082.4 319.4L1076.2 332.3M1076.2 332.3L1063.6 324.4L1054.6 318.6M1054.9 316.1L1057.3 319.7L1054.5 318.5M1054.5 318.5L1052.1 320.2L1054.6 318.6M1027.0 313.4L1030.3 316.1L1031.3 322.1M1054.5 318.5L1041.2 322.1L1031.3 322.1M1010.1 334.8L1015.9 335.3L1026.7 334.1M1031.3 322.1L1030.6 329.0L1026.7 334.1M1058.3 386.8L1058.4 377.0L1061.1 363.1M1082.7 368.9L1077.9 368.4L1076.1 363.9M1076.1 363.9L1079.0 351.5L1082.0 338.6M1076.2 332.3L1076.6 331.5L1076.5 333.5M1082.0 338.6L1080.8 334.6L1076.5 333.5M1043.7 366.3L1035.7 360.1L1030.8 357.3M1043.7 366.3L1054.2 363.7L1061.0 363.1M1030.8 357.3L1032.3 351.0L1034.0 344.3M1061.0 363.1L1058.1 357.9L1057.2 347.6M1076.5 333.5L1067.4 340.4L1057.2 347.6M1040.0 382.8L1044.4 373.2L1043.7 366.3M1022.5 362.2L1025.5 358.8L1030.8 357.3M1061.1 363.1L1059.8 361.8L1061.0 363.1" fill="none" stroke="#00ff00" stroke-width="1"/>
<rect x="877.6" y="308.8" width="1.4" height="2" fill="#ff0000" />
<rect x="877.2" y="311.8" width="3.2" height="5" fill="#ff0000" />
<rect x="876.9" y="317.6" width="2.8" height="4" fill="#ff0000" />
<path d="M871.2 318.0h5l-2 -1.500" fill="none" stroke="#00ff00" stroke-width="1"/>
<path d="M876.8 317.6 L868.2 319.2" fill="none" stroke="#00ff00" stroke-width="1" />
<path d="M1105.6 294.4h5l-2 -1.500" fill="none" stroke="#00ff00" stroke-width="1"/>
<path d="M1108.6 298.0 L1117.1 303.9" fill="none" stroke="#00ff00" stroke-width="1" />
<rect x="903.1" y="313.1" width="1.4" height="2" fill="#ff0000" />
<rect x="902.1" y="316.1" width="3.2" height="5" fill="#ff0000" />
<rect x="902.4" y="321.9" width="3.4" height="4" fill="#ff0000" />
<path d="M901.6 321.1h5l-2 -1.500" fill="none" stroke="#00ff00" stroke-width="1"/>
<path d="M900.7 324.2 L895.4 319.7" fill="none" stroke="#00ff00" stroke-width="1" />
<path d="M739.7 307.7h5l-2 -1.500" fill="none" stroke="#00ff00" stroke-width="1"/>
<path d="M745.4 308.8 L752.4 306.5" fill="none" stroke="#00ff00" stroke-width="1" />
<rect x="698.1" y="255.1" width="1.4" height="2" fill="#ff0000" />
<rect x="697.1" y="258.1" width="3.2" height="5" fill="#ff0000" />
<rect x="696.8" y="263.9" width="2.8" height="4" fill="#ff0000" />
<rect x="978.6" y="321.9" width="1.4" height="2" fill="#ff0000" />
<rect x="977.6" y="324.9" width="3.2" height="5" fill="#ff0000" />
<rect x="977.9" y="330.7" width="3.4" height="4" fill="#ff0000" />
<rect x="913.7" y="205.0" width="1.4" height="2" fill="#ff0000" />
<rect x="912.7" y="208.0" width="3.2" height="5" fill="#ff0000" />
<rect x="912.4" y="213.8" width="2.8" height="4" fill="#ff0000" />
<path d="M908.2 207.2h5l-2 -1.500" fill="none" stroke="#00ff00" stroke-width="1"/>
<rect x="743.1" y="238.3" width="1.4" height="2" fill="#ff0000" />
<rect x="742.1" y="241.3" width="3.2" height="5" fill="#ff0000" />
<rect x="742.4" y="247.1" width="3.4" height="4" fill="#ff0000" />
<path d="M738.3 254.1h5l-2 -1.500" fill="none" stroke="#00ff00" stroke-width="1"/>
<rect x="665.0" y="288.3" width="1.4" height="2" fill="#ff0000" />
<rect x="664.0" y="291.3" width="3.2" height="5" fill="#ff0000" />
<rect x="663.7" y="297.1" width="2.8" height="4" fill="#ff0000" />
<path d="M662.6 301.5h5l-2 -1.500" fill="none" stroke="#00ff00" stroke-width="1"/>
<path d="M663.0 293.9 L665.7 303.1" fill="none" stroke="#00ff00" stroke-width="1" />
<rect x="899.7" y="332.3" width="1.4" height="2" fill="#ff0000" />
<rect x="899.3" y="335.3" width="3.2" height="5" fill="#ff0000" />
<rect x="899.0" y="341.1" width="2.8" height="4" fill="#ff0000" />
<path d="M892.4 336.3h5l-2 -1.500" fill="none" stroke="#00ff00" stroke-width="1"/>
<rect x="875.3" y="249.4" width="1.4" height="2" fill="#ff0000" />
<rect x="874.3" y="252.4" width="3.2" height="5" fill="#ff0000" />
<rect x="874.0" y="258.2" width="2.8" height="4" fill="#ff0000" />
<path d="M880.5 257.8h5l-2 -1.500" fill="none" stroke="#00ff00" stroke-width="1"/>
<path d="M877.0 258.5 L884.6 262.8" fill="none" stroke="#00ff00" stroke-width="1" />
<rect x="1068.6" y="338.0" width="1.4" height="2" fill="#ff0000" />
<rect x="1067.6" y="341.0" width="3.2" height="5" fill="#ff0000" />
<rect x="1067.9" y="346.8" width="3.4" height="4" fill="#ff0000" />
<path d="M1064.7 343.0h5l-2 -1.500" fill="none" stroke="#00ff00" stroke-width="1"/>
<rect x="809.5" y="238.0" width="1.4" height="2" fill="#ff0000" />
<rect x="809.1" y="241.0" width="3.2" height="5" fill="#ff0000" />
<rect x="808.8" y="246.8" width="2.8" height="4" fill="#ff0000" />
<path d="M788.8 208.7h5l-2 -1.500" fill="none" stroke="#00ff00" stroke-width="1"/>
<path d="M794.7 208.6 L790.4 213.4" fill="none" stroke="#00ff00" stroke-width="1" />
<rect x="1034.9" y="274.3" width="1.4" height="2" fill="#ff0000" />
<rect x="1033.9" y="277.3" width="3.2" height="5" fill="#ff0000" />
<rect x="1034.2" y="283.1" width="3.4" height="4" fill="#ff0000" />
<rect x="1074.0" y="271.9" width="1.4" height="2" fill="#ff0000" />
<rect x="1073.0" y="274.9" width="3.2" height="5" fill="#ff0000" />
<rect x="1072.7" y="280.7" width="2.8" height="4" fill="#ff0000" />
<path d="M1069.4 282.2h5l-2 -1.500" fill="none" stroke="#00ff00" stroke-width="1"/>
<path d="M1074.2 282.7 L1074.5 289.7" fill="none" stroke="#00ff00" stroke-width="1" />
<rect x="1126.5" y="369.6" width="1.4" height="2" fill="#ff0000" />
<rect x="1125.5" y="372.6" width="3.2" height="5" fill="#ff0000" />
<rect x="1125.2" y="378.4" width="2.8" height="4" fill="#ff0000" />
<rect x="1140.9" y="274.0" width="1.4" height="2" fill="#ff0000" />
<rect x="1139.9" y="277.0" width="3.2" height="5" fill="#ff0000" />
<rect x="1140.2" y="282.8" width="3.4" height="4" fill="#ff0000" />
<path d="M1133.6 279.8h5l-2 -1.500" fill="none" stroke="#00ff00" stroke-width="1"/>
<path d="M1139.8 283.5 L1145.3 287.2" fill="none" stroke="#00ff00" stroke-width="1" />
<rect x="687.1" y="325.7" width="1.4" height="2" fill="#ff0000" />
<rect x="686.1" y="328.7" width="3.2" height="5" fill="#ff0000" />
<rect x="685.8" y="334.5" width="2.8" height="4" fill="#ff0000" />
<path d="M678.6 330.3h5l-2 -1.500" fill="none" stroke="#00ff00" stroke-width="1"/>
<path d="M686.7 328.0 L681.5 335.7" fill="none" stroke="#00ff00" stroke-width="1" />
<rect x="1036.4" y="248.5" width="1.4" height="2" fill="#ff0000" />
<rect x="1035.4" y="251.5" width="3.2" height="5" fill="#ff0000" />
<rect x="1035.1" y="257.3" width="2.8" height="4" fill="#ff0000" />
<path d="M1033.4 256.4h5l-2 -1.500" fill="none" stroke="#00ff00" stroke-width="1"/>
<path d="M1042.5 258.2 L1032.3 257.0" fill="none" stroke="#00ff00" stroke-width="1" />
<rect x="710.4" y="243.1" width="1.4" height="2" fill="#ff0000" />
<rect x="710.0" y="246.1" width="3.2" height="5" fill="#ff0000" />
<rect x="709.7" y="251.9" width="2.8" height="4" fill="#ff0000" />
<path d="M704.1 251.9h5l-2 -1.500" fill="none" stroke="#00ff00" stroke-width="1"/>
<rect x="931.5" y="282.5" width="1.4" height="2" fill="#ff0000" />
<rect x="930.5" y="285.5" width="3.2" height="5" fill="#ff0000" />
<rect x="930.2" y="291.3" width="2.8" height="4" fill="#ff0000" />
<path d="M739.5 352.4h5l-2 -1.500" fill="none" stroke="#00ff00" stroke-width="1"/>
<path d="M745.1 356.6 L751.9 362.0" fill="none" stroke="#00ff00" stroke-width="1" />
<rect x="717.6" y="326.4" width="1.4" height="2" fill="#ff0000" />
<rect x="716.6" y="329.4" width="3.2" height="5" fill="#ff0000" />
<rect x="716.3" y="335.2" width="2.8" height="4" fill="#ff0000" />
<rect x="704.9" y="276.7" width="1.4" height="2" fill="#ff0000" />
<rect x="704.5" y="279.7" width="3.2" height="5" fill="#ff0000" />
<rect x="704.2" y="285.5" width="2.8" height="4" fill="#ff0000" />
<rect x="754.8" y="275.8" width="1.4" height="2" fill="#ff0000" />
<rect x="753.8" y="278.8" width="3.2" height="5" fill="#ff0000" />
<rect x="753.5" y="284.6" width="2.8" height="4" fill="#ff0000" />
<path d="M773.4 327.1h5l-2 -1.500" fill="none" stroke="#00ff00" stroke-width="1"/>
<path d="M770.7 326.8 L769.3 336.8" fill="none" stroke="#00ff00" stroke-width="1" />
<rect x="835.3" y="287.5" width="1.4" height="2" fill="#ff0000" />
<rect x="834.9" y="290.5" width="3.2" height="5" fill="#ff0000" />
<rect x="834.6" y="296.3" width="2.8" height="4" fill="#ff0000" />
<rect x="1129.3" y="294.1" width="1.4" height="2" fill="#ff0000" />
<rect x="1128.3" y="297.1" width="3.2" height="5" fill="#ff0000" />
<rect x="1128.6" y="302.9" width="3.4" height="4" fill="#ff0000" />
<rect x="742.0" y="223.9" width="1.4" height="2" fill="#ff0000" />
<rect x="741.0" y="226.9" width="3.2" height="5" fill="#ff0000" />
<rect x="741.3" y="232.7" width="3.4" height="4" fill="#ff0000" />
<rect x="1101.9" y="365.3" width="1.4" height="2" fill="#ff0000" />
<rect x="1100.9" y="368.3" width="3.2" height="5" fill="#ff0000" />
<rect x="1101.2" y="374.1" width="3.4" height="4" fill="#ff0000" />
<path d="M769.1 240.8h5l-2 -1.500" fill="none" stroke="#00ff00" stroke-width="1"/>
<path d="M773.4 240.8 L782.3 243.1" fill="none" stroke="#00ff00" stroke-width="1" />
<path d="M1014.5 396.6h5l-2 -1.500" fill="none" stroke="#00ff00" stroke-width="1"/>
<path d="M1018.5 397.7 L1018.4 390.4" fill="none" stroke="#00ff00" stroke-width="1" />
<rect x="1089.6" y="319.0" width="1.4" height="2" fill="#ff0000" />
<rect x="1088.6" y="322.0" width="3.2" height="5" fill="#ff0000" />
<rect x="1088.9" y="327.8" width="3.4" height="4" fill="#ff0000" />
<path d="M1087.2 330.2h5l-2 -1.500" fill="none" stroke="#00ff00" stroke-width="1"/>
<rect x="859.3" y="210.9" width="1.4" height="2" fill="#ff0000" />
<rect x="858.3" y="213.9" width="3.2" height="5" fill="#ff0000" />
<rect x="858.0" y="219.7" width="2.8" height="4" fill="#ff0000" />
<path d="M861.1 218.9h5l-2 -1.500" fill="none" stroke="#00ff00" stroke-width="1"/>
<path d="M859.2 220.7 L868.1 220.9" fill="none" stroke="#00ff00" stroke-width="1" />
<rect x="767.8" y="337.7" width="1.4" height="2" fill="#ff0000" />
<rect x="766.8" y="340.7" width="3.2" height="5" fill="#ff0000" />
<rect x="767.1" y="346.5" width="3.4" height="4" fill="#ff0000" />
<rect x="947.8" y="249.8" width="1.4" height="2" fill="#ff0000" />
<rect x="946.8" y="252.8" width="3.2" height="5" fill="#ff0000" />
<rect x="947.1" y="258.6" width="3.4" height="4" fill="#ff0000" />
<rect x="683.1" y="238.5" width="1.4" height="2" fill="#ff0000" />
<rect x="682.1" y="241.5" width="3.2" height="5" fill="#ff0000" />
<rect x="682.4" y="247.3" width="3.4" height="4" fill="#ff0000" />
<rect x="738.2" y="270.5" width="1.4" height="2" fill="#ff0000" />
<rect x="737.2" y="273.5" width="3.2" height="5" fill="#ff0000" />
<rect x="736.9" y="279.3" width="2.8" height="4" fill="#ff0000" />
<path d="M739.5 275.5h5l-2 -1.500" fill="none" stroke="#00ff00" stroke-width="1"/>
<path d="M737.4 273.8 L743.9 276.3" fill="none" stroke="#00ff00" stroke-width="1" />
<path d="M993.8 320.6h5l-2 -1.500" fill="none" stroke="#00ff00" stroke-width="1"/>
<path d="M992.0 323.1 L985.0 326.5" fill="none" stroke="#00ff00" stroke-width="1" />
<rect x="888.8" y="343.9" width="1.4" height="2" fill="#ff0000" />
<rect x="888.4" y="346.9" width="3.2" height="5" fill="#ff0000" />
<rect x="888.1" y="352.7" width="2.8" height="4" fill="#ff0000" />
<rect x="686.9" y="307.8" width="1.4" height="2" fill="#ff0000" />
<rect x="686.5" y="310.8" width="3.2" height="5" fill="#ff0000" />
<rect x="686.2" y="316.6" width="2.8" height="4" fill="#ff0000" />
<path d="M680.0 313.9h5l-2 -1.500" fill="none" stroke="#00ff00" stroke-width="1"/>
<path d="M687.0 311.0 L679.2 315.7" fill="none" stroke="#00ff00" stroke-width="1" />
<path d="M1019.9 345.7h5l-2 -1.500" fill="none" stroke="#00ff00" stroke-width="1"/>
<path d="M1017.2 347.0 L1017.3 355.1" fill="none" stroke="#00ff00" stroke-width="1" />
<rect x="1045.3" y="388.2" width="1.4" height="2" fill="#ff0000" />
<rect x="1044.3" y="391.2" width="3.2" height="5" fill="#ff0000" />
<rect x="1044.6" y="397.0" width="3.4" height="4" fill="#ff0000" />
<path d="M1038.9 392.2h5l-2 -1.500" fill="none" stroke="#00ff00" stroke-width="1"/>
<rect x="827.3" y="337.7" width="1.4" height="2" fill="#ff0000" />
<rect x="826.3" y="340.7" width="3.2" height="5" fill="#ff0000" />
<rect x="826.0" y="346.5" width="2.8" height="4" fill="#ff0000" />
<rect x="963.8" y="269.2" width="1.4" height="2" fill="#ff0000" />
<rect x="962.8" y="272.2" width="3.2" height="5" fill="#ff0000" />
<rect x="962.5" y="278.0" width="2.8" height="4" fill="#ff0000" />
<rect x="943.6" y="317.7" width="1.4" height="2" fill="#ff0000" />
<rect x="943.2" y="320.7" width="3.2" height="5" fill="#ff0000" />
<rect x="942.9" y="326.5" width="2.8" height="4" fill="#ff0000" />
<path d="M934.9 331.3h5l-2 -1.500" fill="none" stroke="#00ff00" stroke-width="1"/>
<path d="M943.5 330.6 L935.9 324.5" fill="none" stroke="#00ff00" stroke-width="1" />
<rect x="1014.3" y="272.9" width="1.4" height="2" fill="#ff0000" />
<rect x="1013.9" y="275.9" width="3.2" height="5" fill="#ff0000" />
<rect x="1013.6" y="281.7" width="2.8" height="4" fill="#ff0000" />
<path d="M1010.0 279.5h5l-2 -1.500" fill="none" stroke="#00ff00" stroke-width="1"/>
<rect x="1018.0" y="315.9" width="1.4" height="2" fill="#ff0000" />
<rect x="1017.0" y="318.9" width="3.2" height="5" fill="#ff0000" />
<rect x="1017.3" y="324.7" width="3.4" height="4" fill="#ff0000" />
<path d="M1018.0 321.2h5l-2 -1.500" fill="none" stroke="#00ff00" stroke-width="1"/>
<path d="M1016.1 320.8 L1023.2 323.2" fill="none" stroke="#00ff00" stroke-width="1" />
<rect x="997.2" y="297.5" width="1.4" height="2" fill="#ff0000" />
<rect x="996.2" y="300.5" width="3.2" height="5" fill="#ff0000" />
<rect x="996.5" y="306.3" width="3.4" height="4" fill="#ff0000" />
<rect x="800.6" y="336.7" width="1.4" height="2" fill="#ff0000" />
<rect x="799.6" y="339.7" width="3.2" height="5" fill="#ff0000" />
<rect x="799.3" y="345.5" width="2.8" height="4" fill="#ff0000" />
<rect x="1101.2" y="328.0" width="1.4" height="2" fill="#ff0000" />
<rect x="1100.8" y="331.0" width="3.2" height="5" fill="#ff0000" />
<rect x="1100.5" y="336.8" width="2.8" height="4" fill="#ff0000" />
<path d="M1102.0 341.2h5l-2 -1.500" fill="none" stroke="#00ff00" stroke-width="1"/>
<path d="M1083.3 283.9h5l-2 -1.500" fill="none" stroke="#00ff00" stroke-width="1"/>
<path d="M1089.9 279.5 L1097.7 285.9" fill="none" stroke="#00ff00" stroke-width="1" />
<rect x="719.7" y="294.9" width="1.4" height="2" fill="#ff0000" />
<rect x="718.7" y="297.9" width="3.2" height="5" fill="#ff0000" />
<rect x="719.0" y="303.7" width="3.4" height="4" fill="#ff0000" />
<path d="M716.6 303.4h5l-2 -1.500" fill="none" stroke="#00ff00" stroke-width="1"/>
<rect x="1070.7" y="372.3" width="1.4" height="2" fill="#ff0000" />
<rect x="1070.3" y="375.3" width="3.2" height="5" fill="#ff0000" />
<rect x="1070.0" y="381.1" width="2.8" height="4" fill="#ff0000" />
<path d="M1068.4 373.3h5l-2 -1.500" fill="none" stroke="#00ff00" stroke-width="1"/>
<rect x="874.1" y="197.2" width="1.4" height="2" fill="#ff0000" />
<rect x="873.1" y="200.2" width="3.2" height="5" fill="#ff0000" />
<rect x="872.8" y="206.0" width="2.8" height="4" fill="#ff0000" />
<rect x="1063.9" y="237.4" width="1.4" height="2" fill="#ff0000" />
<rect x="1063.5" y="240.4" width="3.2" height="5" fill="#ff0000" />
<rect x="1063.2" y="246.2" width="2.8" height="4" fill="#ff0000" />
<path d="M984.8 236.9h5l-2 -1.500" fill="none" stroke="#00ff00" stroke-width="1"/>
<path d="M988.9 240.6 L985.2 232.0" fill="none" stroke="#00ff00" stroke-width="1" />
<path d="M887.9 234.7h5l-2 -1.500" fill="none" stroke="#00ff00" stroke-width="1"/>
<path d="M891.2 236.0 L899.6 234.5" fill="none" stroke="#00ff00" stroke-width="1" />
<rect x="786.0" y="265.9" width="1.4" height="2" fill="#ff0000" />
<rect x="785.0" y="268.9" width="3.2" height="5" fill="#ff0000" />
<rect x="784.7" y="274.7" width="2.8" height="4" fill="#ff0000" />
<path d="M783.2 273.3h5l-2 -1.500" fill="none" stroke="#00ff00" stroke-width="1"/>
<path d="M785.0 274.9 L777.7 276.4" fill="none" stroke="#00ff00" stroke-width="1" />
<rect x="958.0" y="349.4" width="1.4" height="2" fill="#ff0000" />
<rect x="957.0" y="352.4" width="3.2" height="5" fill="#ff0000" />
<rect x="956.7" y="358.2" width="2.8" height="4" fill="#ff0000" />
<rect x="1115.7" y="343.6" width="1.4" height="2" fill="#ff0000" />
<rect x="1114.7" y="346.6" width="3.2" height="5" fill="#ff0000" />
<rect x="1114.4" y="352.4" width="2.8" height="4" fill="#ff0000" />
<path d="M1116.8 357.5h5l-2 -1.500" fill="none" stroke="#00ff00" stroke-width="1"/>
<path d="M1114.9 349.4 L1120.7 353.6" fill="none" stroke="#00ff00" stroke-width="1" />
<path d="M832.2 323.9h5l-2 -1.500" fill="none" stroke="#00ff00" stroke-width="1"/>
<path d="M838.0 317.1 L841.9 322.2" fill="none" stroke="#00ff00" stroke-width="1" />
<path d="M971.3 236.3h5l-2 -1.500" fill="none" stroke="#00ff00" stroke-width="1"/>
<path d="M976.7 240.3 L974.8 248.7" fill="none" stroke="#00ff00" stroke-width="1" />
<path d="M1010.3 369.5h5l-2 -1.500" fill="none" stroke="#00ff00" stroke-width="1"/>
<path d="M1014.3 372.7 L1015.9 383.0" fill="none" stroke="#00ff00" stroke-width="1" />
<path d="M685.0 290.1h5l-2 -1.500" fill="none" stroke="#00ff00" stroke-width="1"/>
<path d="M690.6 289.6 L687.2 297.9" fill="none" stroke="#00ff00" stroke-width="1" />
<rect x="721.5" y="219.0" width="1.4" height="2" fill="#ff0000" />
<rect x="720.5" y="222.0" width="3.2" height="5" fill="#ff0000" />
<rect x="720.8" y="227.8" width="3.4" height="4" fill="#ff0000" />
<path d="M759.7 312.7h5l-2 -1.500" fill="none" stroke="#00ff00" stroke-width="1"/>
<path d="M761.7 308.9 L757.2 303.6" fill="none" stroke="#00ff00" stroke-width="1" />
<rect x="1069.4" y="307.0" width="1.4" height="2" fill="#ff0000" />
<rect x="1068.4" y="310.0" width="3.2" height="5" fill="#ff0000" />
<rect x="1068.7" y="315.8" width="3.4" height="4" fill="#ff0000" />
<path d="M1071.2 321.1h5l-2 -1.500" fill="none" stroke="#00ff00" stroke-width="1"/>
<path d="M799.9 284.2h5l-2 -1.500" fill="none" stroke="#00ff00" stroke-width="1"/>
<path d="M809.7 277.5 L816.9 283.2" fill="none" stroke="#00ff00" stroke-width="1" />
<rect x="933.7" y="232.9" width="1.4" height="2" fill="#ff0000" />
<rect x="933.3" y="235.9" width="3.2" height="5" fill="#ff0000" />
<rect x="933.0" y="241.7" width="2.8" height="4" fill="#ff0000" />
<path d="M929.8 237.8h5l-2 -1.500" fill="none" stroke="#00ff00" stroke-width="1"/>
<path d="M936.6 236.2 L937.5 229.5" fill="none" stroke="#00ff00" stroke-width="1" />
<path d="M919.0 305.0h5l-2 -1.500" fill="none" stroke="#00ff00" stroke-width="1"/>
<path d="M917.2 305.8 L920.8 312.4" fill="none" stroke="#00ff00" stroke-width="1" />
<path d="M945.6 197.2h5l-2 -1.500" fill="none" stroke="#00ff00" stroke-width="1"/>
<path d="M951.4 204.5 L947.1 198.6" fill="none" stroke="#00ff00" stroke-width="1" />
<rect x="781.9" y="291.7" width="1.4" height="2" fill="#ff0000" />
<rect x="780.9" y="294.7" width="3.2" height="5" fill="#ff0000" />
<rect x="780.6" y="300.5" width="2.8" height="4" fill="#ff0000" />
<path d="M780.7 294.3h5l-2 -1.500" fill="none" stroke="#00ff00" stroke-width="1"/>
<path d="M780.8 298.0 L782.2 304.2" fill="none" stroke="#00ff00" stroke-width="1" />
<rect x="745.2" y="320.8" width="1.4" height="2" fill="#ff0000" />
<rect x="744.8" y="323.8" width="3.2" height="5" fill="#ff0000" />
<rect x="744.5" y="329.6" width="2.8" height="4" fill="#ff0000" />
<rect x="993.1" y="255.8" width="1.4" height="2" fill="#ff0000" />
<rect x="992.1" y="258.8" width="3.2" height="5" fill="#ff0000" />
<rect x="991.8" y="264.6" width="2.8" height="4" fill="#ff0000" />
<path d="M701.4 359.2h5l-2 -1.500" fill="none" stroke="#00ff00" stroke-width="1"/>
<path d="M699.4 355.0 L697.6 362.9" fill="none" stroke="#00ff00" stroke-width="1" />
<path d="M907.7 232.7h5l-2 -1.500" fill="none" stroke="#00ff00" stroke-width="1"/>
<path d="M913.3 234.2 L910.4 225.9" fill="none" stroke="#00ff00" stroke-width="1" />
<rect x="1100.5" y="259.4" width="1.4" height="2" fill="#ff0000" />
<rect x="1099.5" y="262.4" width="3.2" height="5" fill="#ff0000" />
<rect x="1099.8" y="268.2" width="3.4" height="4" fill="#ff0000" />
<path d="M1103.2 265.9h5l-2 -1.500" fill="none" stroke="#00ff00" stroke-width="1"/>
<path d="M1104.6 266.8 L1098.9 259.1" fill="none" stroke="#00ff00" stroke-width="1" />
<rect x="850.5" y="336.9" width="1.4" height="2" fill="#ff0000" />
<rect x="850.1" y="339.9" width="3.2" height="5" fill="#ff0000" />
<rect x="849.8" y="345.7" width="2.8" height="4" fill="#ff0000" />
<path d="M847.6 342.6h5l-2 -1.500" fill="none" stroke="#00ff00" stroke-width="1"/>
<path d="M851.0 343.8 L846.8 353.0" fill="none" stroke="#00ff00" stroke-width="1" />
<path d="M810.7 300.8h5l-2 -1.500" fill="none" stroke="#00ff00" stroke-width="1"/>
<path d="M815.0 293.8 L817.9 288.1" fill="none" stroke="#00ff00" stroke-width="1" />
<rect x="905.1" y="278.8" width="1.4" height="2" fill="#ff0000" />
<rect x="904.7" y="281.8" width="3.2" height="5" fill="#ff0000" />
<rect x="904.4" y="287.6" width="2.8" height="4" fill="#ff0000" />
<path d="M908.4 293.4h5l-2 -1.500" fill="none" stroke="#00ff00" stroke-width="1"/>
<rect x="996.6" y="352.6" width="1.4" height="2" fill="#ff0000" />
<rect x="995.6" y="355.6" width="3.2" height="5" fill="#ff0000" />
<rect x="995.3" y="361.4" width="2.8" height="4" fill="#ff0000" />
<rect x="656.6" y="264.1" width="1.4" height="2" fill="#ff0000" />
<rect x="655.6" y="267.1" width="3.2" height="5" fill="#ff0000" />
<rect x="655.9" y="272.9" width="3.4" height="4" fill="#ff0000" />
<path d="M654.8 270.4h5l-2 -1.500" fill="none" stroke="#00ff00" stroke-width="1"/>
<rect x="836.4" y="213.2" width="1.4" height="2" fill="#ff0000" />
<rect x="836.0" y="216.2" width="3.2" height="5" fill="#ff0000" />
<rect x="835.7" y="222.0" width="2.8" height="4" fill="#ff0000" />
<path d="M834.5 218.6h5l-2 -1.500" fill="none" stroke="#00ff00" stroke-width="1"/>
<rect x="1130.0" y="313.3" width="1.4" height="2" fill="#ff0000" />
<rect x="1129.0" y="316.3" width="3.2" height="5" fill="#ff0000" />
<rect x="1128.7" y="322.1" width="2.8" height="4" fill="#ff0000" />
<path d="M1130.8 322.2h5l-2 -1.500" fill="none" stroke="#00ff00" stroke-width="1"/>
<path d="M1135.6 321.8 L1134.5 313.8" fill="none" stroke="#00ff00" stroke-width="1" />
<path d="M834.1 254.6h5l-2 -1.500" fill="none" stroke="#00ff00" stroke-width="1"/>
<path d="M836.6 260.9 L846.2 263.4" fill="none" stroke="#00ff00" stroke-width="1" />
<path d="M729.1 353.3h5l-2 -1.500" fill="none" stroke="#00ff00" stroke-width="1"/>
<path d="M730.9 356.1 L736.0 350.1" fill="none" stroke="#00ff00" stroke-width="1" />
<rect x="864.5" y="290.7" width="1.4" height="2" fill="#ff0000" />
<rect x="863.5" y="293.7" width="3.2" height="5" fill="#ff0000" />
<rect x="863.2" y="299.5" width="2.8" height="4" fill="#ff0000" />
<path d="M860.3 303.9h5l-2 -1.500" fill="none" stroke="#00ff00" stroke-width="1"/>
<path d="M953.2 216.2h5l-2 -1.500" fill="none" stroke="#00ff00" stroke-width="1"/>
<path d="M955.7 225.0 L950.3 234.5" fill="none" stroke="#00ff00" stroke-width="1" />
<rect x="870.5" y="335.4" width="1.4" height="2" fill="#ff0000" />
<rect x="870.1" y="338.4" width="3.2" height="5" fill="#ff0000" />
<rect x="869.8" y="344.2" width="2.8" height="4" fill="#ff0000" />
<rect x="1037.6" y="304.6" width="1.4" height="2" fill="#ff0000" />
<rect x="1037.2" y="307.6" width="3.2" height="5" fill="#ff0000" />
<rect x="1036.9" y="313.4" width="2.8" height="4" fill="#ff0000" />
<path d="M1040.2 307.7h5l-2 -1.500" fill="none" stroke="#00ff00" stroke-width="1"/>
<rect x="1014.3" y="241.6" width="1.4" height="2" fill="#ff0000" />
<rect x="1013.3" y="244.6" width="3.2" height="5" fill="#ff0000" />
<rect x="1013.6" y="250.4" width="3.4" height="4" fill="#ff0000" />
<path d="M1016.0 248.8h5l-2 -1.500" fill="none" stroke="#00ff00" stroke-width="1"/>
<path d="M1038.9 336.6h5l-2 -1.500" fill="none" stroke="#00ff00" stroke-width="1"/>
<path d="M1041.1 327.4 L1037.1 322.4" fill="none" stroke="#00ff00" stroke-width="1" />
<rect x="922.2" y="322.5" width="1.4" height="2" fill="#ff0000" />
<rect x="921.2" y="325.5" width="3.2" height="5" fill="#ff0000" />
<rect x="921.5" y="331.3" width="3.4" height="4" fill="#ff0000" />
<path d="M924.1 335.5h5l-2 -1.500" fill="none" stroke="#00ff00" stroke-width="1"/>
<rect x="863.9" y="244.1" width="1.4" height="2" fill="#ff0000" />
<rect x="862.9" y="247.1" width="3.2" height="5" fill="#ff0000" />
<rect x="862.6" y="252.9" width="2.8" height="4" fill="#ff0000" />
<path d="M857.1 252.6h5l-2 -1.500" fill="none" stroke="#00ff00" stroke-width="1"/>
<path d="M1048.1 281.9h5l-2 -1.500" fill="none" stroke="#00ff00" stroke-width="1"/>
<path d="M1052.5 279.5 L1059.4 282.5" fill="none" stroke="#00ff00" stroke-width="1" />
<rect x="812.1" y="308.3" width="1.4" height="2" fill="#ff0000" />
<rect x="811.1" y="311.3" width="3.2" height="5" fill="#ff0000" />
<rect x="811.4" y="317.1" width="3.4" height="4" fill="#ff0000" />
<path d="M814.6 311.1h5l-2 -1.500" fill="none" stroke="#00ff00" stroke-width="1"/>
<rect x="864.3" y="268.5" width="1.4" height="2" fill="#ff0000" />
<rect x="863.3" y="271.5" width="3.2" height="5" fill="#ff0000" />
<rect x="863.6" y="277.3" width="3.4" height="4" fill="#ff0000" />
<path d="M865.3 278.5h5l-2 -1.500" fill="none" stroke="#00ff00" stroke-width="1"/>
<rect x="1106.3" y="389.7" width="1.4" height="2" fill="#ff0000" />
<rect x="1105.3" y="392.7" width="3.2" height="5" fill="#ff0000" />
<rect x="1105.6" y="398.5" width="3.4" height="4" fill="#ff0000" />
<path d="M1101.8 393.1h5l-2 -1.500" fill="none" stroke="#00ff00" stroke-width="1"/>
<path d="M1113.0 401.7 L1102.8 404.9" fill="none" stroke="#00ff00" stroke-width="1" />
<rect x="834.6" y="270.2" width="1.4" height="2" fill="#ff0000" />
<rect x="834.2" y="273.2" width="3.2" height="5" fill="#ff0000" />
<rect x="833.9" y="279.0" width="2.8" height="4" fill="#ff0000" />
<rect x="1132.2" y="328.7" width="1.4" height="2" fill="#ff0000" />
<rect x="1131.8" y="331.7" width="3.2" height="5" fill="#ff0000" />
<rect x="1131.5" y="337.5" width="2.8" height="4" fill="#ff0000" />
<rect x="677.2" y="253.5" width="1.4" height="2" fill="#ff0000" />
<rect x="676.8" y="256.5" width="3.2" height="5" fill="#ff0000" />
<rect x="676.5" y="262.3" width="2.8" height="4" fill="#ff0000" />
<path d="M1055.3 303.3h5l-2 -1.500" fill="none" stroke="#00ff00" stroke-width="1"/>
<path d="M1058.9 298.2 L1067.7 296.2" fill="none" stroke="#00ff00" stroke-width="1" />
<rect x="886.9" y="292.8" width="1.4" height="2" fill="#ff0000" />
<rect x="885.9" y="295.8" width="3.2" height="5" fill="#ff0000" />
<rect x="886.2" y="301.6" width="3.4" height="4" fill="#ff0000" />
<rect x="1075.5" y="251.9" width="1.4" height="2" fill="#ff0000" />
<rect x="1074.5" y="254.9" width="3.2" height="5" fill="#ff0000" />
<rect x="1074.8" y="260.7" width="3.4" height="4" fill="#ff0000" />
<path d="M1032.8 377.0h5l-2 -1.500" fill="none" stroke="#00ff00" stroke-width="1"/>
<path d="M1037.4 372.9 L1027.2 375.8" fill="none" stroke="#00ff00" stroke-width="1" />
<rect x="940.5" y="338.2" width="1.4" height="2" fill="#ff0000" />
<rect x="940.1" y="341.2" width="3.2" height="5" fill="#ff0000" />
<rect x="939.8" y="347.0" width="2.8" height="4" fill="#ff0000" />
<rect x="908.4" y="247.6" width="1.4" height="2" fill="#ff0000" />
<rect x="907.4" y="250.6" width="3.2" height="5" fill="#ff0000" />
<rect x="907.7" y="256.4" width="3.4" height="4" fill="#ff0000" />
<path d="M908.2 248.7h5l-2 -1.500" fill="none" stroke="#00ff00" stroke-width="1"/>
<path d="M908.9 256.4 L908.9 266.0" fill="none" stroke="#00ff00" stroke-width="1" />
<rect x="972.4" y="196.1" width="1.4" height="2" fill="#ff0000" />
<rect x="971.4" y="199.1" width="3.2" height="5" fill="#ff0000" />
<rect x="971.1" y="204.9" width="2.8" height="4" fill="#ff0000" />
<rect x="772.3" y="252.5" width="1.4" height="2" fill="#ff0000" />
<rect x="771.9" y="255.5" width="3.2" height="5" fill="#ff0000" />
<rect x="771.6" y="261.3" width="2.8" height="4" fill="#ff0000" />
<path d="M772.6 265.3h5l-2 -1.500" fill="none" stroke="#00ff00" stroke-width="1"/>
<path d="M1086.3 408.4 L1089.3 409.0" fill="none" stroke="#00ff00" stroke-width="1" />
<rect x="789.9" y="307.2" width="1.4" height="2" fill="#ff0000" />
<rect x="788.9" y="310.2" width="3.2" height="5" fill="#ff0000" />
<rect x="789.2" y="316.0" width="3.4" height="4" fill="#ff0000" />
<path d="M786.4 315.6h5l-2 -1.500" fill="none" stroke="#00ff00" stroke-width="1"/>
<path d="M791.8 314.0 L797.9 314.6" fill="none" stroke="#00ff00" stroke-width="1" />
<rect x="722.0" y="256.2" width="1.4" height="2" fill="#ff0000" />
<rect x="721.0" y="259.2" width="3.2" height="5" fill="#ff0000" />
<rect x="720.7" y="265.0" width="2.8" height="4" fill="#ff0000" />
<rect x="1094.2" y="285.7" width="1.4" height="2" fill="#ff0000" />
<rect x="1093.2" y="288.7" width="3.2" height="5" fill="#ff0000" />
<rect x="1092.9" y="294.5" width="2.8" height="4" fill="#ff0000" />
<path d="M1091.2 294.7h5l-2 -1.500" fill="none" stroke="#00ff00" stroke-width="1"/>
<path d="M1094.0 297.9 L1088.7 306.8" fill="none" stroke="#00ff00" stroke-width="1" />
<rect x="1119.0" y="265.9" width="1.4" height="2" fill="#ff0000" />
<rect x="1118.0" y="268.9" width="3.2" height="5" fill="#ff0000" />
<rect x="1117.7" y="274.7" width="2.8" height="4" fill="#ff0000" />
<path d="M1115.6 270.4h5l-2 -1.500" fill="none" stroke="#00ff00" stroke-width="1"/>
<rect x="786.4" y="222.1" width="1.4" height="2" fill="#ff0000" />
<rect x="785.4" y="225.1" width="3.2" height="5" fill="#ff0000" />
<rect x="785.1" y="230.9" width="2.8" height="4" fill="#ff0000" />
<rect x="766.8" y="211.8" width="1.4" height="2" fill="#ff0000" />
<rect x="765.8" y="214.8" width="3.2" height="5" fill="#ff0000" />
<rect x="765.5" y="220.6" width="2.8" height="4" fill="#ff0000" />
<path d="M767.8 214.2h5l-2 -1.500" fill="none" stroke="#00ff00" stroke-width="1"/>
<path d="M991.7 345.7h5l-2 -1.500" fill="none" stroke="#00ff00" stroke-width="1"/>
<path d="M999.3 344.6 L1003.4 335.3" fill="none" stroke="#00ff00" stroke-width="1" />
<path d="M986.2 281.5h5l-2 -1.500" fill="none" stroke="#00ff00" stroke-width="1"/>
<path d="M994.3 287.9 L991.8 294.9" fill="none" stroke="#00ff00" stroke-width="1" />
<path d="M1043.0 376.0h5l-2 -1.500" fill="none" stroke="#00ff00" stroke-width="1"/>
<path d="M1047.2 375.8 L1052.5 369.3" fill="none" stroke="#00ff00" stroke-width="1" />
<rect x="1042.6" y="345.7" width="1.4" height="2" fill="#ff0000" />
<rect x="1041.6" y="348.7" width="3.2" height="5" fill="#ff0000" />
<rect x="1041.9" y="354.5" width="3.4" height="4" fill="#ff0000" />
<rect x="977.1" y="365.2" width="1.4" height="2" fill="#ff0000" />
<rect x="976.1" y="368.2" width="3.2" height="5" fill="#ff0000" />
<rect x="976.4" y="374.0" width="3.4" height="4" fill="#ff0000" />
<rect x="703.0" y="223.1" width="1.4" height="2" fill="#ff0000" />
<rect x="702.0" y="226.1" width="3.2" height="5" fill="#ff0000" />
<rect x="702.3" y="231.9" width="3.4" height="4" fill="#ff0000" />
<path d="M700.7 227.3h5l-2 -1.500" fill="none" stroke="#00ff00" stroke-width="1"/>
<path d="M700.8 227.6 L700.3 219.7" fill="none" stroke="#00ff00" stroke-width="1" />
<rect x="1086.4" y="347.1" width="1.4" height="2" fill="#ff0000" />
<rect x="1085.4" y="350.1" width="3.2" height="5" fill="#ff0000" />
<rect x="1085.1" y="355.9" width="2.8" height="4" fill="#ff0000" />
<path d="M1084.0 355.0h5l-2 -1.500" fill="none" stroke="#00ff00" stroke-width="1"/>
<rect x="963.9" y="248.0" width="1.4" height="2" fill="#ff0000" />
<rect x="962.9" y="251.0" width="3.2" height="5" fill="#ff0000" />
<rect x="963.2" y="256.8" width="3.4" height="4" fill="#ff0000" />
<rect x="827.3" y="232.3" width="1.4" height="2" fill="#ff0000" />
<rect x="826.9" y="235.3" width="3.2" height="5" fill="#ff0000" />
<rect x="826.6" y="241.1" width="2.8" height="4" fill="#ff0000" />
<rect x="886.6" y="267.8" width="1.4" height="2" fill="#ff0000" />
<rect x="886.2" y="270.8" width="3.2" height="5" fill="#ff0000" />
<rect x="885.9" y="276.6" width="2.8" height="4" fill="#ff0000" />
<path d="M878.6 271.1h5l-2 -1.500" fill="none" stroke="#00ff00" stroke-width="1"/>
<path d="M1133.4 402.8 L1133.2 409.0" fill="none" stroke="#00ff00" stroke-width="1" />
<rect x="1024.8" y="295.2" width="1.4" height="2" fill="#ff0000" />
<rect x="1023.8" y="298.2" width="3.2" height="5" fill="#ff0000" />
<rect x="1024.1" y="304.0" width="3.4" height="4" fill="#ff0000" />
<path d="M1018.2 302.0h5l-2 -1.500" fill="none" stroke="#00ff00" stroke-width="1"/>
<rect x="905.6" y="349.7" width="1.4" height="2" fill="#ff0000" />
<rect x="905.2" y="352.7" width="3.2" height="5" fill="#ff0000" />
<rect x="904.9" y="358.5" width="2.8" height="4" fill="#ff0000" />
<path d="M908.8 364.1h5l-2 -1.500" fill="none" stroke="#00ff00" stroke-width="1"/>
<path d="M906.1 359.3 L915.3 364.2" fill="none" stroke="#00ff00" stroke-width="1" />
<path d="M945.1 312.2h5l-2 -1.500" fill="none" stroke="#00ff00" stroke-width="1"/>
<path d="M947.1 307.6 L944.6 297.7" fill="none" stroke="#00ff00" stroke-width="1" />
<path d="M765.2 291.2h5l-2 -1.500" fill="none" stroke="#00ff00" stroke-width="1"/>
<path d="M770.6 295.9 L780.7 296.4" fill="none" stroke="#00ff00" stroke-width="1" />
<path d="M933.8 277.1h5l-2 -1.500" fill="none" stroke="#00ff00" stroke-width="1"/>
<path d="M933.2 271.4 L925.5 264.2" fill="none" stroke="#00ff00" stroke-width="1" />
<path d="M913.6 278.4h5l-2 -1.500" fill="none" stroke="#00ff00" stroke-width="1"/>
<path d="M917.1 275.0 L910.3 282.3" fill="none" stroke="#00ff00" stroke-width="1" />
<rect x="890.7" y="208.2" width="1.4" height="2" fill="#ff0000" />
<rect x="890.3" y="211.2" width="3.2" height="5" fill="#ff0000" />
<rect x="890.0" y="217.0" width="2.8" height="4" fill="#ff0000" />
<rect x="783.7" y="345.9" width="1.4" height="2" fill="#ff0000" />
<rect x="782.7" y="348.9" width="3.2" height="5" fill="#ff0000" />
<rect x="783.0" y="354.7" width="3.4" height="4" fill="#ff0000" />
<path d="M779.6 345.4h5l-2 -1.500" fill="none" stroke="#00ff00" stroke-width="1"/>
<rect x="1089.6" y="378.5" width="1.4" height="2" fill="#ff0000" />
<rect x="1088.6" y="381.5" width="3.2" height="5" fill="#ff0000" />
<rect x="1088.3" y="387.3" width="2.8" height="4" fill="#ff0000" />
<path d="M1086.6 385.0h5l-2 -1.500" fill="none" stroke="#00ff00" stroke-width="1"/>
<path d="M953.9 334.1h5l-2 -1.500" fill="none" stroke="#00ff00" stroke-width="1"/>
<path d="M960.2 341.6 L958.5 331.2" fill="none" stroke="#00ff00" stroke-width="1" />
<rect x="815.2" y="219.1" width="1.4" height="2" fill="#ff0000" />
<rect x="814.2" y="222.1" width="3.2" height="5" fill="#ff0000" />
<rect x="814.5" y="227.9" width="3.4" height="4" fill="#ff0000" />
<path d="M814.7 228.0h5l-2 -1.500" fill="none" stroke="#00ff00" stroke-width="1"/>
<path d="M812.8 228.6 L816.7 234.0" fill="none" stroke="#00ff00" stroke-width="1" />
<rect x="722.4" y="312.7" width="1.4" height="2" fill="#ff0000" />
<rect x="721.4" y="315.7" width="3.2" height="5" fill="#ff0000" />
<rect x="721.7" y="321.5" width="3.4" height="4" fill="#ff0000" />
<path d="M957.8 239.8h5l-2 -1.500" fill="none" stroke="#00ff00" stroke-width="1"/>
<path d="M959.8 240.9 L954.8 236.3" fill="none" stroke="#00ff00" stroke-width="1" />
<rect x="848.4" y="253.8" width="1.4" height="2" fill="#ff0000" />
<rect x="847.4" y="256.8" width="3.2" height="5" fill="#ff0000" />
<rect x="847.7" y="262.6" width="3.4" height="4" fill="#ff0000" />
<path d="M841.1 262.2h5l-2 -1.500" fill="none" stroke="#00ff00" stroke-width="1"/>
<path d="M852.0 267.4 L858.7 263.7" fill="none" stroke="#00ff00" stroke-width="1" />
<rect x="856.2" y="230.8" width="1.4" height="2" fill="#ff0000" />
<rect x="855.8" y="233.8" width="3.2" height="5" fill="#ff0000" />
<rect x="855.5" y="239.6" width="2.8" height="4" fill="#ff0000" />
<rect x="672.5" y="270.8" width="1.4" height="2" fill="#ff0000" />
<rect x="671.5" y="273.8" width="3.2" height="5" fill="#ff0000" />
<rect x="671.2" y="279.6" width="2.8" height="4" fill="#ff0000" />
<path d="M665.9 280.5h5l-2 -1.500" fill="none" stroke="#00ff00" stroke-width="1"/>
<path d="M670.4 279.5 L660.9 278.0" fill="none" stroke="#00ff00" stroke-width="1" />
<rect x="856.6" y="307.4" width="1.4" height="2" fill="#ff0000" />
<rect x="855.6" y="310.4" width="3.2" height="5" fill="#ff0000" />
<rect x="855.9" y="316.2" width="3.4" height="4" fill="#ff0000" />
<rect x="930.7" y="202.7" width="1.4" height="2" fill="#ff0000" />
<rect x="930.3" y="205.7" width="3.2" height="5" fill="#ff0000" />
<rect x="930.0" y="211.5" width="2.8" height="4" fill="#ff0000" />
<rect x="821.7" y="206.1" width="1.4" height="2" fill="#ff0000" />
<rect x="821.3" y="209.1" width="3.2" height="5" fill="#ff0000" />
<rect x="821.0" y="214.9" width="2.8" height="4" fill="#ff0000" />
<rect x="962.6" y="311.8" width="1.4" height="2" fill="#ff0000" />
<rect x="961.6" y="314.8" width="3.2" height="5" fill="#ff0000" />
<rect x="961.3" y="320.6" width="2.8" height="4" fill="#ff0000" />
<path d="M963.0 318.0h5l-2 -1.500" fill="none" stroke="#00ff00" stroke-width="1"/>
<rect x="1019.2" y="222.9" width="1.4" height="2" fill="#ff0000" />
<rect x="1018.2" y="225.9" width="3.2" height="5" fill="#ff0000" />
<rect x="1018.5" y="231.7" width="3.4" height="4" fill="#ff0000" />
<path d="M1013.4 230.9h5l-2 -1.500" fill="none" stroke="#00ff00" stroke-width="1"/>
<path d="M1020.4 233.7 L1030.1 232.9" fill="none" stroke="#00ff00" stroke-width="1" />
<rect x="984.0" y="207.6" width="1.4" height="2" fill="#ff0000" />
<rect x="983.6" y="210.6" width="3.2" height="5" fill="#ff0000" />
<rect x="983.3" y="216.4" width="2.8" height="4" fill="#ff0000" />
<rect x="668.6" y="307.0" width="1.4" height="2" fill="#ff0000" />
<rect x="667.6" y="310.0" width="3.2" height="5" fill="#ff0000" />
<rect x="667.9" y="315.8" width="3.4" height="4" fill="#ff0000" />
<rect x="946.3" y="279.7" width="1.4" height="2" fill="#ff0000" />
<rect x="945.9" y="282.7" width="3.2" height="5" fill="#ff0000" />
<rect x="945.6" y="288.5" width="2.8" height="4" fill="#ff0000" />
<path d="M942.9 282.7h5l-2 -1.500" fill="none" stroke="#00ff00" stroke-width="1"/>
<path d="M943.0 286.7 L936.7 284.1" fill="none" stroke="#00ff00" stroke-width="1" />
<rect x="814.4" y="256.0" width="1.4" height="2" fill="#ff0000" />
<rect x="813.4" y="259.0" width="3.2" height="5" fill="#ff0000" />
<rect x="813.7" y="264.8" width="3.4" height="4" fill="#ff0000" />
<rect x="1116.0" y="310.7" width="1.4" height="2" fill="#ff0000" />
<rect x="1115.0" y="313.7" width="3.2" height="5" fill="#ff0000" />
<rect x="1114.7" y="319.5" width="2.8" height="4" fill="#ff0000" />
<rect x="969.7" y="341.4" width="1.4" height="2" fill="#ff0000" />
<rect x="968.7" y="344.4" width="3.2" height="5" fill="#ff0000" />
<rect x="968.4" y="350.2" width="2.8" height="4" fill="#ff0000" />
<rect x="727.3" y="237.4" width="1.4" height="2" fill="#ff0000" />
<rect x="726.9" y="240.4" width="3.2" height="5" fill="#ff0000" />
<rect x="726.6" y="246.2" width="2.8" height="4" fill="#ff0000" />
<path d="M721.3 251.3h5l-2 -1.500" fill="none" stroke="#00ff00" stroke-width="1"/>
<path d="M727.5 250.8 L733.0 242.9" fill="none" stroke="#00ff00" stroke-width="1" />
<path d="M1052.0 408.8 L1054.7 409.0" fill="none" stroke="#00ff00" stroke-width="1" />
<path d="M790.5 253.6h5l-2 -1.500" fill="none" stroke="#00ff00" stroke-width="1"/>
<path d="M792.0 254.0 L796.6 258.0" fill="none" stroke="#00ff00" stroke-width="1" />
<rect x="898.7" y="192.1" width="1.4" height="2" fill="#ff0000" />
<rect x="897.7" y="195.1" width="3.2" height="5" fill="#ff0000" />
<rect x="897.4" y="200.9" width="2.8" height="4" fill="#ff0000" />
<path d="M898.9 193.8h5l-2 -1.500" fill="none" stroke="#00ff00" stroke-width="1"/>
<path d="M839.9 359.7h5l-2 -1.500" fill="none" stroke="#00ff00" stroke-width="1"/>
<path d="M840.5 358.9 L834.7 363.5" fill="none" stroke="#00ff00" stroke-width="1" />
<rect x="1033.5" y="228.9" width="1.4" height="2" fill="#ff0000" />
<rect x="1032.5" y="231.9" width="3.2" height="5" fill="#ff0000" />
<rect x="1032.8" y="237.7" width="3.4" height="4" fill="#ff0000" />
<path d="M1030.4 238.9h5l-2 -1.500" fill="none" stroke="#00ff00" stroke-width="1"/>
<path d="M1037.8 237.0 L1043.2 241.4" fill="none" stroke="#00ff00" stroke-width="1" />
<rect x="749.4" y="208.1" width="1.4" height="2" fill="#ff0000" />
<rect x="749.0" y="211.1" width="3.2" height="5" fill="#ff0000" />
<rect x="748.7" y="216.9" width="2.8" height="4" fill="#ff0000" />
<path d="M746.1 210.0h5l-2 -1.500" fill="none" stroke="#00ff00" stroke-width="1"/>
<rect x="665.2" y="242.2" width="1.4" height="2" fill="#ff0000" />
<rect x="664.2" y="245.2" width="3.2" height="5" fill="#ff0000" />
<rect x="664.5" y="251.0" width="3.4" height="4" fill="#ff0000" />
<path d="M661.8 246.0h5l-2 -1.500" fill="none" stroke="#00ff00" stroke-width="1"/>
<path d="M1060.8 330.4h5l-2 -1.500" fill="none" stroke="#00ff00" stroke-width="1"/>
<path d="M1063.4 335.2 L1070.8 329.2" fill="none" stroke="#00ff00" stroke-width="1" />
<rect x="869.9" y="351.3" width="1.4" height="2" fill="#ff0000" />
<rect x="868.9" y="354.3" width="3.2" height="5" fill="#ff0000" />
<rect x="868.6" y="360.1" width="2.8" height="4" fill="#ff0000" />
<rect x="730.1" y="283.5" width="1.4" height="2" fill="#ff0000" />
<rect x="729.1" y="286.5" width="3.2" height="5" fill="#ff0000" />
<rect x="728.8" y="292.3" width="2.8" height="4" fill="#ff0000" />
<rect x="733.3" y="334.1" width="1.4" height="2" fill="#ff0000" />
<rect x="732.3" y="337.1" width="3.2" height="5" fill="#ff0000" />
<rect x="732.6" y="342.9" width="3.4" height="4" fill="#ff0000" />
<path d="M728.0 346.2h5l-2 -1.500" fill="none" stroke="#00ff00" stroke-width="1"/>
<path d="M962.0 244.0 L963.8 243.8 L967.2 243.2 L972.5 242.5 L979.5 241.5 L986.6 240.9 L993.9 240.6 L1001.2 240.8 L1008.8 241.2 L1016.2 242.1 L1023.8 243.4 L1031.2 245.0 L1038.8 247.0 L1044.4 248.5 L1048.1 249.5 L1050.0 250.0" fill="none" stroke="#00ff00" stroke-width="1" />
<path d="M962.0 249.5 L963.8 249.2 L967.2 248.8 L972.5 248.0 L979.5 247.0 L986.6 246.4 L993.9 246.1 L1001.2 246.2 L1008.8 246.8 L1016.2 247.7 L1023.8 249.1 L1031.2 250.9 L1038.8 253.1 L1044.4 254.8 L1048.1 255.9 L1050.0 256.5" fill="none" stroke="#00ff00" stroke-width="1" stroke-dasharray="1 2"/>
<path d="M962.0 255.0 L963.8 254.8 L967.2 254.2 L972.5 253.5 L979.5 252.5 L986.6 251.9 L993.9 251.6 L1001.2 251.8 L1008.8 252.2 L1016.2 253.2 L1023.8 254.8 L1031.2 256.8 L1038.8 259.2 L1044.4 261.1 L1048.1 262.4 L1050.0 263.0" fill="none" stroke="#00ff00" stroke-width="1" />
<path d="M962.0 260.5 L963.8 260.2 L967.2 259.8 L972.5 259.0 L979.5 258.0 L986.6 257.4 L993.9 257.1 L1001.2 257.2 L1008.8 257.8 L1016.2 258.8 L1023.8 260.4 L1031.2 262.6 L1038.8 265.4 L1044.4 267.4 L1048.1 268.8 L1050.0 269.5" fill="none" stroke="#00ff00" stroke-width="1" stroke-dasharray="1 2"/>
<path d="M962.0 266.0 L963.8 265.8 L967.2 265.2 L972.5 264.5 L979.5 263.5 L986.6 262.9 L993.9 262.6 L1001.2 262.8 L1008.8 263.2 L1016.2 264.4 L1023.8 266.1 L1031.2 268.5 L1038.8 271.5 L1044.4 273.8 L1048.1 275.2 L1050.0 276.0" fill="none" stroke="#00ff00" stroke-width="1" />
<path d="M962.0 271.5 L963.8 271.2 L967.2 270.8 L972.5 270.0 L979.5 269.0 L986.6 268.4 L993.9 268.1 L1001.2 268.2 L1008.8 268.8 L1016.2 269.9 L1023.8 271.8 L1031.2 274.4 L1038.8 277.6 L1044.4 280.1 L1048.1 281.7 L1050.0 282.5" fill="none" stroke="#00ff00" stroke-width="1" stroke-dasharray="1 2"/>
<path d="M577.8 183.8L576.2 187.2L575.3 188.8M569.1 188.0L572.8 188.4L575.3 188.8M524.3 182.8L521.1 182.0L519.7 179.9M524.3 182.8L525.4 184.7L525.2 188.1M525.2 188.1L523.1 192.2L519.0 194.2M551.1 171.7L553.8 166.9L556.4 162.9M551.1 171.7L552.5 173.8L553.2 177.0M558.0 177.5L561.6 174.7L563.5 169.6M560.2 179.8L559.3 178.3L558.0 177.5M568.7 179.8L563.8 180.2L560.2 179.8M546.6 161.5L550.4 161.8L556.1 162.7M575.3 188.8L577.6 189.6L578.1 191.9M537.3 163.8L539.6 165.8L541.7 166.9M532.2 175.5L535.4 174.2L540.2 173.9M540.2 173.9L541.1 172.7L542.5 170.0M541.7 166.9L542.2 167.9L542.5 170.0M524.3 182.8L527.2 180.7L531.6 179.1M531.6 179.1L531.9 177.3L532.2 175.5M546.6 161.5L543.1 165.4L541.7 166.9M553.2 177.0L550.9 179.9L549.3 182.1M549.3 182.1L546.6 182.5L543.6 181.2M543.6 181.2L541.7 177.4L540.2 173.9M551.1 171.7L546.2 170.0L542.5 170.0M534.0 215.0L534.2 214.2L534.8 213.1M543.7 221.2L544.8 217.6L547.8 214.3M547.8 214.3L544.7 211.4L541.1 209.0M534.8 213.1L537.0 210.3L541.1 209.0M524.5 206.6L526.3 205.2L528.3 204.5M534.8 213.1L532.5 207.8L528.3 204.5M569.1 188.0L569.2 187.2L568.4 188.6M568.4 188.6L564.0 188.4L559.8 188.5M531.6 179.1L533.9 182.6L534.5 184.3M530.6 189.4L531.6 187.9L534.5 184.3M543.6 181.2L542.2 183.9L539.2 185.3M534.5 184.3L537.6 184.8L539.2 185.3M547.8 214.3L549.9 214.4L549.9 214.2M549.9 214.2L550.7 216.5L553.6 220.3M559.8 188.5L559.4 188.3L558.3 189.5M549.3 182.1L549.4 184.5L550.2 184.6M558.3 189.5L553.7 187.0L550.2 184.6M540.7 190.8L539.8 188.3L539.2 185.3M546.9 191.8L549.5 187.6L550.2 184.6M532.1 193.3L529.3 195.4L527.3 198.5M527.3 198.5L527.7 201.6L528.8 203.0M528.8 203.0L534.3 201.8L539.2 200.7M539.2 200.7L538.1 197.4L537.6 195.0M530.6 189.4L530.4 191.3L532.1 193.3M540.7 190.8L540.2 193.5L537.6 195.0M541.9 203.1L542.1 206.3L541.1 209.0M541.9 203.1L539.5 200.9L539.2 200.7M599.4 211.7L597.4 212.6L594.5 212.7M594.8 204.0L592.6 206.2L591.8 206.4M594.5 212.7L592.5 209.1L591.8 206.4M594.5 212.7L592.5 213.2L592.8 216.0M589.4 195.4L588.8 197.3L586.9 197.9M586.9 197.9L581.7 197.0L578.1 197.4M591.8 206.4L590.4 205.7L587.3 205.8M585.4 216.0L585.4 210.6L585.2 207.2M549.9 214.2L553.7 212.7L555.3 209.3M562.8 218.4L563.9 217.2L562.8 213.9M555.3 209.3L559.4 210.8L562.8 213.9M576.0 200.3L575.7 202.0L577.3 205.6M576.0 200.3L573.0 199.8L567.9 198.6M577.3 205.6L574.7 208.4L573.8 211.0M567.9 198.6L565.5 198.3L564.7 200.4M564.7 200.4L566.7 204.6L567.5 210.4M573.8 211.0L570.0 211.9L567.5 210.4M578.1 197.4L575.9 197.7L576.0 200.3M568.4 188.6L567.6 192.7L567.9 198.6M576.0 216.0L573.9 213.3L573.8 211.0M562.8 213.9L565.3 211.7L567.5 210.4M555.1 205.6L558.6 202.2L561.8 200.1M555.1 205.6L552.0 202.9L548.2 200.6M548.2 200.6L548.2 199.5L549.4 196.2M557.5 192.9L559.7 196.1L561.8 200.1M555.3 209.3L554.2 208.2L555.1 205.6M564.7 200.4L562.7 200.5L561.8 200.1M541.9 203.1L544.2 201.2L548.2 200.6M546.9 191.8L548.9 193.4L549.4 196.2M558.3 189.5L557.8 191.1L557.5 192.9" fill="none" stroke="#00ff00" stroke-width="1"/>
<path d="M495.0 191.5 L548.0 154.0" fill="none" stroke="#00ff00" stroke-width="1" />
<rect x="544.4" y="170.5" width="1.4" height="2" fill="#ff0000" />
<rect x="543.4" y="173.5" width="3.2" height="5" fill="#ff0000" />
<rect x="543.1" y="179.3" width="2.8" height="4.4" fill="#ff0000" />
<rect x="528.4" y="181.5" width="1.4" height="2" fill="#ff0000" />
<rect x="528.0" y="184.5" width="3.2" height="5" fill="#ff0000" />
<rect x="527.7" y="190.3" width="2.8" height="4.4" fill="#ff0000" />
<rect x="552.4" y="197.5" width="1.4" height="2" fill="#ff0000" />
<rect x="552.0" y="200.5" width="3.2" height="5" fill="#ff0000" />
<rect x="551.7" y="206.3" width="2.8" height="4.4" fill="#ff0000" />
<path d="M590.3 359.9h5l-2 -1.500" fill="none" stroke="#00ff00" stroke-width="1"/>
<path d="M608.8 366.4h5l-2 -1.500" fill="none" stroke="#00ff00" stroke-width="1"/>
<path d="M644.6 307.2h5l-2 -1.500" fill="none" stroke="#00ff00" stroke-width="1"/>
<path d="M558.8 392.1h5l-2 -1.500" fill="none" stroke="#00ff00" stroke-width="1"/>
<path d="M674.1 352.4h5l-2 -1.500" fill="none" stroke="#00ff00" stroke-width="1"/>
<path d="M645.9 395.5h5l-2 -1.500" fill="none" stroke="#00ff00" stroke-width="1"/>
<path d="M630.2 381.5h5l-2 -1.500" fill="none" stroke="#00ff00" stroke-width="1"/>
<path d="M663.2 365.0h5l-2 -1.500" fill="none" stroke="#00ff00" stroke-width="1"/>
<path d="M612.3 388.1h5l-2 -1.500" fill="none" stroke="#00ff00" stroke-width="1"/>
<path d="M619.2 402.9h5l-2 -1.500" fill="none" stroke="#00ff00" stroke-width="1"/>
<path d="M644.7 333.1h5l-2 -1.500" fill="none" stroke="#00ff00" stroke-width="1"/>
<path d="M628.0 342.4h5l-2 -1.500" fill="none" stroke="#00ff00" stroke-width="1"/>
<path d="M656.9 323.2h5l-2 -1.500" fill="none" stroke="#00ff00" stroke-width="1"/>
<path d="M584.6 344.9h5l-2 -1.500" fill="none" stroke="#00ff00" stroke-width="1"/>
<path d="M621.5 357.2h5l-2 -1.500" fill="none" stroke="#00ff00" stroke-width="1"/>
<path d="M647.1 365.5h5l-2 -1.500" fill="none" stroke="#00ff00" stroke-width="1"/>
<path d="M656.0 381.2h5l-2 -1.500" fill="none" stroke="#00ff00" stroke-width="1"/>
<path d="M608.0 334.4h5l-2 -1.500" fill="none" stroke="#00ff00" stroke-width="1"/>
<path d="M631.1 321.0h5l-2 -1.500" fill="none" stroke="#00ff00" stroke-width="1"/>
<path d="M669.9 338.0h5l-2 -1.500" fill="none" stroke="#00ff00" stroke-width="1"/>
<path d="M683.5 376.3h5l-2 -1.500" fill="none" stroke="#00ff00" stroke-width="1"/>
<path d="M581.0 387.1h5l-2 -1.500" fill="none" stroke="#00ff00" stroke-width="1"/>
<path d="M574.3 361.1h5l-2 -1.500" fill="none" stroke="#00ff00" stroke-width="1"/>
<path d="M598.4 377.6h5l-2 -1.500" fill="none" stroke="#00ff00" stroke-width="1"/>
<path d="M647.6 350.3h5l-2 -1.500" fill="none" stroke="#00ff00" stroke-width="1"/>
<path d="M566.6 378.7h5l-2 -1.500" fill="none" stroke="#00ff00" stroke-width="1"/>
<path d="M606.3 350.0h5l-2 -1.500" fill="none" stroke="#00ff00" stroke-width="1"/>
<path d="M691.5 358.8h5l-2 -1.500" fill="none" stroke="#00ff00" stroke-width="1"/>
<rect x="549.4" y="254.5" width="1.4" height="2" fill="#ff0000" />
<rect x="549.0" y="257.5" width="3.2" height="5" fill="#ff0000" />
<rect x="548.7" y="263.3" width="2.8" height="4.4" fill="#ff0000" />
<rect x="592.4" y="260.9" width="1.4" height="2" fill="#ff0000" />
<rect x="591.4" y="263.9" width="3.2" height="5" fill="#ff0000" />
<rect x="591.7" y="269.7" width="3.4" height="4.4" fill="#ff0000" />
<rect x="624.4" y="265.4" width="1.4" height="2" fill="#ff0000" />
<rect x="623.4" y="268.4" width="3.2" height="5" fill="#ff0000" />
<rect x="623.7" y="274.2" width="3.4" height="4.4" fill="#ff0000" />
<rect x="554.0" y="279.5" width="1.4" height="2" fill="#ff0000" />
<rect x="553.0" y="282.5" width="3.2" height="5" fill="#ff0000" />
<rect x="553.3" y="288.3" width="3.4" height="4.4" fill="#ff0000" />
<rect x="603.1" y="287.5" width="1.4" height="2" fill="#ff0000" />
<rect x="602.7" y="290.5" width="3.2" height="5" fill="#ff0000" />
<rect x="602.4" y="296.3" width="2.8" height="4.4" fill="#ff0000" />
<rect x="644.2" y="292.1" width="1.4" height="2" fill="#ff0000" />
<rect x="643.2" y="295.1" width="3.2" height="5" fill="#ff0000" />
<rect x="643.5" y="300.9" width="3.4" height="4.4" fill="#ff0000" />
<rect x="600.4" y="312.5" width="1.4" height="2" fill="#ff0000" />
<rect x="600.0" y="315.5" width="3.2" height="5" fill="#ff0000" />
<rect x="599.7" y="321.3" width="2.8" height="4.4" fill="#ff0000" />
<rect x="556.4" y="333.2" width="1.4" height="2" fill="#ff0000" />
<rect x="556.0" y="336.2" width="3.2" height="5" fill="#ff0000" />
<rect x="555.7" y="342.0" width="2.8" height="4.4" fill="#ff0000" />
<rect x="612.9" y="331.5" width="1.4" height="2" fill="#ff0000" />
<rect x="612.5" y="334.5" width="3.2" height="5" fill="#ff0000" />
<rect x="612.2" y="340.3" width="2.8" height="4.4" fill="#ff0000" />
<rect x="586.1" y="347.5" width="1.4" height="2" fill="#ff0000" />
<rect x="585.1" y="350.5" width="3.2" height="5" fill="#ff0000" />
<rect x="584.8" y="356.3" width="2.8" height="4.4" fill="#ff0000" />
<rect x="607.4" y="361.5" width="1.4" height="2" fill="#ff0000" />
<rect x="606.4" y="364.5" width="3.2" height="5" fill="#ff0000" />
<rect x="606.1" y="370.3" width="2.8" height="4.4" fill="#ff0000" />
<rect x="637.0" y="360.9" width="1.4" height="2" fill="#ff0000" />
<rect x="636.0" y="363.9" width="3.2" height="5" fill="#ff0000" />
<rect x="636.3" y="369.7" width="3.4" height="4.4" fill="#ff0000" />
<rect x="554.0" y="370.5" width="1.4" height="2" fill="#ff0000" />
<rect x="553.0" y="373.5" width="3.2" height="5" fill="#ff0000" />
<rect x="553.3" y="379.3" width="3.4" height="4.4" fill="#ff0000" />
<rect x="559.4" y="367.1" width="1.4" height="2" fill="#ff0000" />
<rect x="558.4" y="370.1" width="3.2" height="5" fill="#ff0000" />
<rect x="558.7" y="375.9" width="3.4" height="4.4" fill="#ff0000" />
<rect x="562.9" y="385.0" width="1.4" height="2" fill="#ff0000" />
<rect x="562.5" y="388.0" width="3.2" height="5" fill="#ff0000" />
<rect x="562.2" y="393.8" width="2.8" height="4.4" fill="#ff0000" />
<rect x="579.9" y="378.5" width="1.4" height="2" fill="#ff0000" />
<rect x="579.5" y="381.5" width="3.2" height="5" fill="#ff0000" />
<rect x="579.2" y="387.3" width="2.8" height="4.4" fill="#ff0000" />
<rect x="542.4" y="390.4" width="1.4" height="2" fill="#ff0000" />
<rect x="541.4" y="393.4" width="3.2" height="5" fill="#ff0000" />
<rect x="541.1" y="399.2" width="2.8" height="4.4" fill="#ff0000" />
<rect x="645.9" y="384.1" width="1.4" height="2" fill="#ff0000" />
<rect x="644.9" y="387.1" width="3.2" height="5" fill="#ff0000" />
<rect x="645.2" y="392.9" width="3.4" height="4.4" fill="#ff0000" />
<rect x="571.8" y="397.5" width="1.4" height="2" fill="#ff0000" />
<rect x="571.4" y="400.5" width="3.2" height="5" fill="#ff0000" />
<rect x="571.1" y="406.3" width="2.8" height="4.4" fill="#ff0000" />
<rect x="537.9" y="396.5" width="1.4" height="2" fill="#ff0000" />
<rect x="537.5" y="399.5" width="3.2" height="5" fill="#ff0000" />
<rect x="537.2" y="405.3" width="2.8" height="4.4" fill="#ff0000" />
<rect x="619.4" y="344.5" width="1.4" height="2" fill="#ff0000" />
<rect x="618.4" y="347.5" width="3.2" height="5" fill="#ff0000" />
<rect x="618.1" y="353.3" width="2.8" height="4.4" fill="#ff0000" />
<rect x="659.4" y="337.5" width="1.4" height="2" fill="#ff0000" />
<rect x="658.4" y="340.5" width="3.2" height="5" fill="#ff0000" />
<rect x="658.7" y="346.3" width="3.4" height="4.4" fill="#ff0000" />
<rect x="667.4" y="364.5" width="1.4" height="2" fill="#ff0000" />
<rect x="666.4" y="367.5" width="3.2" height="5" fill="#ff0000" />
<rect x="666.1" y="373.3" width="2.8" height="4.4" fill="#ff0000" />
<rect x="639.4" y="327.5" width="1.4" height="2" fill="#ff0000" />
<rect x="639.0" y="330.5" width="3.2" height="5" fill="#ff0000" />
<rect x="638.7" y="336.3" width="2.8" height="4.4" fill="#ff0000" />
<path d="M576.7 396.5 L669.3 328.5" fill="none" stroke="#00ff00" stroke-width="1" stroke-dasharray="5 2"/>
<path d="M542.0 372.0 L556.0 362.0 L566.0 352.0 L580.0 344.0" fill="none" stroke="#00ff00" stroke-width="1" />
<path d="M548.0 386.0 L560.0 376.0 L574.0 372.0" fill="none" stroke="#00ff00" stroke-width="1" />
<path d="M500.0 400.0 L512.0 385.0 L520.0 372.0 L530.0 360.0 L545.0 350.0" fill="none" stroke="#00ff00" stroke-width="1" />
<path d="M556.0 228.0 L580.0 232.0 L610.0 244.0 L630.0 262.0 L640.0 275.0" fill="none" stroke="#00ff00" stroke-width="1" />
<path d="M533.0 268.4 L567.0 308.6 L522.4 348.0 L491.0 305.0 Z" fill="none" stroke="#ff0000" stroke-width="1" />
<path d="M532.5 271.5 L563.5 308.5 L522.4 344.5 L494.5 305.2 Z" fill="none" stroke="#000000" stroke-width="1" />
<path d="M532.0 274.5 L560.0 308.5 L522.4 341.0 L498.0 305.4 Z" fill="none" stroke="#000000" stroke-width="1" />
<path d="M531.0 272.5 L564.0 309.0" fill="none" stroke="#000000" stroke-width="7" stroke-dasharray="2 1"/>
<path d="M564.0 310.5 L542.0 324.0" fill="none" stroke="#000000" stroke-width="5" stroke-dasharray="2 1"/>
<path d="M531.0 273.0 L563.0 308.5" fill="none" stroke="#fff" stroke-width="1" stroke-dasharray="1.500 2.500"/>
<path d="M533.0 276.0 L561.0 307.0" fill="none" stroke="#ffff00" stroke-width="1" stroke-dasharray="1 3"/>
<path d="M529.5 274.0 L558.0 306.0" fill="none" stroke="#ff00ff" stroke-width="1" stroke-dasharray="1 4"/>
<path d="M560.0 312.0 L544.0 322.0" fill="none" stroke="#ffff00" stroke-width="1" stroke-dasharray="1 2"/>
<path d="M504.6 314.0 L516.2 306.0 L535.0 326.4 L523.3 334.5 Z" fill="#ff0000" stroke="#ff0000" stroke-width="1" />
<path d="M509.0 314.5 L526.0 332.0" fill="none" stroke="#fff" stroke-width="1" stroke-dasharray="2 2"/>
<path d="M513.0 311.5 L530.0 329.0" fill="none" stroke="#fff" stroke-width="1" stroke-dasharray="2 2"/>
<path d="M502.8 312.0 L513.5 303.2 L520.6 303.2 L538.5 326.4" fill="none" stroke="#000000" stroke-width="1" />
<path d="M495.0 362.5 L540.0 328.5" fill="none" stroke="#000000" stroke-width="1" />
<path d="M554.6 290.7 L572.4 281.8 L581.4 264.0" fill="none" stroke="#ff0000" stroke-width="1" />
<path d="M560.0 297.9 L579.6 287.0 L586.7 265.7" fill="none" stroke="#ff0000" stroke-width="1" />
<path d="M557.5 294.3 L576.0 284.4 L584.0 265.0" fill="none" stroke="#000000" stroke-width="3" stroke-dasharray="1 1"/>
<path d="M507.3 193.0 L530.5 272.0" fill="none" stroke="#000000" stroke-width="1" />
<path d="M538.0 196.0 L598.5 210.0" fill="none" stroke="#000000" stroke-width="1" />
<path d="M538.0 196.0 L550.0 224.5 L516.0 239.5 L511.5 243.0 L483.0 277.0 L477.0 286.0" fill="none" stroke="#000000" stroke-width="1" />
<path d="M552.0 325.7 L620.0 363.0" fill="none" stroke="#000000" stroke-width="1" />
<path d="M564.5 313.5 L624.0 384.0" fill="none" stroke="#000000" stroke-width="1" />
<path d="M747.0 237.5 L755.5 276.0 L771.0 364.0" fill="none" stroke="#000000" stroke-width="1" />
<path d="M771.5 364.5 L972.3 234.7" fill="none" stroke="#000000" stroke-width="1" />
<path d="M1158.7 281.5 L1115.2 378.8" fill="none" stroke="#000000" stroke-width="1" />
<path d="M572.0 203.0 L584.0 205.0 L584.0 215.0 L572.0 214.0 Z" fill="none" stroke="#ff00ff" stroke-width="1" />
<path d="M589.0 209.0 L597.0 209.0 L597.0 216.0 L589.0 216.0 Z" fill="none" stroke="#ff00ff" stroke-width="1" />
<path d="M551.0 215.0 L576.0 216.0 L575.0 223.0 L551.0 223.0 Z" fill="none" stroke="#ff00ff" stroke-width="1" />
<path d="M583.0 225.0 L599.0 226.0 L599.0 234.0 L583.0 233.0 Z" fill="none" stroke="#ff00ff" stroke-width="1" />
<path d="M541.0 232.0 L565.0 233.0 L566.0 243.0 L541.0 241.0 Z" fill="none" stroke="#ff00ff" stroke-width="1" />
<path d="M601.0 229.0 L616.0 230.0 L616.0 241.0 L602.0 240.0 Z" fill="none" stroke="#ff00ff" stroke-width="1" />
<path d="M611.0 242.0 L620.0 242.0 L620.0 250.0 L611.0 250.0 Z" fill="none" stroke="#ff00ff" stroke-width="1" />
<path d="M546.0 250.0 L556.0 250.0 L556.0 263.0 L546.0 263.0 Z" fill="none" stroke="#ff00ff" stroke-width="1" />
<rect x="573.2" y="204.5" width="4.6" height="4.6" fill="#000000" />
<rect x="577.3" y="210.0" width="4.6" height="4.6" fill="#000000" />
<rect x="590.8" y="210.4" width="4.6" height="4.6" fill="#000000" />
<rect x="590.2" y="217.5" width="4.6" height="4.6" fill="#000000" />
<rect x="553.4" y="216.8" width="4.6" height="4.6" fill="#000000" />
<rect x="560.9" y="217.1" width="4.6" height="4.6" fill="#000000" />
<rect x="569.1" y="217.1" width="4.6" height="4.6" fill="#000000" />
<rect x="568.4" y="226.3" width="4.6" height="4.6" fill="#000000" />
<rect x="576.2" y="227.3" width="4.6" height="4.6" fill="#000000" />
<rect x="585.2" y="226.7" width="4.6" height="4.6" fill="#000000" />
<rect x="593.3" y="228.4" width="4.6" height="4.6" fill="#000000" />
<rect x="609.9" y="230.4" width="4.6" height="4.6" fill="#000000" />
<rect x="603.1" y="233.1" width="4.6" height="4.6" fill="#000000" />
<rect x="607.9" y="235.8" width="4.6" height="4.6" fill="#000000" />
<rect x="612.9" y="243.6" width="4.6" height="4.6" fill="#000000" />
<rect x="541.9" y="234.1" width="4.6" height="4.6" fill="#000000" />
<rect x="546.6" y="232.7" width="4.6" height="4.6" fill="#000000" />
<rect x="552.8" y="231.1" width="4.6" height="4.6" fill="#000000" />
<rect x="552.1" y="236.5" width="4.6" height="4.6" fill="#000000" />
<rect x="559.3" y="237.2" width="4.6" height="4.6" fill="#000000" />
<rect x="550.0" y="251.5" width="4.6" height="4.6" fill="#000000" />
<rect x="547.3" y="257.6" width="4.6" height="4.6" fill="#000000" />
<rect x="552.4" y="183.5" width="1.4" height="2" fill="#ff0000" />
<rect x="552.0" y="186.5" width="3.2" height="5" fill="#ff0000" />
<rect x="551.7" y="192.3" width="2.8" height="4.8" fill="#ff0000" />
<rect x="577.4" y="224.5" width="1.4" height="2" fill="#ff0000" />
<rect x="576.4" y="227.5" width="3.2" height="5" fill="#ff0000" />
<rect x="576.1" y="233.3" width="2.8" height="4.8" fill="#ff0000" />
<rect x="581.4" y="242.5" width="1.4" height="2" fill="#ff0000" />
<rect x="580.4" y="245.5" width="3.2" height="5" fill="#ff0000" />
<rect x="580.7" y="251.3" width="3.4" height="4.8" fill="#ff0000" />
<rect x="550.4" y="257.5" width="1.4" height="2" fill="#ff0000" />
<rect x="549.4" y="260.5" width="3.2" height="5" fill="#ff0000" />
<rect x="549.1" y="266.3" width="2.8" height="4.8" fill="#ff0000" />
<rect x="590.4" y="254.5" width="1.4" height="2" fill="#ff0000" />
<rect x="589.4" y="257.5" width="3.2" height="5" fill="#ff0000" />
<rect x="589.7" y="263.3" width="3.4" height="4.8" fill="#ff0000" />
<rect x="624.4" y="260.5" width="1.4" height="2" fill="#ff0000" />
<rect x="624.0" y="263.5" width="3.2" height="5" fill="#ff0000" />
<rect x="623.7" y="269.3" width="2.8" height="4.8" fill="#ff0000" />
<path d="M574.2 253.2 L592.0 256.8 L587.6 263.0 L578.7 263.0 Z" fill="none" stroke="#0000ff" stroke-width="1.6" />
<path d="M578.0 255.0 L582.0 262.0 L588.0 257.0" fill="none" stroke="#000000" stroke-width="1" />
<rect x="624.0" y="240.0" width="3.2" height="11" fill="#000000" transform="rotate(-8 625 245)"/>
<rect x="634.0" y="248.0" width="3.2" height="15" fill="#000000" transform="rotate(-4 635 255)"/>
<path d="M690.0 232.0 L692.5 232.2 L697.5 232.8 L702.0 233.1 L706.0 233.4 L709.5 232.6 L712.5 230.9 L715.2 228.8 L717.8 226.2 L719.0 225.0" fill="none" stroke="#0000ff" stroke-width="1" />
<path d="M655.3 238.7 L655.7 239.4 L656.3 240.9 L657.2 243.2 L658.5 246.2 L659.6 249.1 L660.5 252.0 L661.4 255.0 L662.1 257.8 L662.3 260.4 L662.1 262.8 L661.4 265.1 L660.3 267.4 L659.3 269.3 L658.7 270.6 L658.4 271.2" fill="none" stroke="#00ffff" stroke-width="1" />
<path d="M657.0 238.0 L657.3 238.8 L657.9 240.2 L658.9 242.5 L660.1 245.5 L661.2 248.5 L662.2 251.5 L663.1 254.5 L663.9 257.5 L664.1 260.4 L663.9 263.1 L663.1 265.8 L661.9 268.2 L660.9 270.1 L660.3 271.4 L660.0 272.0" fill="none" stroke="#00ffff" stroke-width="1" />
<path d="M686.4 234.2 L685.9 235.1 L684.9 237.0 L683.4 239.8 L681.4 243.5 L679.4 247.0 L677.5 250.4 L675.5 253.5 L673.6 256.4 L671.1 259.3 L668.1 262.4 L664.5 265.5 L660.3 268.7 L656.2 271.8 L652.2 274.8 L648.3 277.7 L644.6 280.4 L641.7 282.5 L639.9 283.9 L638.9 284.5" fill="none" stroke="#0000ff" stroke-width="1" />
<path d="M688.0 235.0 L687.5 235.9 L686.5 237.8 L685.0 240.6 L683.0 244.4 L681.0 247.9 L679.0 251.3 L677.0 254.5 L675.0 257.5 L672.4 260.6 L669.3 263.7 L665.6 266.9 L661.4 270.1 L657.2 273.2 L653.2 276.2 L649.4 279.1 L645.6 281.9 L642.8 283.9 L640.9 285.3 L640.0 286.0" fill="none" stroke="#00ffff" stroke-width="1" />
<path d="M639.4 280.8 L699.3 368.0" fill="none" stroke="#00ffff" stroke-width="1" />
<path d="M643.0 279.0 L702.0 366.0" fill="none" stroke="#00ffff" stroke-width="1" />
<path d="M646.2 297.0 L699.3 372.0 L700.0 385.0" fill="none" stroke="#0000ff" stroke-width="1" />
<path d="M636.0 283.0 L696.0 371.0" fill="none" stroke="#00ff00" stroke-width="1" />
<path d="M641.4 291.7 L637.5 294.6 L629.6 300.4 L618.2 308.6 L603.3 319.1 L594.1 327.8 L590.7 334.6 L585.2 341.6 L577.8 348.7 L570.2 354.5 L562.8 358.8 L558.3 363.1 L557.0 367.2 L555.8 372.4 L554.8 378.4 L546.0 385.2 L529.3 392.8 L516.5 400.2 L507.6 407.8 L503.2 411.5" fill="none" stroke="#0000ff" stroke-width="1" />
<path d="M556.1 362.4 L555.8 367.5 L555.1 378.1 L558.5 386.4 L565.5 391.2 L568.9 395.5 L569.6 400.4 L574.0 403.6 L580.5 403.6 L583.5 403.6" fill="none" stroke="#00ff00" stroke-width="1" />
<path d="M557.7 362.5 L557.4 367.6 L556.6 377.9 L559.7 385.4 L566.6 390.0 L570.3 394.8 L571.0 399.6 L574.3 402.0 L580.5 402.0 L583.5 402.0" fill="none" stroke="#0000ff" stroke-width="1" />
<path d="M514.0 411.0 L515.0 410.3 L517.0 408.9 L520.0 406.9 L524.0 404.1 L528.4 401.6 L533.1 399.2 L538.2 397.0 L543.8 395.0 L548.8 393.4 L553.2 392.1 L557.2 391.2 L560.8 390.8 L563.4 390.4 L565.1 390.1 L566.0 390.0" fill="none" stroke="#0000ff" stroke-width="1" />
<path d="M735.8 281.9 L734.1 282.1 L730.5 282.4 L725.1 283.0 L717.9 283.7 L711.2 284.8 L705.2 286.4 L699.6 288.4 L694.9 290.8 L689.6 293.0 L683.7 295.2 L677.2 297.3 L670.1 299.4 L664.7 300.9 L661.1 301.9 L659.4 302.5" fill="none" stroke="#00ffff" stroke-width="1" />
<path d="M736.0 283.5 L734.2 283.7 L730.6 284.0 L725.3 284.5 L718.1 285.2 L711.6 286.4 L705.6 287.9 L700.3 289.9 L695.5 292.2 L690.2 294.5 L684.2 296.7 L677.7 298.9 L670.5 300.9 L665.2 302.5 L661.6 303.5 L659.8 304.0" fill="none" stroke="#00ffff" stroke-width="1" />
<path d="M661.0 306.0 L662.7 305.5 L666.1 304.5 L671.3 302.9 L678.1 300.9 L683.6 300.4 L687.7 301.5 L690.4 304.2 L691.8 308.4 L692.4 312.6 L692.4 316.6 L691.6 320.5 L690.2 324.3 L689.5 328.1 L689.5 331.9 L690.2 335.6 L691.8 339.4 L693.6 342.6 L695.9 345.2 L698.5 347.2 L701.5 348.8 L703.8 349.9 L705.2 350.6 L706.0 351.0" fill="none" stroke="#0000ff" stroke-width="1" />
<path d="M647.0 385.3 L648.7 381.5 L652.1 373.9 L654.3 367.1 L655.0 361.8 L655.9 359.9 L657.1 359.7 L661.7 360.3 L669.3 362.4 L677.3 362.7 L685.3 361.4 L693.4 358.6 L701.6 354.4 L707.7 352.2 L712.8 351.4 L717.7 347.8 L720.9 342.5 L725.2 340.3 L732.2 340.4 L736.0 340.4" fill="none" stroke="#00ff00" stroke-width="1" />
<path d="M642.6 383.3 L644.3 379.6 L647.7 372.2 L649.6 366.0 L650.3 360.5 L652.8 356.2 L657.0 355.0 L662.6 355.7 L670.0 357.6 L677.0 358.0 L684.0 356.7 L691.5 354.1 L699.7 350.1 L706.4 347.6 L710.9 347.0 L714.1 344.6 L717.7 339.0 L724.3 335.7 L732.2 335.6 L736.0 335.6" fill="none" stroke="#00ff00" stroke-width="1" />
<path d="M645.6 384.7 L647.3 380.9 L650.7 373.4 L652.8 366.8 L653.5 361.4 L654.9 358.7 L657.1 358.2 L662.0 358.9 L669.5 360.9 L677.2 361.2 L684.9 359.9 L692.8 357.2 L701.0 353.1 L707.3 350.7 L712.2 350.1 L716.6 346.8 L719.9 341.4 L724.9 338.9 L732.2 338.9 L736.0 338.9" fill="none" stroke="#0000ff" stroke-width="1" />
<path d="M644.0 383.9 L645.7 380.2 L649.1 372.7 L651.1 366.4 L651.8 360.9 L653.8 357.4 L657.0 356.5 L662.3 357.1 L669.8 359.1 L677.1 359.5 L684.4 358.2 L692.1 355.5 L700.3 351.4 L706.8 349.0 L711.5 348.4 L715.2 345.6 L718.7 340.1 L724.6 337.1 L732.2 337.1 L736.0 337.1" fill="none" stroke="#0000ff" stroke-width="1" />
<path d="M644.0 386.0 L650.0 380.0" fill="none" stroke="#0000ff" stroke-width="3" />
<path d="M730.0 285.1 L736.8 284.9 L750.5 284.6 L761.8 283.5 L770.7 281.8 L779.8 280.8 L789.2 280.5 L798.4 280.7 L807.3 281.4 L814.2 280.5 L818.7 277.9 L825.0 272.5 L833.3 264.4 L839.8 257.2 L844.6 250.9 L847.8 245.5 L849.1 241.5 L851.1 239.0 L854.1 237.3 L857.4 236.5 L861.3 236.5 L863.4 236.5" fill="none" stroke="#00ffff" stroke-width="1" />
<path d="M730.0 283.5 L736.8 283.3 L750.4 283.0 L761.6 282.0 L770.5 280.2 L779.7 279.2 L789.2 279.0 L798.4 279.1 L807.3 279.8 L813.7 278.9 L817.8 276.6 L823.9 271.3 L832.1 263.2 L838.6 256.1 L843.3 250.0 L846.4 244.9 L847.7 240.7 L850.1 237.7 L853.5 235.9 L857.3 234.9 L861.3 234.9 L863.4 234.9" fill="none" stroke="#00ffff" stroke-width="1" />
<path d="M730.0 286.0 L736.1 286.4 L748.4 287.2 L759.6 286.2 L769.9 283.4 L779.8 281.9 L789.2 281.6 L798.5 281.9 L807.5 282.6 L814.5 281.8 L819.5 279.2 L826.0 274.0 L834.0 266.0 L840.5 258.8 L845.5 252.2 L848.0 249.0" fill="none" stroke="#0000ff" stroke-width="1" />
<path d="M731.7 364.2 L733.4 362.5 L737.2 358.5 L738.5 352.5 L737.1 346.4 L737.7 343.8 L739.9 342.6 L742.6 342.4 L745.8 343.4 L748.2 345.4 L750.4 349.4 L755.8 352.4 L764.0 353.4 L769.9 348.3 L772.0 339.2 L775.2 334.3 L779.9 332.1 L786.2 329.8 L793.1 327.8 L797.2 328.5 L800.3 332.3 L804.8 334.5 L810.2 333.4 L812.4 328.3 L811.7 322.1 L812.6 317.3 L815.0 313.2 L817.2 311.2 L818.7 310.6 L820.9 312.8 L824.3 319.5 L829.3 324.9 L835.4 328.0 L841.6 329.1 L847.5 328.4 L854.6 326.7 L862.6 324.0 L868.2 323.0 L871.2 323.4 L873.3 325.4 L875.2 329.8 L877.6 335.2 L880.3 341.3 L882.6 346.8 L884.7 351.5 L885.7 353.9" fill="none" stroke="#00ff00" stroke-width="1" />
<path d="M728.3 360.8 L730.0 359.1 L733.0 356.3 L733.7 352.7 L732.3 346.6 L733.8 341.0 L738.4 338.0 L743.2 337.6 L748.1 339.2 L751.9 342.4 L753.7 346.0 L757.2 347.8 L762.8 348.8 L765.7 346.1 L767.6 337.5 L771.9 330.8 L778.0 327.6 L784.7 325.2 L792.8 323.0 L799.6 324.3 L803.3 328.6 L805.6 329.8 L807.0 329.7 L807.6 327.9 L806.9 321.9 L808.1 315.7 L811.1 310.3 L815.0 306.9 L820.3 306.1 L824.9 310.0 L828.3 316.9 L832.2 321.1 L837.0 323.5 L841.7 324.4 L846.6 323.7 L853.2 322.0 L861.4 319.3 L868.1 318.2 L873.3 319.1 L877.3 322.6 L879.6 327.8 L881.9 333.3 L884.6 339.4 L887.0 344.8 L889.1 349.7 L890.1 352.1" fill="none" stroke="#00ff00" stroke-width="1" />
<path d="M730.6 363.1 L732.3 361.4 L735.9 357.8 L737.0 352.6 L735.6 346.4 L736.5 342.9 L739.5 341.2 L742.8 340.9 L746.5 342.1 L749.3 344.5 L751.5 348.4 L756.3 351.0 L763.6 352.0 L768.6 347.6 L770.6 338.7 L774.1 333.2 L779.3 330.7 L785.7 328.3 L793.0 326.3 L798.0 327.2 L801.2 331.2 L805.1 333.1 L809.2 332.2 L810.9 328.2 L810.2 322.0 L811.2 316.8 L813.8 312.3 L816.5 309.8 L819.2 309.2 L822.2 311.9 L825.6 318.7 L830.2 323.7 L835.9 326.6 L841.6 327.6 L847.2 326.9 L854.1 325.2 L862.3 322.5 L868.2 321.5 L871.9 322.1 L874.6 324.5 L876.5 329.2 L878.9 334.6 L881.6 340.7 L884.0 346.2 L886.0 351.0 L887.1 353.4" fill="none" stroke="#0000ff" stroke-width="1" />
<path d="M729.4 361.9 L731.1 360.2 L734.3 357.0 L735.2 352.7 L733.8 346.5 L735.0 341.8 L738.9 339.5 L743.0 339.1 L747.4 340.5 L750.7 343.3 L752.7 347.0 L756.8 349.2 L763.1 350.2 L767.0 346.8 L769.0 338.0 L772.9 331.9 L778.6 329.0 L785.2 326.6 L792.9 324.5 L798.8 325.6 L802.4 329.8 L805.3 331.3 L808.0 330.8 L809.1 328.1 L808.4 321.9 L809.5 316.2 L812.3 311.2 L815.7 308.3 L819.8 307.5 L823.6 310.9 L827.0 317.7 L831.3 322.3 L836.5 324.9 L841.7 325.9 L846.9 325.2 L853.6 323.5 L861.8 320.8 L868.1 319.7 L872.6 320.5 L876.1 323.5 L878.2 328.4 L880.6 333.9 L883.3 340.0 L885.7 345.4 L887.7 350.2 L888.7 352.6" fill="none" stroke="#0000ff" stroke-width="1" />
<path d="M822.1 307.4 L822.8 305.0 L824.0 300.7 L825.7 298.9 L828.6 298.5 L832.6 299.4 L838.0 302.1 L847.1 304.9 L859.7 307.7 L868.2 306.8 L871.5 301.1 L872.6 292.5 L872.6 280.1 L872.6 274.0" fill="none" stroke="#00ff00" stroke-width="1" />
<path d="M817.5 306.0 L818.2 303.6 L819.8 298.3 L823.6 294.6 L828.8 293.7 L834.2 294.9 L839.7 297.6 L848.3 300.3 L860.2 302.9 L866.0 302.5 L866.8 300.0 L867.8 292.3 L867.8 280.1 L867.8 274.0" fill="none" stroke="#00ff00" stroke-width="1" />
<path d="M820.7 307.0 L821.4 304.6 L822.7 299.9 L825.0 297.6 L828.6 297.0 L833.1 298.0 L838.6 300.7 L847.5 303.4 L859.9 306.2 L867.5 305.4 L870.0 300.8 L871.1 292.4 L871.1 280.1 L871.1 274.0" fill="none" stroke="#0000ff" stroke-width="1" />
<path d="M818.9 306.4 L819.6 304.0 L821.1 299.1 L824.2 296.0 L828.7 295.2 L833.7 296.3 L839.2 299.0 L848.0 301.7 L860.1 304.4 L866.7 303.9 L868.3 300.3 L869.3 292.3 L869.3 280.1 L869.3 274.0" fill="none" stroke="#0000ff" stroke-width="1" />
<path d="M872.3 201.3 L873.3 202.2 L875.3 203.8 L876.6 212.5 L877.4 228.2 L876.9 237.4 L875.1 240.1 L872.2 242.6 L868.1 244.9 L865.0 248.0 L863.0 252.0 L863.0 255.0 L865.0 257.0 L868.5 256.0 L873.5 252.0 L876.0 250.0" fill="none" stroke="#0000ff" stroke-width="1" />
<path d="M882.5 208.8 L882.8 220.4 L883.5 243.4 L885.2 257.1 L887.9 261.1 L889.5 266.9 L889.8 274.3 L890.0 278.0" fill="none" stroke="#0000ff" stroke-width="1" />
<path d="M888.6 290.3 L890.7 293.4 L894.8 299.5 L900.2 307.4 L907.2 317.1 L917.7 327.2 L931.7 337.7 L946.2 342.1 L960.4 340.0 L968.9 339.3 L972.0 339.8 L977.3 343.3 L984.6 350.0 L989.3 354.4 L992.0 356.9 L998.7 358.7 L1009.2 360.1 L1024.6 360.9 L1045.1 361.2 L1059.0 360.6 L1066.3 358.8 L1075.3 355.6 L1086.2 350.8 L1093.1 348.1 L1096.1 347.5 L1100.0 347.2 L1105.0 347.2 L1111.9 345.4 L1120.1 342.0 L1126.6 340.0 L1131.8 339.3 L1134.5 339.0" fill="none" stroke="#00ffff" stroke-width="1" />
<path d="M892.6 287.7 L894.6 290.7 L898.7 296.8 L904.2 304.6 L910.8 313.9 L920.7 323.6 L933.9 333.5 L946.6 337.3 L959.8 335.2 L968.9 334.6 L974.0 335.5 L980.2 339.5 L987.9 346.4 L992.7 350.9 L994.0 352.5 L999.6 354.0 L1009.6 355.3 L1024.8 356.2 L1045.1 356.5 L1058.5 355.8 L1064.9 354.2 L1073.5 351.1 L1084.4 346.4 L1091.7 343.6 L1095.5 342.8 L1099.8 342.4 L1104.3 342.4 L1110.3 340.8 L1118.5 337.4 L1125.6 335.3 L1131.2 334.6 L1133.9 334.2" fill="none" stroke="#00ff00" stroke-width="1" />
<path d="M889.9 289.5 L891.9 292.6 L896.0 298.7 L901.5 306.5 L908.3 316.1 L918.6 326.1 L932.4 336.4 L946.4 340.6 L960.2 338.5 L968.9 337.8 L972.6 338.5 L978.2 342.1 L985.6 348.9 L990.4 353.3 L992.6 355.5 L999.0 357.3 L1009.3 358.6 L1024.7 359.4 L1045.1 359.7 L1058.8 359.1 L1065.8 357.4 L1074.8 354.2 L1085.6 349.4 L1092.7 346.7 L1095.9 346.0 L1099.9 345.7 L1104.8 345.7 L1111.4 344.0 L1119.6 340.5 L1126.3 338.5 L1131.6 337.8 L1134.3 337.5" fill="none" stroke="#0000ff" stroke-width="1" />
<path d="M891.3 288.5 L893.4 291.5 L897.5 297.6 L902.9 305.5 L909.7 314.9 L919.8 324.7 L933.2 334.8 L946.5 338.8 L960.0 336.7 L968.9 336.1 L973.3 336.8 L979.3 340.7 L986.9 347.5 L991.6 352.0 L993.4 353.9 L999.3 355.5 L1009.5 356.8 L1024.7 357.7 L1045.1 358.0 L1058.6 357.3 L1065.3 355.7 L1074.1 352.5 L1084.9 347.7 L1092.1 345.0 L1095.7 344.3 L1099.8 343.9 L1104.5 343.9 L1110.8 342.2 L1119.0 338.9 L1125.9 336.8 L1131.4 336.1 L1134.1 335.7" fill="none" stroke="#0000ff" stroke-width="1" />
<path d="M1096.0 348.0 L1096.7 350.1 L1098.1 354.4 L1100.7 358.1 L1104.1 360.8 L1107.3 365.2 L1110.7 372.0 L1112.4 375.4" fill="none" stroke="#00ff00" stroke-width="1" />
<path d="M1097.5 347.5 L1098.2 349.6 L1099.5 353.6 L1101.9 357.0 L1105.3 359.7 L1108.7 364.4 L1112.1 371.3 L1113.8 374.7" fill="none" stroke="#0000ff" stroke-width="1" />
<path d="M1112.5 343.4 L1127.4 353.6" fill="none" stroke="#0000ff" stroke-width="1" />
<path d="M1065.9 361.3 L1066.3 363.3 L1067.0 367.7 L1069.3 372.2 L1072.6 376.2 L1074.1 381.4 L1074.1 388.5 L1072.7 392.7 L1069.7 394.7 L1068.0 395.9" fill="none" stroke="#00ffff" stroke-width="1" />
<path d="M1067.5 361.0 L1067.8 363.1 L1068.6 367.2 L1070.6 371.4 L1074.0 375.4 L1075.7 381.2 L1075.7 388.7 L1074.0 393.6 L1070.6 396.0 L1068.9 397.2" fill="none" stroke="#0000ff" stroke-width="1" />
<path d="M1023.5 231.1 L1020.8 236.9 L1015.4 248.4 L1010.6 259.5 L1006.5 269.9 L996.7 290.3 L981.0 320.5 L973.2 335.7" fill="none" stroke="#00ffff" stroke-width="1" />
<path d="M1025.3 232.0 L1022.6 237.8 L1017.2 249.2 L1012.5 260.2 L1008.3 270.8 L998.5 291.1 L982.8 321.5 L975.0 336.6" fill="none" stroke="#0000ff" stroke-width="1" />
<path d="M1026.7 232.0 L1027.3 232.5 L1028.5 233.5 L1030.3 235.0 L1032.6 237.0 L1035.2 238.6 L1037.9 239.6 L1040.8 240.3 L1043.9 240.5 L1046.9 240.5 L1049.9 240.4 L1052.8 240.1 L1055.7 239.7 L1057.8 239.3 L1059.3 239.1 L1060.0 239.0" fill="none" stroke="#00ffff" stroke-width="1" />
<path d="M958.7 220.7 L959.2 221.3 L960.3 222.7 L961.8 224.7 L964.0 227.6 L966.9 230.2 L970.5 232.4 L974.8 234.1 L979.7 235.5 L984.9 236.4 L990.2 236.9 L995.8 236.8 L1001.6 236.3 L1006.6 235.8 L1011.0 235.3 L1014.7 234.8 L1017.8 234.3 L1020.0 234.0 L1021.5 233.7 L1022.3 233.6" fill="none" stroke="#00ffff" stroke-width="1" />
<path d="M960.0 219.7 L960.5 220.4 L961.5 221.7 L963.1 223.8 L965.1 226.5 L967.9 228.9 L971.3 230.9 L975.3 232.6 L980.1 234.0 L985.1 234.9 L990.3 235.3 L995.8 235.2 L1001.4 234.8 L1006.5 234.2 L1010.8 233.8 L1014.5 233.2 L1017.5 232.8 L1019.8 232.4 L1021.2 232.1 L1022.0 232.0" fill="none" stroke="#00ffff" stroke-width="1" />
<path d="M960.0 262.0 L961.6 261.6 L964.7 260.9 L969.4 259.8 L975.6 258.2 L981.6 256.8 L987.4 255.2 L992.9 253.8 L998.1 252.2 L1002.1 251.1 L1004.7 250.4 L1006.0 250.0" fill="none" stroke="#00ffff" stroke-width="1" />
<path d="M975.0 338.0 L968.0 352.0" fill="none" stroke="#00ffff" stroke-width="1" />
<path d="M978.0 338.0 L972.0 352.0" fill="none" stroke="#00ffff" stroke-width="1" />
<path d="M902.0 197.0 L904.0 198.5 L908.0 201.5 L910.5 205.2 L911.5 209.8 L914.8 213.2 L920.2 215.8 L927.8 218.0 L937.2 220.0 L945.5 222.0 L952.5 224.0 L956.8 226.5 L958.2 229.5 L957.5 231.5 L954.5 232.5 L949.8 233.5 L943.2 234.5 L936.5 234.0 L929.5 232.0 L922.5 228.8 L915.5 224.2 L909.2 220.0 L903.8 216.0 L900.0 212.0 L898.0 208.0 L897.2 204.2 L897.8 200.8 L899.0 198.5 L901.0 197.5 L902.0 197.0" fill="none" stroke="#0000ff" stroke-width="1" />
<path d="M967.0 218.0 L968.8 217.4 L972.2 216.1 L979.0 216.0 L989.0 217.0 L999.0 218.4 L1009.0 220.1 L1016.5 221.5 L1021.5 222.5 L1024.2 224.2 L1024.8 226.8 L1023.0 228.8 L1019.0 230.2 L1011.2 230.9 L999.8 230.6 L989.5 229.5 L980.5 227.5 L973.8 225.4 L969.2 223.1 L967.0 221.0 L967.0 219.0 L967.0 218.0" fill="none" stroke="#0000ff" stroke-width="1" />
<path d="M947.0 288.0 L951.5 288.5 L960.5 289.5 L971.2 289.0 L983.8 287.0 L990.0 286.0" fill="none" stroke="#0000ff" stroke-width="1" />
<path d="M948.0 298.0 L951.0 297.0 L957.0 295.0 L967.5 294.5 L982.5 295.5 L991.0 298.5 L993.0 303.5 L991.5 308.2 L986.5 312.8 L977.0 314.8 L963.0 314.2 L953.5 312.0 L948.5 308.0 L946.5 304.0 L947.5 300.0 L948.0 298.0" fill="none" stroke="#0000ff" stroke-width="1" />
<rect x="927.5" y="223.3" width="3" height="1.5" fill="#000000" />
<rect x="999.5" y="223.8" width="3" height="1.5" fill="#000000" />
<rect x="967.5" y="290.3" width="3" height="1.5" fill="#000000" />
<rect x="964.5" y="306.3" width="3" height="1.5" fill="#000000" />
<path d="M757.0 229.0 L773.0 227.0" fill="none" stroke="#00ffff" stroke-width="1" />
<path d="M764.0 221.0 L766.0 235.0" fill="none" stroke="#00ffff" stroke-width="1" />
<path d="M1017.3 207.0 L1033.3 205.0" fill="none" stroke="#00ffff" stroke-width="1" />
<path d="M1024.3 199.0 L1026.3 213.0" fill="none" stroke="#00ffff" stroke-width="1" />
<path d="M768.0 359.0 L784.0 357.0" fill="none" stroke="#00ffff" stroke-width="1" />
<path d="M775.0 351.0 L777.0 365.0" fill="none" stroke="#00ffff" stroke-width="1" />
<path d="M898.0 348.0 L914.0 346.0" fill="none" stroke="#00ffff" stroke-width="1" />
<path d="M905.0 340.0 L907.0 354.0" fill="none" stroke="#00ffff" stroke-width="1" />
<path d="M887.0 217.0 L903.0 215.0" fill="none" stroke="#00ffff" stroke-width="1" />
<path d="M894.0 209.0 L896.0 223.0" fill="none" stroke="#00ffff" stroke-width="1" />
<path d="M1033.0 335.0 L1049.0 333.0" fill="none" stroke="#00ffff" stroke-width="1" />
<path d="M1040.0 327.0 L1042.0 341.0" fill="none" stroke="#00ffff" stroke-width="1" />
<path d="M751.8 175.0 L1073.0 411.0" fill="none" stroke="#ffff00" stroke-width="1" />
<path d="M751.8 175.0 L1073.0 411.0" fill="none" stroke="#000000" stroke-width="1" stroke-dasharray="3 9"/>
<path d="M825.3 336.5 L848.4 321.5" fill="none" stroke="#ffff00" stroke-width="5.5" />
<path d="M939.6 308.0 L956.0 320.3" fill="none" stroke="#ffff00" stroke-width="5.5" />
<path d="M541.3 336.6 L574.0 336.6 L636.6 287.0 L855.2 224.0" fill="none" stroke="#ff0000" stroke-width="2" stroke-linejoin="round"/>
<path d="M855.2 224.0 L1033.5 282.0 L1137.0 328.5" fill="none" stroke="#ff0000" stroke-width="1.5" />
<rect x="881.0" y="281.0" width="13.5" height="8.5" fill="#ff0000" />
<rect x="867.5" y="282.0" width="5.5" height="10" fill="#ff0000" />
<rect x="528.4" y="334.0" width="11.6" height="4.7" fill="#000000" />
<rect x="534.5" y="342.0" width="13" height="4.8" fill="#000000" />
<rect x="567.2" y="340.7" width="12.3" height="5.2" fill="#000000" />
<rect x="628.5" y="293.0" width="12.9" height="4.8" fill="#000000" />
<rect x="849.0" y="229.3" width="13.8" height="4.3" fill="#000000" />
<rect x="1026.0" y="286.3" width="13" height="4.7" fill="#000000" />
<path d="M1150.6 307.4 L1128.8 354.3" fill="none" stroke="#000000" stroke-width="5.5" />
<rect x="766.0" y="358.0" width="3.2" height="14" fill="#000000" transform="rotate(-5 766 358)"/>
<rect x="773.0" y="366.0" width="3.2" height="14" fill="#000000" transform="rotate(-5 773 366)"/>
<rect x="1014.5" y="207.5" width="3.4" height="14" fill="#000000" transform="rotate(4 1014.5 207.5)"/>
<rect x="1023.5" y="215.5" width="3.4" height="14" fill="#000000" transform="rotate(4 1023.5 215.5)"/>
<circle cx="541.0" cy="165" r="5" fill="#fff" stroke="#0000ff" stroke-width="1.400"/>
<rect x="539.5" y="159.5" width="3" height="11" fill="#0000ff"/>
<rect x="535.5" y="164.5" width="11" height="1.500" fill="#0000ff"/>
<path d="M537.0 166A4.500 4.500 0 0 0 545.0 166Z" fill="#0000ff"/>
<rect x="537.5" y="166.5" width="1.500" height="1.500" fill="#fff"/><rect x="543.0" y="166.5" width="1.500" height="1.500" fill="#fff"/>
<path d="M541.5 171.0 L541.5 337.0" fill="none" stroke="#0000ff" stroke-width="1" stroke-dasharray="5 2"/>
<circle cx="574" cy="165" r="5" fill="#fff" stroke="#0000ff" stroke-width="1.400"/>
<rect x="572.5" y="159.5" width="3" height="11" fill="#0000ff"/>
<rect x="568.5" y="164.5" width="11" height="1.500" fill="#0000ff"/>
<path d="M570 166A4.500 4.500 0 0 0 578 166Z" fill="#0000ff"/>
<rect x="570.5" y="166.5" width="1.500" height="1.500" fill="#fff"/><rect x="576" y="166.5" width="1.500" height="1.500" fill="#fff"/>
<path d="M574.0 171.0 L574.0 337.0" fill="none" stroke="#0000ff" stroke-width="1" stroke-dasharray="5 2"/>
<circle cx="634.0" cy="165" r="5" fill="#fff" stroke="#0000ff" stroke-width="1.400"/>
<rect x="632.5" y="159.5" width="3" height="11" fill="#0000ff"/>
<rect x="628.5" y="164.5" width="11" height="1.500" fill="#0000ff"/>
<path d="M630.0 166A4.500 4.500 0 0 0 638.0 166Z" fill="#0000ff"/>
<rect x="630.5" y="166.5" width="1.500" height="1.500" fill="#fff"/><rect x="636.0" y="166.5" width="1.500" height="1.500" fill="#fff"/>
<path d="M634.5 171.0 L634.5 288.0" fill="none" stroke="#0000ff" stroke-width="1" stroke-dasharray="5 2"/>
<circle cx="856" cy="165" r="5" fill="#fff" stroke="#0000ff" stroke-width="1.400"/>
<rect x="854.5" y="159.5" width="3" height="11" fill="#0000ff"/>
<rect x="850.5" y="164.5" width="11" height="1.500" fill="#0000ff"/>
<path d="M852 166A4.500 4.500 0 0 0 860 166Z" fill="#0000ff"/>
<rect x="852.5" y="166.5" width="1.500" height="1.500" fill="#fff"/><rect x="858" y="166.5" width="1.500" height="1.500" fill="#fff"/>
<path d="M856.0 171.0 L856.0 224.0" fill="none" stroke="#0000ff" stroke-width="1" stroke-dasharray="5 2"/>
<circle cx="1033.0" cy="165" r="5" fill="#fff" stroke="#0000ff" stroke-width="1.400"/>
<rect x="1031.5" y="159.5" width="3" height="11" fill="#0000ff"/>
<rect x="1027.5" y="164.5" width="11" height="1.500" fill="#0000ff"/>
<path d="M1029.0 166A4.500 4.500 0 0 0 1037.0 166Z" fill="#0000ff"/>
<rect x="1029.5" y="166.5" width="1.500" height="1.500" fill="#fff"/><rect x="1035.0" y="166.5" width="1.500" height="1.500" fill="#fff"/>
<path d="M1033.5 171.0 L1033.5 281.0" fill="none" stroke="#0000ff" stroke-width="1" stroke-dasharray="5 2"/>
<circle cx="1129.5" cy="165" r="5" fill="#fff" stroke="#0000ff" stroke-width="1.400"/>
<rect x="1128.0" y="159.5" width="3" height="11" fill="#0000ff"/>
<rect x="1124.0" y="164.5" width="11" height="1.500" fill="#0000ff"/>
<path d="M1125.5 166A4.500 4.500 0 0 0 1133.5 166Z" fill="#0000ff"/>
<rect x="1126.0" y="166.5" width="1.500" height="1.500" fill="#fff"/><rect x="1131.5" y="166.5" width="1.500" height="1.500" fill="#fff"/>
<circle cx="1145" cy="165" r="5" fill="#fff" stroke="#0000ff" stroke-width="1.400"/>
<rect x="1143.5" y="159.5" width="3" height="11" fill="#0000ff"/>
<rect x="1139.5" y="164.5" width="11" height="1.500" fill="#0000ff"/>
<path d="M1141 166A4.500 4.500 0 0 0 1149 166Z" fill="#0000ff"/>
<rect x="1141.5" y="166.5" width="1.500" height="1.500" fill="#fff"/><rect x="1147" y="166.5" width="1.500" height="1.500" fill="#fff"/>
<path d="M1129.5 171.0 L1134.2 278.0 L1137.0 328.5" fill="none" stroke="#0000ff" stroke-width="1" stroke-dasharray="5 2"/>
<path d="M1145.0 171.0 L1139.7 278.0 L1137.6 328.5" fill="none" stroke="#0000ff" stroke-width="1" stroke-dasharray="5 2"/>
<circle cx="1107" cy="183.600" r="19" fill="#fff" stroke="#000" stroke-width="1.200" shape-rendering="auto"/>
<path d="M1087.3 182.0 L1126.8 182.0 L1087.3 187.0 Z" fill="#000000" stroke="#000000" stroke-width="0.5" />
<text x="1129" y="186" font-family="Noto Sans CJK SC, sans-serif" font-size="7" font-weight="bold" fill="#000">北</text>
</g>
<circle cx="1078.5" cy="565" r="14.700" fill="#6fa567" fill-opacity="0.920"/>
<path d="M1078.500 563.500 V580 L1082.300 576.500 L1085.300 583 L1087.700 582 L1084.800 575.700 H1090 Z" fill="#fff" stroke="#000" stroke-width="1"/>
</g></svg>
</body></html>
